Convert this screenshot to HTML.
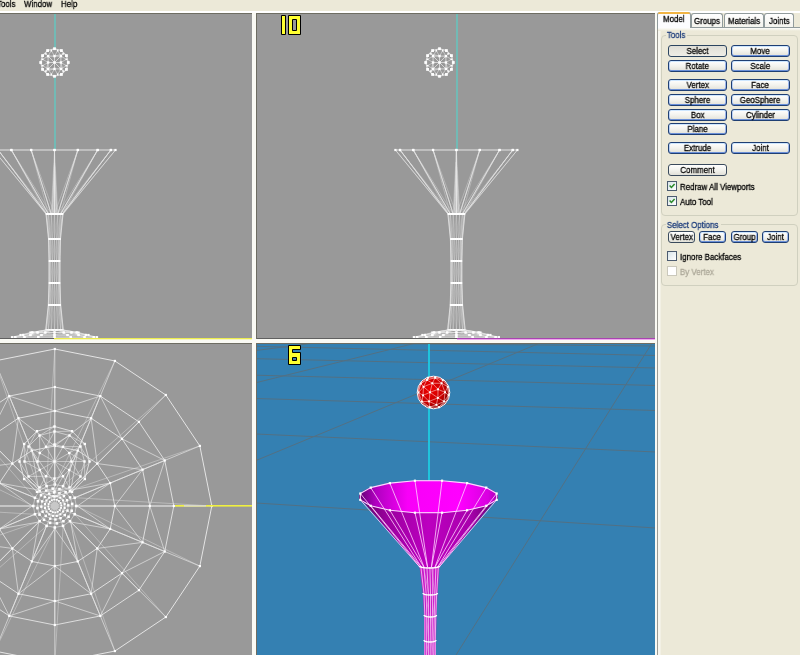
<!DOCTYPE html>
<html><head><meta charset="utf-8">
<style>
*{box-sizing:border-box}
html,body{margin:0;padding:0}
body{width:800px;height:655px;overflow:hidden;position:relative;background:#ECE9D8;font-family:"Liberation Sans",sans-serif;font-size:8px;color:#000}
.a{position:absolute}
.t{position:absolute;white-space:nowrap;line-height:10px;font-size:9px;transform-origin:0 0;transform:scaleX(.88);will-change:transform;-webkit-text-stroke:.3px}
.vp{position:absolute;background:#999;overflow:hidden}
.btn{position:absolute;height:12px;border:1px solid #1F3F73;border-radius:3px;background:linear-gradient(#FFFFFF,#F3F3EE 50%,#E2E1D8);box-shadow:inset 0 1px 0 #CEE7FF,inset 0 -1px 0 #6A8FD8,inset 1px 0 0 #BCD2F6,inset -1px 0 0 #9CB6EE;text-align:center;line-height:10px;font-size:9px;white-space:nowrap}
.btn span{display:inline-block;transform:scaleX(.88);will-change:transform;-webkit-text-stroke:.3px}
.btn.pr{border-color:#2C4560;background:linear-gradient(#E0DFD7,#EEEDE6);box-shadow:none}
.btn.pl{border-color:#3A4A5C;box-shadow:none}
.cb{position:absolute;width:10px;height:10px;border:1px solid #4C5C70;background:linear-gradient(135deg,#D8E4E8,#FFFFFF)}
</style></head><body>
<!-- menu -->
<div class="a" style="left:0;top:11px;width:800px;height:2px;background:#FFFFFF"></div>
<div class="a" style="left:0;top:13px;width:657px;height:1px;background:#6E6D62"></div>
<!-- viewports -->
<div class="vp" id="tl" style="left:0;top:14px;width:252px;height:325px"></div>
<div class="a" style="left:252px;top:13px;width:4px;height:642px;background:#FAFAF4"></div>
<div class="a" style="left:256px;top:13px;width:1px;height:326px;background:#6E6D62"></div>
<div class="vp" id="tr" style="left:257px;top:14px;width:398px;height:325px"></div>
<div class="a" style="left:0;top:339px;width:655px;height:4px;background:#FAFAF4"></div>
<div class="a" style="left:54px;top:339px;width:198px;height:1px;background:#F6F6C0"></div>
<div class="a" style="left:457px;top:339px;width:198px;height:1px;background:#EEA8EE"></div>
<div class="a" style="left:0;top:343px;width:252px;height:1px;background:#6E6D62"></div>
<div class="vp" id="bl" style="left:0;top:344px;width:252px;height:311px"></div>
<div class="a" style="left:256px;top:343px;width:399px;height:1px;background:#6E6D62"></div>
<div class="a" style="left:256px;top:343px;width:1px;height:312px;background:#6E6D62"></div>
<div class="vp" id="br" style="left:257px;top:344px;width:398px;height:311px;background:#3480B2"></div>
<div class="a" style="left:655px;top:13px;width:2px;height:642px;background:#FAFAF4"></div>

<!--VP--><svg class="a" style="left:0;top:14px" width="252" height="325" viewBox="0 14 252 325"><rect x="54" y="14" width="2" height="35" fill="#72BAB5"/><rect x="54" y="76" width="2" height="74" fill="#72BAB5"/><line x1="54.5" y1="76.3" x2="47.6" y2="74.45" stroke="#E4E4E4" stroke-width="1.1"/><line x1="47.6" y1="74.45" x2="42.55" y2="69.4" stroke="#E4E4E4" stroke-width="1.1"/><line x1="42.55" y1="69.4" x2="40.7" y2="62.5" stroke="#E4E4E4" stroke-width="1.1"/><line x1="40.7" y1="62.5" x2="42.55" y2="55.6" stroke="#E4E4E4" stroke-width="1.1"/><line x1="42.55" y1="55.6" x2="47.6" y2="50.55" stroke="#E4E4E4" stroke-width="1.1"/><line x1="47.6" y1="50.55" x2="54.5" y2="48.7" stroke="#E4E4E4" stroke-width="1.1"/><line x1="54.5" y1="48.7" x2="61.4" y2="50.55" stroke="#E4E4E4" stroke-width="1.1"/><line x1="61.4" y1="50.55" x2="66.45" y2="55.6" stroke="#E4E4E4" stroke-width="1.1"/><line x1="66.45" y1="55.6" x2="68.3" y2="62.5" stroke="#E4E4E4" stroke-width="1.1"/><line x1="68.3" y1="62.5" x2="66.45" y2="69.4" stroke="#E4E4E4" stroke-width="1.1"/><line x1="66.45" y1="69.4" x2="61.4" y2="74.45" stroke="#E4E4E4" stroke-width="1.1"/><line x1="61.4" y1="74.45" x2="54.5" y2="76.3" stroke="#E4E4E4" stroke-width="1.1"/><line x1="48.1" y1="56.1" x2="54.5" y2="56.1" stroke="#E4E4E4" stroke-width="0.8"/><line x1="54.5" y1="62.5" x2="48.1" y2="56.1" stroke="#E4E4E4" stroke-width="0.8"/><line x1="54.5" y1="56.1" x2="60.9" y2="56.1" stroke="#E4E4E4" stroke-width="0.8"/><line x1="54.5" y1="62.5" x2="54.5" y2="56.1" stroke="#E4E4E4" stroke-width="0.8"/><line x1="60.9" y1="56.1" x2="60.9" y2="62.5" stroke="#E4E4E4" stroke-width="0.8"/><line x1="54.5" y1="62.5" x2="60.9" y2="56.1" stroke="#E4E4E4" stroke-width="0.8"/><line x1="60.9" y1="62.5" x2="60.9" y2="68.9" stroke="#E4E4E4" stroke-width="0.8"/><line x1="54.5" y1="62.5" x2="60.9" y2="62.5" stroke="#E4E4E4" stroke-width="0.8"/><line x1="60.9" y1="68.9" x2="54.5" y2="68.9" stroke="#E4E4E4" stroke-width="0.8"/><line x1="54.5" y1="62.5" x2="60.9" y2="68.9" stroke="#E4E4E4" stroke-width="0.8"/><line x1="54.5" y1="68.9" x2="48.1" y2="68.9" stroke="#E4E4E4" stroke-width="0.8"/><line x1="54.5" y1="62.5" x2="54.5" y2="68.9" stroke="#E4E4E4" stroke-width="0.8"/><line x1="48.1" y1="68.9" x2="48.1" y2="62.5" stroke="#E4E4E4" stroke-width="0.8"/><line x1="54.5" y1="62.5" x2="48.1" y2="68.9" stroke="#E4E4E4" stroke-width="0.8"/><line x1="48.1" y1="62.5" x2="48.1" y2="56.1" stroke="#E4E4E4" stroke-width="0.8"/><line x1="54.5" y1="62.5" x2="48.1" y2="62.5" stroke="#E4E4E4" stroke-width="0.8"/><line x1="48.1" y1="56.1" x2="45.87" y2="53.87" stroke="#E4E4E4" stroke-width="0.6"/><line x1="48.1" y1="56.1" x2="42.72" y2="59.34" stroke="#E4E4E4" stroke-width="0.6"/><line x1="48.1" y1="56.1" x2="51.34" y2="50.72" stroke="#E4E4E4" stroke-width="0.6"/><line x1="54.5" y1="56.1" x2="57.66" y2="50.72" stroke="#E4E4E4" stroke-width="0.6"/><line x1="54.5" y1="56.1" x2="51.34" y2="50.72" stroke="#E4E4E4" stroke-width="0.6"/><line x1="54.5" y1="56.1" x2="63.13" y2="53.87" stroke="#E4E4E4" stroke-width="0.6"/><line x1="60.9" y1="56.1" x2="63.13" y2="53.87" stroke="#E4E4E4" stroke-width="0.6"/><line x1="60.9" y1="56.1" x2="66.28" y2="59.34" stroke="#E4E4E4" stroke-width="0.6"/><line x1="60.9" y1="56.1" x2="57.66" y2="50.72" stroke="#E4E4E4" stroke-width="0.6"/><line x1="60.9" y1="62.5" x2="66.28" y2="65.66" stroke="#E4E4E4" stroke-width="0.6"/><line x1="60.9" y1="62.5" x2="66.28" y2="59.34" stroke="#E4E4E4" stroke-width="0.6"/><line x1="60.9" y1="62.5" x2="63.13" y2="71.13" stroke="#E4E4E4" stroke-width="0.6"/><line x1="60.9" y1="68.9" x2="63.13" y2="71.13" stroke="#E4E4E4" stroke-width="0.6"/><line x1="60.9" y1="68.9" x2="57.66" y2="74.28" stroke="#E4E4E4" stroke-width="0.6"/><line x1="60.9" y1="68.9" x2="66.28" y2="65.66" stroke="#E4E4E4" stroke-width="0.6"/><line x1="54.5" y1="68.9" x2="51.34" y2="74.28" stroke="#E4E4E4" stroke-width="0.6"/><line x1="54.5" y1="68.9" x2="57.66" y2="74.28" stroke="#E4E4E4" stroke-width="0.6"/><line x1="54.5" y1="68.9" x2="45.87" y2="71.13" stroke="#E4E4E4" stroke-width="0.6"/><line x1="48.1" y1="68.9" x2="45.87" y2="71.13" stroke="#E4E4E4" stroke-width="0.6"/><line x1="48.1" y1="68.9" x2="51.34" y2="74.28" stroke="#E4E4E4" stroke-width="0.6"/><line x1="48.1" y1="68.9" x2="42.72" y2="65.66" stroke="#E4E4E4" stroke-width="0.6"/><line x1="48.1" y1="62.5" x2="42.72" y2="65.66" stroke="#E4E4E4" stroke-width="0.6"/><line x1="48.1" y1="62.5" x2="42.72" y2="59.34" stroke="#E4E4E4" stroke-width="0.6"/><line x1="48.1" y1="62.5" x2="45.87" y2="71.13" stroke="#E4E4E4" stroke-width="0.6"/><rect x="53.1" y="74.9" width="2.8" height="2.8" fill="#FFFFFF"/><rect x="46.2" y="73.05" width="2.8" height="2.8" fill="#FFFFFF"/><rect x="41.15" y="68" width="2.8" height="2.8" fill="#FFFFFF"/><rect x="39.3" y="61.1" width="2.8" height="2.8" fill="#FFFFFF"/><rect x="41.15" y="54.2" width="2.8" height="2.8" fill="#FFFFFF"/><rect x="46.2" y="49.15" width="2.8" height="2.8" fill="#FFFFFF"/><rect x="53.1" y="47.3" width="2.8" height="2.8" fill="#FFFFFF"/><rect x="60" y="49.15" width="2.8" height="2.8" fill="#FFFFFF"/><rect x="65.05" y="54.2" width="2.8" height="2.8" fill="#FFFFFF"/><rect x="66.9" y="61.1" width="2.8" height="2.8" fill="#FFFFFF"/><rect x="65.05" y="68" width="2.8" height="2.8" fill="#FFFFFF"/><rect x="60" y="73.05" width="2.8" height="2.8" fill="#FFFFFF"/><rect x="50.54" y="73.48" width="1.6" height="1.6" fill="#FFFFFF"/><rect x="45.07" y="70.33" width="1.6" height="1.6" fill="#FFFFFF"/><rect x="41.92" y="64.86" width="1.6" height="1.6" fill="#FFFFFF"/><rect x="41.92" y="58.54" width="1.6" height="1.6" fill="#FFFFFF"/><rect x="45.07" y="53.07" width="1.6" height="1.6" fill="#FFFFFF"/><rect x="50.54" y="49.92" width="1.6" height="1.6" fill="#FFFFFF"/><rect x="56.86" y="49.92" width="1.6" height="1.6" fill="#FFFFFF"/><rect x="62.33" y="53.07" width="1.6" height="1.6" fill="#FFFFFF"/><rect x="65.48" y="58.54" width="1.6" height="1.6" fill="#FFFFFF"/><rect x="65.48" y="64.86" width="1.6" height="1.6" fill="#FFFFFF"/><rect x="62.33" y="70.33" width="1.6" height="1.6" fill="#FFFFFF"/><rect x="56.86" y="73.48" width="1.6" height="1.6" fill="#FFFFFF"/><rect x="46.9" y="54.9" width="2.4" height="2.4" fill="#FFFFFF"/><rect x="53.3" y="54.9" width="2.4" height="2.4" fill="#FFFFFF"/><rect x="59.7" y="54.9" width="2.4" height="2.4" fill="#FFFFFF"/><rect x="59.7" y="61.3" width="2.4" height="2.4" fill="#FFFFFF"/><rect x="59.7" y="67.7" width="2.4" height="2.4" fill="#FFFFFF"/><rect x="53.3" y="67.7" width="2.4" height="2.4" fill="#FFFFFF"/><rect x="46.9" y="67.7" width="2.4" height="2.4" fill="#FFFFFF"/><rect x="46.9" y="61.3" width="2.4" height="2.4" fill="#FFFFFF"/><rect x="53.3" y="61.3" width="2.4" height="2.4" fill="#FFFFFF"/><line x1="-6.5" y1="150" x2="115.5" y2="150" stroke="#E4E4E4" stroke-width="1"/><line x1="115.5" y1="150" x2="63" y2="214" stroke="#E4E4E4" stroke-width="0.7"/><line x1="115.5" y1="150" x2="62.35" y2="214" stroke="#E4E4E4" stroke-width="0.5" stroke-opacity="0.7"/><line x1="110.86" y1="150" x2="62.35" y2="214" stroke="#E4E4E4" stroke-width="0.7"/><line x1="110.86" y1="150" x2="60.51" y2="214" stroke="#E4E4E4" stroke-width="0.5" stroke-opacity="0.7"/><line x1="97.63" y1="150" x2="60.51" y2="214" stroke="#E4E4E4" stroke-width="0.7"/><line x1="97.63" y1="150" x2="57.75" y2="214" stroke="#E4E4E4" stroke-width="0.5" stroke-opacity="0.7"/><line x1="77.84" y1="150" x2="57.75" y2="214" stroke="#E4E4E4" stroke-width="0.7"/><line x1="77.84" y1="150" x2="54.5" y2="214" stroke="#E4E4E4" stroke-width="0.5" stroke-opacity="0.7"/><line x1="54.5" y1="150" x2="54.5" y2="214" stroke="#E4E4E4" stroke-width="0.7"/><line x1="54.5" y1="150" x2="51.25" y2="214" stroke="#E4E4E4" stroke-width="0.5" stroke-opacity="0.7"/><line x1="31.16" y1="150" x2="51.25" y2="214" stroke="#E4E4E4" stroke-width="0.7"/><line x1="31.16" y1="150" x2="48.49" y2="214" stroke="#E4E4E4" stroke-width="0.5" stroke-opacity="0.7"/><line x1="11.37" y1="150" x2="48.49" y2="214" stroke="#E4E4E4" stroke-width="0.7"/><line x1="11.37" y1="150" x2="46.65" y2="214" stroke="#E4E4E4" stroke-width="0.5" stroke-opacity="0.7"/><line x1="-1.86" y1="150" x2="46.65" y2="214" stroke="#E4E4E4" stroke-width="0.7"/><line x1="-1.86" y1="150" x2="46" y2="214" stroke="#E4E4E4" stroke-width="0.5" stroke-opacity="0.7"/><line x1="-6.5" y1="150" x2="46" y2="214" stroke="#E4E4E4" stroke-width="0.7"/><line x1="-6.5" y1="150" x2="46.65" y2="214" stroke="#E4E4E4" stroke-width="0.5" stroke-opacity="0.7"/><line x1="-1.86" y1="150" x2="46.65" y2="214" stroke="#E4E4E4" stroke-width="0.7"/><line x1="-1.86" y1="150" x2="48.49" y2="214" stroke="#E4E4E4" stroke-width="0.5" stroke-opacity="0.7"/><line x1="11.37" y1="150" x2="48.49" y2="214" stroke="#E4E4E4" stroke-width="0.7"/><line x1="11.37" y1="150" x2="51.25" y2="214" stroke="#E4E4E4" stroke-width="0.5" stroke-opacity="0.7"/><line x1="31.16" y1="150" x2="51.25" y2="214" stroke="#E4E4E4" stroke-width="0.7"/><line x1="31.16" y1="150" x2="54.5" y2="214" stroke="#E4E4E4" stroke-width="0.5" stroke-opacity="0.7"/><line x1="54.5" y1="150" x2="54.5" y2="214" stroke="#E4E4E4" stroke-width="0.7"/><line x1="54.5" y1="150" x2="57.75" y2="214" stroke="#E4E4E4" stroke-width="0.5" stroke-opacity="0.7"/><line x1="77.84" y1="150" x2="57.75" y2="214" stroke="#E4E4E4" stroke-width="0.7"/><line x1="77.84" y1="150" x2="60.51" y2="214" stroke="#E4E4E4" stroke-width="0.5" stroke-opacity="0.7"/><line x1="97.63" y1="150" x2="60.51" y2="214" stroke="#E4E4E4" stroke-width="0.7"/><line x1="97.63" y1="150" x2="62.35" y2="214" stroke="#E4E4E4" stroke-width="0.5" stroke-opacity="0.7"/><line x1="110.86" y1="150" x2="62.35" y2="214" stroke="#E4E4E4" stroke-width="0.7"/><line x1="110.86" y1="150" x2="63" y2="214" stroke="#E4E4E4" stroke-width="0.5" stroke-opacity="0.7"/><line x1="54.5" y1="162" x2="57.1" y2="214" stroke="#E4E4E4" stroke-width="0.5" stroke-opacity="0.5"/><line x1="54.5" y1="162" x2="56.9" y2="214" stroke="#E4E4E4" stroke-width="0.5" stroke-opacity="0.5"/><line x1="54.5" y1="162" x2="56.34" y2="214" stroke="#E4E4E4" stroke-width="0.5" stroke-opacity="0.5"/><line x1="54.5" y1="162" x2="55.49" y2="214" stroke="#E4E4E4" stroke-width="0.5" stroke-opacity="0.5"/><line x1="54.5" y1="162" x2="54.5" y2="214" stroke="#E4E4E4" stroke-width="0.5" stroke-opacity="0.5"/><line x1="54.5" y1="162" x2="53.51" y2="214" stroke="#E4E4E4" stroke-width="0.5" stroke-opacity="0.5"/><line x1="54.5" y1="162" x2="52.66" y2="214" stroke="#E4E4E4" stroke-width="0.5" stroke-opacity="0.5"/><line x1="54.5" y1="162" x2="52.1" y2="214" stroke="#E4E4E4" stroke-width="0.5" stroke-opacity="0.5"/><line x1="54.5" y1="162" x2="51.9" y2="214" stroke="#E4E4E4" stroke-width="0.5" stroke-opacity="0.5"/><line x1="54.5" y1="162" x2="52.1" y2="214" stroke="#E4E4E4" stroke-width="0.5" stroke-opacity="0.5"/><line x1="54.5" y1="162" x2="52.66" y2="214" stroke="#E4E4E4" stroke-width="0.5" stroke-opacity="0.5"/><line x1="54.5" y1="162" x2="53.51" y2="214" stroke="#E4E4E4" stroke-width="0.5" stroke-opacity="0.5"/><line x1="54.5" y1="162" x2="54.5" y2="214" stroke="#E4E4E4" stroke-width="0.5" stroke-opacity="0.5"/><line x1="54.5" y1="162" x2="55.49" y2="214" stroke="#E4E4E4" stroke-width="0.5" stroke-opacity="0.5"/><line x1="54.5" y1="162" x2="56.34" y2="214" stroke="#E4E4E4" stroke-width="0.5" stroke-opacity="0.5"/><line x1="54.5" y1="162" x2="56.9" y2="214" stroke="#E4E4E4" stroke-width="0.5" stroke-opacity="0.5"/><line x1="54.5" y1="150" x2="54.5" y2="214" stroke="#E4E4E4" stroke-width="0.9"/><line x1="63" y1="214" x2="60.5" y2="239" stroke="#E4E4E4" stroke-width="0.8" stroke-opacity="1"/><line x1="63" y1="214" x2="60.04" y2="239" stroke="#E4E4E4" stroke-width="0.5" stroke-opacity="0.45"/><line x1="62.35" y1="214" x2="60.5" y2="239" stroke="#E4E4E4" stroke-width="0.5" stroke-opacity="0.3"/><line x1="62.35" y1="214" x2="60.04" y2="239" stroke="#E4E4E4" stroke-width="0.6" stroke-opacity="0.7"/><line x1="62.35" y1="214" x2="58.74" y2="239" stroke="#E4E4E4" stroke-width="0.5" stroke-opacity="0.45"/><line x1="60.51" y1="214" x2="60.04" y2="239" stroke="#E4E4E4" stroke-width="0.5" stroke-opacity="0.3"/><line x1="60.51" y1="214" x2="58.74" y2="239" stroke="#E4E4E4" stroke-width="0.6" stroke-opacity="0.7"/><line x1="60.51" y1="214" x2="56.8" y2="239" stroke="#E4E4E4" stroke-width="0.5" stroke-opacity="0.45"/><line x1="57.75" y1="214" x2="58.74" y2="239" stroke="#E4E4E4" stroke-width="0.5" stroke-opacity="0.3"/><line x1="57.75" y1="214" x2="56.8" y2="239" stroke="#E4E4E4" stroke-width="0.6" stroke-opacity="0.7"/><line x1="57.75" y1="214" x2="54.5" y2="239" stroke="#E4E4E4" stroke-width="0.5" stroke-opacity="0.45"/><line x1="54.5" y1="214" x2="56.8" y2="239" stroke="#E4E4E4" stroke-width="0.5" stroke-opacity="0.3"/><line x1="54.5" y1="214" x2="54.5" y2="239" stroke="#E4E4E4" stroke-width="0.6" stroke-opacity="0.7"/><line x1="54.5" y1="214" x2="52.2" y2="239" stroke="#E4E4E4" stroke-width="0.5" stroke-opacity="0.45"/><line x1="51.25" y1="214" x2="54.5" y2="239" stroke="#E4E4E4" stroke-width="0.5" stroke-opacity="0.3"/><line x1="51.25" y1="214" x2="52.2" y2="239" stroke="#E4E4E4" stroke-width="0.6" stroke-opacity="0.7"/><line x1="51.25" y1="214" x2="50.26" y2="239" stroke="#E4E4E4" stroke-width="0.5" stroke-opacity="0.45"/><line x1="48.49" y1="214" x2="52.2" y2="239" stroke="#E4E4E4" stroke-width="0.5" stroke-opacity="0.3"/><line x1="48.49" y1="214" x2="50.26" y2="239" stroke="#E4E4E4" stroke-width="0.6" stroke-opacity="0.7"/><line x1="48.49" y1="214" x2="48.96" y2="239" stroke="#E4E4E4" stroke-width="0.5" stroke-opacity="0.45"/><line x1="46.65" y1="214" x2="50.26" y2="239" stroke="#E4E4E4" stroke-width="0.5" stroke-opacity="0.3"/><line x1="46.65" y1="214" x2="48.96" y2="239" stroke="#E4E4E4" stroke-width="0.6" stroke-opacity="0.7"/><line x1="46.65" y1="214" x2="48.5" y2="239" stroke="#E4E4E4" stroke-width="0.5" stroke-opacity="0.45"/><line x1="46" y1="214" x2="48.96" y2="239" stroke="#E4E4E4" stroke-width="0.5" stroke-opacity="0.3"/><line x1="46" y1="214" x2="48.5" y2="239" stroke="#E4E4E4" stroke-width="0.8" stroke-opacity="1"/><line x1="60.5" y1="239" x2="60" y2="261" stroke="#E4E4E4" stroke-width="0.8" stroke-opacity="1"/><line x1="60.5" y1="239" x2="59.58" y2="261" stroke="#E4E4E4" stroke-width="0.5" stroke-opacity="0.45"/><line x1="60.04" y1="239" x2="60" y2="261" stroke="#E4E4E4" stroke-width="0.5" stroke-opacity="0.3"/><line x1="60.04" y1="239" x2="59.58" y2="261" stroke="#E4E4E4" stroke-width="0.6" stroke-opacity="0.7"/><line x1="60.04" y1="239" x2="58.39" y2="261" stroke="#E4E4E4" stroke-width="0.5" stroke-opacity="0.45"/><line x1="58.74" y1="239" x2="59.58" y2="261" stroke="#E4E4E4" stroke-width="0.5" stroke-opacity="0.3"/><line x1="58.74" y1="239" x2="58.39" y2="261" stroke="#E4E4E4" stroke-width="0.6" stroke-opacity="0.7"/><line x1="58.74" y1="239" x2="56.6" y2="261" stroke="#E4E4E4" stroke-width="0.5" stroke-opacity="0.45"/><line x1="56.8" y1="239" x2="58.39" y2="261" stroke="#E4E4E4" stroke-width="0.5" stroke-opacity="0.3"/><line x1="56.8" y1="239" x2="56.6" y2="261" stroke="#E4E4E4" stroke-width="0.6" stroke-opacity="0.7"/><line x1="56.8" y1="239" x2="54.5" y2="261" stroke="#E4E4E4" stroke-width="0.5" stroke-opacity="0.45"/><line x1="54.5" y1="239" x2="56.6" y2="261" stroke="#E4E4E4" stroke-width="0.5" stroke-opacity="0.3"/><line x1="54.5" y1="239" x2="54.5" y2="261" stroke="#E4E4E4" stroke-width="0.6" stroke-opacity="0.7"/><line x1="54.5" y1="239" x2="52.4" y2="261" stroke="#E4E4E4" stroke-width="0.5" stroke-opacity="0.45"/><line x1="52.2" y1="239" x2="54.5" y2="261" stroke="#E4E4E4" stroke-width="0.5" stroke-opacity="0.3"/><line x1="52.2" y1="239" x2="52.4" y2="261" stroke="#E4E4E4" stroke-width="0.6" stroke-opacity="0.7"/><line x1="52.2" y1="239" x2="50.61" y2="261" stroke="#E4E4E4" stroke-width="0.5" stroke-opacity="0.45"/><line x1="50.26" y1="239" x2="52.4" y2="261" stroke="#E4E4E4" stroke-width="0.5" stroke-opacity="0.3"/><line x1="50.26" y1="239" x2="50.61" y2="261" stroke="#E4E4E4" stroke-width="0.6" stroke-opacity="0.7"/><line x1="50.26" y1="239" x2="49.42" y2="261" stroke="#E4E4E4" stroke-width="0.5" stroke-opacity="0.45"/><line x1="48.96" y1="239" x2="50.61" y2="261" stroke="#E4E4E4" stroke-width="0.5" stroke-opacity="0.3"/><line x1="48.96" y1="239" x2="49.42" y2="261" stroke="#E4E4E4" stroke-width="0.6" stroke-opacity="0.7"/><line x1="48.96" y1="239" x2="49" y2="261" stroke="#E4E4E4" stroke-width="0.5" stroke-opacity="0.45"/><line x1="48.5" y1="239" x2="49.42" y2="261" stroke="#E4E4E4" stroke-width="0.5" stroke-opacity="0.3"/><line x1="48.5" y1="239" x2="49" y2="261" stroke="#E4E4E4" stroke-width="0.8" stroke-opacity="1"/><line x1="60" y1="261" x2="60" y2="283" stroke="#E4E4E4" stroke-width="0.8" stroke-opacity="1"/><line x1="60" y1="261" x2="59.58" y2="283" stroke="#E4E4E4" stroke-width="0.5" stroke-opacity="0.45"/><line x1="59.58" y1="261" x2="60" y2="283" stroke="#E4E4E4" stroke-width="0.5" stroke-opacity="0.3"/><line x1="59.58" y1="261" x2="59.58" y2="283" stroke="#E4E4E4" stroke-width="0.6" stroke-opacity="0.7"/><line x1="59.58" y1="261" x2="58.39" y2="283" stroke="#E4E4E4" stroke-width="0.5" stroke-opacity="0.45"/><line x1="58.39" y1="261" x2="59.58" y2="283" stroke="#E4E4E4" stroke-width="0.5" stroke-opacity="0.3"/><line x1="58.39" y1="261" x2="58.39" y2="283" stroke="#E4E4E4" stroke-width="0.6" stroke-opacity="0.7"/><line x1="58.39" y1="261" x2="56.6" y2="283" stroke="#E4E4E4" stroke-width="0.5" stroke-opacity="0.45"/><line x1="56.6" y1="261" x2="58.39" y2="283" stroke="#E4E4E4" stroke-width="0.5" stroke-opacity="0.3"/><line x1="56.6" y1="261" x2="56.6" y2="283" stroke="#E4E4E4" stroke-width="0.6" stroke-opacity="0.7"/><line x1="56.6" y1="261" x2="54.5" y2="283" stroke="#E4E4E4" stroke-width="0.5" stroke-opacity="0.45"/><line x1="54.5" y1="261" x2="56.6" y2="283" stroke="#E4E4E4" stroke-width="0.5" stroke-opacity="0.3"/><line x1="54.5" y1="261" x2="54.5" y2="283" stroke="#E4E4E4" stroke-width="0.6" stroke-opacity="0.7"/><line x1="54.5" y1="261" x2="52.4" y2="283" stroke="#E4E4E4" stroke-width="0.5" stroke-opacity="0.45"/><line x1="52.4" y1="261" x2="54.5" y2="283" stroke="#E4E4E4" stroke-width="0.5" stroke-opacity="0.3"/><line x1="52.4" y1="261" x2="52.4" y2="283" stroke="#E4E4E4" stroke-width="0.6" stroke-opacity="0.7"/><line x1="52.4" y1="261" x2="50.61" y2="283" stroke="#E4E4E4" stroke-width="0.5" stroke-opacity="0.45"/><line x1="50.61" y1="261" x2="52.4" y2="283" stroke="#E4E4E4" stroke-width="0.5" stroke-opacity="0.3"/><line x1="50.61" y1="261" x2="50.61" y2="283" stroke="#E4E4E4" stroke-width="0.6" stroke-opacity="0.7"/><line x1="50.61" y1="261" x2="49.42" y2="283" stroke="#E4E4E4" stroke-width="0.5" stroke-opacity="0.45"/><line x1="49.42" y1="261" x2="50.61" y2="283" stroke="#E4E4E4" stroke-width="0.5" stroke-opacity="0.3"/><line x1="49.42" y1="261" x2="49.42" y2="283" stroke="#E4E4E4" stroke-width="0.6" stroke-opacity="0.7"/><line x1="49.42" y1="261" x2="49" y2="283" stroke="#E4E4E4" stroke-width="0.5" stroke-opacity="0.45"/><line x1="49" y1="261" x2="49.42" y2="283" stroke="#E4E4E4" stroke-width="0.5" stroke-opacity="0.3"/><line x1="49" y1="261" x2="49" y2="283" stroke="#E4E4E4" stroke-width="0.8" stroke-opacity="1"/><line x1="60" y1="283" x2="60.7" y2="305" stroke="#E4E4E4" stroke-width="0.8" stroke-opacity="1"/><line x1="60" y1="283" x2="60.23" y2="305" stroke="#E4E4E4" stroke-width="0.5" stroke-opacity="0.45"/><line x1="59.58" y1="283" x2="60.7" y2="305" stroke="#E4E4E4" stroke-width="0.5" stroke-opacity="0.3"/><line x1="59.58" y1="283" x2="60.23" y2="305" stroke="#E4E4E4" stroke-width="0.6" stroke-opacity="0.7"/><line x1="59.58" y1="283" x2="58.88" y2="305" stroke="#E4E4E4" stroke-width="0.5" stroke-opacity="0.45"/><line x1="58.39" y1="283" x2="60.23" y2="305" stroke="#E4E4E4" stroke-width="0.5" stroke-opacity="0.3"/><line x1="58.39" y1="283" x2="58.88" y2="305" stroke="#E4E4E4" stroke-width="0.6" stroke-opacity="0.7"/><line x1="58.39" y1="283" x2="56.87" y2="305" stroke="#E4E4E4" stroke-width="0.5" stroke-opacity="0.45"/><line x1="56.6" y1="283" x2="58.88" y2="305" stroke="#E4E4E4" stroke-width="0.5" stroke-opacity="0.3"/><line x1="56.6" y1="283" x2="56.87" y2="305" stroke="#E4E4E4" stroke-width="0.6" stroke-opacity="0.7"/><line x1="56.6" y1="283" x2="54.5" y2="305" stroke="#E4E4E4" stroke-width="0.5" stroke-opacity="0.45"/><line x1="54.5" y1="283" x2="56.87" y2="305" stroke="#E4E4E4" stroke-width="0.5" stroke-opacity="0.3"/><line x1="54.5" y1="283" x2="54.5" y2="305" stroke="#E4E4E4" stroke-width="0.6" stroke-opacity="0.7"/><line x1="54.5" y1="283" x2="52.13" y2="305" stroke="#E4E4E4" stroke-width="0.5" stroke-opacity="0.45"/><line x1="52.4" y1="283" x2="54.5" y2="305" stroke="#E4E4E4" stroke-width="0.5" stroke-opacity="0.3"/><line x1="52.4" y1="283" x2="52.13" y2="305" stroke="#E4E4E4" stroke-width="0.6" stroke-opacity="0.7"/><line x1="52.4" y1="283" x2="50.12" y2="305" stroke="#E4E4E4" stroke-width="0.5" stroke-opacity="0.45"/><line x1="50.61" y1="283" x2="52.13" y2="305" stroke="#E4E4E4" stroke-width="0.5" stroke-opacity="0.3"/><line x1="50.61" y1="283" x2="50.12" y2="305" stroke="#E4E4E4" stroke-width="0.6" stroke-opacity="0.7"/><line x1="50.61" y1="283" x2="48.77" y2="305" stroke="#E4E4E4" stroke-width="0.5" stroke-opacity="0.45"/><line x1="49.42" y1="283" x2="50.12" y2="305" stroke="#E4E4E4" stroke-width="0.5" stroke-opacity="0.3"/><line x1="49.42" y1="283" x2="48.77" y2="305" stroke="#E4E4E4" stroke-width="0.6" stroke-opacity="0.7"/><line x1="49.42" y1="283" x2="48.3" y2="305" stroke="#E4E4E4" stroke-width="0.5" stroke-opacity="0.45"/><line x1="49" y1="283" x2="48.77" y2="305" stroke="#E4E4E4" stroke-width="0.5" stroke-opacity="0.3"/><line x1="49" y1="283" x2="48.3" y2="305" stroke="#E4E4E4" stroke-width="0.8" stroke-opacity="1"/><line x1="60.7" y1="305" x2="63.3" y2="330" stroke="#E4E4E4" stroke-width="0.8" stroke-opacity="1"/><line x1="60.7" y1="305" x2="62.63" y2="330" stroke="#E4E4E4" stroke-width="0.5" stroke-opacity="0.45"/><line x1="60.23" y1="305" x2="63.3" y2="330" stroke="#E4E4E4" stroke-width="0.5" stroke-opacity="0.3"/><line x1="60.23" y1="305" x2="62.63" y2="330" stroke="#E4E4E4" stroke-width="0.6" stroke-opacity="0.7"/><line x1="60.23" y1="305" x2="60.72" y2="330" stroke="#E4E4E4" stroke-width="0.5" stroke-opacity="0.45"/><line x1="58.88" y1="305" x2="62.63" y2="330" stroke="#E4E4E4" stroke-width="0.5" stroke-opacity="0.3"/><line x1="58.88" y1="305" x2="60.72" y2="330" stroke="#E4E4E4" stroke-width="0.6" stroke-opacity="0.7"/><line x1="58.88" y1="305" x2="57.87" y2="330" stroke="#E4E4E4" stroke-width="0.5" stroke-opacity="0.45"/><line x1="56.87" y1="305" x2="60.72" y2="330" stroke="#E4E4E4" stroke-width="0.5" stroke-opacity="0.3"/><line x1="56.87" y1="305" x2="57.87" y2="330" stroke="#E4E4E4" stroke-width="0.6" stroke-opacity="0.7"/><line x1="56.87" y1="305" x2="54.5" y2="330" stroke="#E4E4E4" stroke-width="0.5" stroke-opacity="0.45"/><line x1="54.5" y1="305" x2="57.87" y2="330" stroke="#E4E4E4" stroke-width="0.5" stroke-opacity="0.3"/><line x1="54.5" y1="305" x2="54.5" y2="330" stroke="#E4E4E4" stroke-width="0.6" stroke-opacity="0.7"/><line x1="54.5" y1="305" x2="51.13" y2="330" stroke="#E4E4E4" stroke-width="0.5" stroke-opacity="0.45"/><line x1="52.13" y1="305" x2="54.5" y2="330" stroke="#E4E4E4" stroke-width="0.5" stroke-opacity="0.3"/><line x1="52.13" y1="305" x2="51.13" y2="330" stroke="#E4E4E4" stroke-width="0.6" stroke-opacity="0.7"/><line x1="52.13" y1="305" x2="48.28" y2="330" stroke="#E4E4E4" stroke-width="0.5" stroke-opacity="0.45"/><line x1="50.12" y1="305" x2="51.13" y2="330" stroke="#E4E4E4" stroke-width="0.5" stroke-opacity="0.3"/><line x1="50.12" y1="305" x2="48.28" y2="330" stroke="#E4E4E4" stroke-width="0.6" stroke-opacity="0.7"/><line x1="50.12" y1="305" x2="46.37" y2="330" stroke="#E4E4E4" stroke-width="0.5" stroke-opacity="0.45"/><line x1="48.77" y1="305" x2="48.28" y2="330" stroke="#E4E4E4" stroke-width="0.5" stroke-opacity="0.3"/><line x1="48.77" y1="305" x2="46.37" y2="330" stroke="#E4E4E4" stroke-width="0.6" stroke-opacity="0.7"/><line x1="48.77" y1="305" x2="45.7" y2="330" stroke="#E4E4E4" stroke-width="0.5" stroke-opacity="0.45"/><line x1="48.3" y1="305" x2="46.37" y2="330" stroke="#E4E4E4" stroke-width="0.5" stroke-opacity="0.3"/><line x1="48.3" y1="305" x2="45.7" y2="330" stroke="#E4E4E4" stroke-width="0.8" stroke-opacity="1"/><rect x="45.7" y="213" width="17.6" height="2" fill="#FFF"/><rect x="48.2" y="238" width="12.6" height="2" fill="#FFF"/><rect x="48.7" y="260" width="11.6" height="2" fill="#FFF"/><rect x="48.7" y="282" width="11.6" height="2" fill="#FFF"/><rect x="48" y="304" width="13" height="2" fill="#FFF"/><rect x="45.4" y="329" width="18.2" height="2" fill="#FFF"/><line x1="63.3" y1="330" x2="78.5" y2="332.5" stroke="#E4E4E4" stroke-width="0.6" stroke-opacity="0.8"/><line x1="63.3" y1="330" x2="76.67" y2="332.5" stroke="#E4E4E4" stroke-width="0.5" stroke-opacity="0.6"/><line x1="62.63" y1="330" x2="76.67" y2="332.5" stroke="#E4E4E4" stroke-width="0.6" stroke-opacity="0.8"/><line x1="62.63" y1="330" x2="71.47" y2="332.5" stroke="#E4E4E4" stroke-width="0.5" stroke-opacity="0.6"/><line x1="60.72" y1="330" x2="71.47" y2="332.5" stroke="#E4E4E4" stroke-width="0.6" stroke-opacity="0.8"/><line x1="60.72" y1="330" x2="63.68" y2="332.5" stroke="#E4E4E4" stroke-width="0.5" stroke-opacity="0.6"/><line x1="57.87" y1="330" x2="63.68" y2="332.5" stroke="#E4E4E4" stroke-width="0.6" stroke-opacity="0.8"/><line x1="57.87" y1="330" x2="54.5" y2="332.5" stroke="#E4E4E4" stroke-width="0.5" stroke-opacity="0.6"/><line x1="54.5" y1="330" x2="54.5" y2="332.5" stroke="#E4E4E4" stroke-width="0.6" stroke-opacity="0.8"/><line x1="54.5" y1="330" x2="45.32" y2="332.5" stroke="#E4E4E4" stroke-width="0.5" stroke-opacity="0.6"/><line x1="51.13" y1="330" x2="45.32" y2="332.5" stroke="#E4E4E4" stroke-width="0.6" stroke-opacity="0.8"/><line x1="51.13" y1="330" x2="37.53" y2="332.5" stroke="#E4E4E4" stroke-width="0.5" stroke-opacity="0.6"/><line x1="48.28" y1="330" x2="37.53" y2="332.5" stroke="#E4E4E4" stroke-width="0.6" stroke-opacity="0.8"/><line x1="48.28" y1="330" x2="32.33" y2="332.5" stroke="#E4E4E4" stroke-width="0.5" stroke-opacity="0.6"/><line x1="46.37" y1="330" x2="32.33" y2="332.5" stroke="#E4E4E4" stroke-width="0.6" stroke-opacity="0.8"/><line x1="46.37" y1="330" x2="30.5" y2="332.5" stroke="#E4E4E4" stroke-width="0.5" stroke-opacity="0.6"/><line x1="45.7" y1="330" x2="30.5" y2="332.5" stroke="#E4E4E4" stroke-width="0.6" stroke-opacity="0.8"/><line x1="45.7" y1="330" x2="32.33" y2="332.5" stroke="#E4E4E4" stroke-width="0.5" stroke-opacity="0.6"/><line x1="46.37" y1="330" x2="32.33" y2="332.5" stroke="#E4E4E4" stroke-width="0.6" stroke-opacity="0.8"/><line x1="46.37" y1="330" x2="37.53" y2="332.5" stroke="#E4E4E4" stroke-width="0.5" stroke-opacity="0.6"/><line x1="48.28" y1="330" x2="37.53" y2="332.5" stroke="#E4E4E4" stroke-width="0.6" stroke-opacity="0.8"/><line x1="48.28" y1="330" x2="45.32" y2="332.5" stroke="#E4E4E4" stroke-width="0.5" stroke-opacity="0.6"/><line x1="51.13" y1="330" x2="45.32" y2="332.5" stroke="#E4E4E4" stroke-width="0.6" stroke-opacity="0.8"/><line x1="51.13" y1="330" x2="54.5" y2="332.5" stroke="#E4E4E4" stroke-width="0.5" stroke-opacity="0.6"/><line x1="54.5" y1="330" x2="54.5" y2="332.5" stroke="#E4E4E4" stroke-width="0.6" stroke-opacity="0.8"/><line x1="54.5" y1="330" x2="63.68" y2="332.5" stroke="#E4E4E4" stroke-width="0.5" stroke-opacity="0.6"/><line x1="57.87" y1="330" x2="63.68" y2="332.5" stroke="#E4E4E4" stroke-width="0.6" stroke-opacity="0.8"/><line x1="57.87" y1="330" x2="71.47" y2="332.5" stroke="#E4E4E4" stroke-width="0.5" stroke-opacity="0.6"/><line x1="60.72" y1="330" x2="71.47" y2="332.5" stroke="#E4E4E4" stroke-width="0.6" stroke-opacity="0.8"/><line x1="60.72" y1="330" x2="76.67" y2="332.5" stroke="#E4E4E4" stroke-width="0.5" stroke-opacity="0.6"/><line x1="62.63" y1="330" x2="76.67" y2="332.5" stroke="#E4E4E4" stroke-width="0.6" stroke-opacity="0.8"/><line x1="62.63" y1="330" x2="78.5" y2="332.5" stroke="#E4E4E4" stroke-width="0.5" stroke-opacity="0.6"/><line x1="78.5" y1="332.5" x2="88.5" y2="335" stroke="#E4E4E4" stroke-width="0.6" stroke-opacity="0.8"/><line x1="78.5" y1="332.5" x2="85.91" y2="335" stroke="#E4E4E4" stroke-width="0.5" stroke-opacity="0.6"/><line x1="76.67" y1="332.5" x2="85.91" y2="335" stroke="#E4E4E4" stroke-width="0.6" stroke-opacity="0.8"/><line x1="76.67" y1="332.5" x2="78.54" y2="335" stroke="#E4E4E4" stroke-width="0.5" stroke-opacity="0.6"/><line x1="71.47" y1="332.5" x2="78.54" y2="335" stroke="#E4E4E4" stroke-width="0.6" stroke-opacity="0.8"/><line x1="71.47" y1="332.5" x2="67.51" y2="335" stroke="#E4E4E4" stroke-width="0.5" stroke-opacity="0.6"/><line x1="63.68" y1="332.5" x2="67.51" y2="335" stroke="#E4E4E4" stroke-width="0.6" stroke-opacity="0.8"/><line x1="63.68" y1="332.5" x2="54.5" y2="335" stroke="#E4E4E4" stroke-width="0.5" stroke-opacity="0.6"/><line x1="54.5" y1="332.5" x2="54.5" y2="335" stroke="#E4E4E4" stroke-width="0.6" stroke-opacity="0.8"/><line x1="54.5" y1="332.5" x2="41.49" y2="335" stroke="#E4E4E4" stroke-width="0.5" stroke-opacity="0.6"/><line x1="45.32" y1="332.5" x2="41.49" y2="335" stroke="#E4E4E4" stroke-width="0.6" stroke-opacity="0.8"/><line x1="45.32" y1="332.5" x2="30.46" y2="335" stroke="#E4E4E4" stroke-width="0.5" stroke-opacity="0.6"/><line x1="37.53" y1="332.5" x2="30.46" y2="335" stroke="#E4E4E4" stroke-width="0.6" stroke-opacity="0.8"/><line x1="37.53" y1="332.5" x2="23.09" y2="335" stroke="#E4E4E4" stroke-width="0.5" stroke-opacity="0.6"/><line x1="32.33" y1="332.5" x2="23.09" y2="335" stroke="#E4E4E4" stroke-width="0.6" stroke-opacity="0.8"/><line x1="32.33" y1="332.5" x2="20.5" y2="335" stroke="#E4E4E4" stroke-width="0.5" stroke-opacity="0.6"/><line x1="30.5" y1="332.5" x2="20.5" y2="335" stroke="#E4E4E4" stroke-width="0.6" stroke-opacity="0.8"/><line x1="30.5" y1="332.5" x2="23.09" y2="335" stroke="#E4E4E4" stroke-width="0.5" stroke-opacity="0.6"/><line x1="32.33" y1="332.5" x2="23.09" y2="335" stroke="#E4E4E4" stroke-width="0.6" stroke-opacity="0.8"/><line x1="32.33" y1="332.5" x2="30.46" y2="335" stroke="#E4E4E4" stroke-width="0.5" stroke-opacity="0.6"/><line x1="37.53" y1="332.5" x2="30.46" y2="335" stroke="#E4E4E4" stroke-width="0.6" stroke-opacity="0.8"/><line x1="37.53" y1="332.5" x2="41.49" y2="335" stroke="#E4E4E4" stroke-width="0.5" stroke-opacity="0.6"/><line x1="45.32" y1="332.5" x2="41.49" y2="335" stroke="#E4E4E4" stroke-width="0.6" stroke-opacity="0.8"/><line x1="45.32" y1="332.5" x2="54.5" y2="335" stroke="#E4E4E4" stroke-width="0.5" stroke-opacity="0.6"/><line x1="54.5" y1="332.5" x2="54.5" y2="335" stroke="#E4E4E4" stroke-width="0.6" stroke-opacity="0.8"/><line x1="54.5" y1="332.5" x2="67.51" y2="335" stroke="#E4E4E4" stroke-width="0.5" stroke-opacity="0.6"/><line x1="63.68" y1="332.5" x2="67.51" y2="335" stroke="#E4E4E4" stroke-width="0.6" stroke-opacity="0.8"/><line x1="63.68" y1="332.5" x2="78.54" y2="335" stroke="#E4E4E4" stroke-width="0.5" stroke-opacity="0.6"/><line x1="71.47" y1="332.5" x2="78.54" y2="335" stroke="#E4E4E4" stroke-width="0.6" stroke-opacity="0.8"/><line x1="71.47" y1="332.5" x2="85.91" y2="335" stroke="#E4E4E4" stroke-width="0.5" stroke-opacity="0.6"/><line x1="76.67" y1="332.5" x2="85.91" y2="335" stroke="#E4E4E4" stroke-width="0.6" stroke-opacity="0.8"/><line x1="76.67" y1="332.5" x2="88.5" y2="335" stroke="#E4E4E4" stroke-width="0.5" stroke-opacity="0.6"/><line x1="88.5" y1="335" x2="97" y2="337.2" stroke="#E4E4E4" stroke-width="0.6" stroke-opacity="0.8"/><line x1="88.5" y1="335" x2="93.76" y2="337.2" stroke="#E4E4E4" stroke-width="0.5" stroke-opacity="0.6"/><line x1="85.91" y1="335" x2="93.76" y2="337.2" stroke="#E4E4E4" stroke-width="0.6" stroke-opacity="0.8"/><line x1="85.91" y1="335" x2="84.55" y2="337.2" stroke="#E4E4E4" stroke-width="0.5" stroke-opacity="0.6"/><line x1="78.54" y1="335" x2="84.55" y2="337.2" stroke="#E4E4E4" stroke-width="0.6" stroke-opacity="0.8"/><line x1="78.54" y1="335" x2="70.76" y2="337.2" stroke="#E4E4E4" stroke-width="0.5" stroke-opacity="0.6"/><line x1="67.51" y1="335" x2="70.76" y2="337.2" stroke="#E4E4E4" stroke-width="0.6" stroke-opacity="0.8"/><line x1="67.51" y1="335" x2="54.5" y2="337.2" stroke="#E4E4E4" stroke-width="0.5" stroke-opacity="0.6"/><line x1="54.5" y1="335" x2="54.5" y2="337.2" stroke="#E4E4E4" stroke-width="0.6" stroke-opacity="0.8"/><line x1="54.5" y1="335" x2="38.24" y2="337.2" stroke="#E4E4E4" stroke-width="0.5" stroke-opacity="0.6"/><line x1="41.49" y1="335" x2="38.24" y2="337.2" stroke="#E4E4E4" stroke-width="0.6" stroke-opacity="0.8"/><line x1="41.49" y1="335" x2="24.45" y2="337.2" stroke="#E4E4E4" stroke-width="0.5" stroke-opacity="0.6"/><line x1="30.46" y1="335" x2="24.45" y2="337.2" stroke="#E4E4E4" stroke-width="0.6" stroke-opacity="0.8"/><line x1="30.46" y1="335" x2="15.24" y2="337.2" stroke="#E4E4E4" stroke-width="0.5" stroke-opacity="0.6"/><line x1="23.09" y1="335" x2="15.24" y2="337.2" stroke="#E4E4E4" stroke-width="0.6" stroke-opacity="0.8"/><line x1="23.09" y1="335" x2="12" y2="337.2" stroke="#E4E4E4" stroke-width="0.5" stroke-opacity="0.6"/><line x1="20.5" y1="335" x2="12" y2="337.2" stroke="#E4E4E4" stroke-width="0.6" stroke-opacity="0.8"/><line x1="20.5" y1="335" x2="15.24" y2="337.2" stroke="#E4E4E4" stroke-width="0.5" stroke-opacity="0.6"/><line x1="23.09" y1="335" x2="15.24" y2="337.2" stroke="#E4E4E4" stroke-width="0.6" stroke-opacity="0.8"/><line x1="23.09" y1="335" x2="24.45" y2="337.2" stroke="#E4E4E4" stroke-width="0.5" stroke-opacity="0.6"/><line x1="30.46" y1="335" x2="24.45" y2="337.2" stroke="#E4E4E4" stroke-width="0.6" stroke-opacity="0.8"/><line x1="30.46" y1="335" x2="38.24" y2="337.2" stroke="#E4E4E4" stroke-width="0.5" stroke-opacity="0.6"/><line x1="41.49" y1="335" x2="38.24" y2="337.2" stroke="#E4E4E4" stroke-width="0.6" stroke-opacity="0.8"/><line x1="41.49" y1="335" x2="54.5" y2="337.2" stroke="#E4E4E4" stroke-width="0.5" stroke-opacity="0.6"/><line x1="54.5" y1="335" x2="54.5" y2="337.2" stroke="#E4E4E4" stroke-width="0.6" stroke-opacity="0.8"/><line x1="54.5" y1="335" x2="70.76" y2="337.2" stroke="#E4E4E4" stroke-width="0.5" stroke-opacity="0.6"/><line x1="67.51" y1="335" x2="70.76" y2="337.2" stroke="#E4E4E4" stroke-width="0.6" stroke-opacity="0.8"/><line x1="67.51" y1="335" x2="84.55" y2="337.2" stroke="#E4E4E4" stroke-width="0.5" stroke-opacity="0.6"/><line x1="78.54" y1="335" x2="84.55" y2="337.2" stroke="#E4E4E4" stroke-width="0.6" stroke-opacity="0.8"/><line x1="78.54" y1="335" x2="93.76" y2="337.2" stroke="#E4E4E4" stroke-width="0.5" stroke-opacity="0.6"/><line x1="85.91" y1="335" x2="93.76" y2="337.2" stroke="#E4E4E4" stroke-width="0.6" stroke-opacity="0.8"/><line x1="85.91" y1="335" x2="97" y2="337.2" stroke="#E4E4E4" stroke-width="0.5" stroke-opacity="0.6"/><line x1="30.5" y1="332.5" x2="78.5" y2="332.5" stroke="#E4E4E4" stroke-width="0.9"/><rect x="77.4" y="331.4" width="2.2" height="2.2" fill="#FFFFFF"/><rect x="75.57" y="331.4" width="2.2" height="2.2" fill="#FFFFFF"/><rect x="70.37" y="331.4" width="2.2" height="2.2" fill="#FFFFFF"/><rect x="62.58" y="331.4" width="2.2" height="2.2" fill="#FFFFFF"/><rect x="53.4" y="331.4" width="2.2" height="2.2" fill="#FFFFFF"/><rect x="44.22" y="331.4" width="2.2" height="2.2" fill="#FFFFFF"/><rect x="36.43" y="331.4" width="2.2" height="2.2" fill="#FFFFFF"/><rect x="31.23" y="331.4" width="2.2" height="2.2" fill="#FFFFFF"/><rect x="29.4" y="331.4" width="2.2" height="2.2" fill="#FFFFFF"/><rect x="31.23" y="331.4" width="2.2" height="2.2" fill="#FFFFFF"/><rect x="36.43" y="331.4" width="2.2" height="2.2" fill="#FFFFFF"/><rect x="44.22" y="331.4" width="2.2" height="2.2" fill="#FFFFFF"/><rect x="53.4" y="331.4" width="2.2" height="2.2" fill="#FFFFFF"/><rect x="62.58" y="331.4" width="2.2" height="2.2" fill="#FFFFFF"/><rect x="70.37" y="331.4" width="2.2" height="2.2" fill="#FFFFFF"/><rect x="75.57" y="331.4" width="2.2" height="2.2" fill="#FFFFFF"/><line x1="20.5" y1="335" x2="88.5" y2="335" stroke="#E4E4E4" stroke-width="0.9"/><rect x="87.4" y="333.9" width="2.2" height="2.2" fill="#FFFFFF"/><rect x="84.81" y="333.9" width="2.2" height="2.2" fill="#FFFFFF"/><rect x="77.44" y="333.9" width="2.2" height="2.2" fill="#FFFFFF"/><rect x="66.41" y="333.9" width="2.2" height="2.2" fill="#FFFFFF"/><rect x="53.4" y="333.9" width="2.2" height="2.2" fill="#FFFFFF"/><rect x="40.39" y="333.9" width="2.2" height="2.2" fill="#FFFFFF"/><rect x="29.36" y="333.9" width="2.2" height="2.2" fill="#FFFFFF"/><rect x="21.99" y="333.9" width="2.2" height="2.2" fill="#FFFFFF"/><rect x="19.4" y="333.9" width="2.2" height="2.2" fill="#FFFFFF"/><rect x="21.99" y="333.9" width="2.2" height="2.2" fill="#FFFFFF"/><rect x="29.36" y="333.9" width="2.2" height="2.2" fill="#FFFFFF"/><rect x="40.39" y="333.9" width="2.2" height="2.2" fill="#FFFFFF"/><rect x="53.4" y="333.9" width="2.2" height="2.2" fill="#FFFFFF"/><rect x="66.41" y="333.9" width="2.2" height="2.2" fill="#FFFFFF"/><rect x="77.44" y="333.9" width="2.2" height="2.2" fill="#FFFFFF"/><rect x="84.81" y="333.9" width="2.2" height="2.2" fill="#FFFFFF"/><line x1="12" y1="337.2" x2="97" y2="337.2" stroke="#E4E4E4" stroke-width="0.9"/><rect x="95.9" y="336.1" width="2.2" height="2.2" fill="#FFFFFF"/><rect x="92.66" y="336.1" width="2.2" height="2.2" fill="#FFFFFF"/><rect x="83.45" y="336.1" width="2.2" height="2.2" fill="#FFFFFF"/><rect x="69.66" y="336.1" width="2.2" height="2.2" fill="#FFFFFF"/><rect x="53.4" y="336.1" width="2.2" height="2.2" fill="#FFFFFF"/><rect x="37.14" y="336.1" width="2.2" height="2.2" fill="#FFFFFF"/><rect x="23.35" y="336.1" width="2.2" height="2.2" fill="#FFFFFF"/><rect x="14.14" y="336.1" width="2.2" height="2.2" fill="#FFFFFF"/><rect x="10.9" y="336.1" width="2.2" height="2.2" fill="#FFFFFF"/><rect x="14.14" y="336.1" width="2.2" height="2.2" fill="#FFFFFF"/><rect x="23.35" y="336.1" width="2.2" height="2.2" fill="#FFFFFF"/><rect x="37.14" y="336.1" width="2.2" height="2.2" fill="#FFFFFF"/><rect x="53.4" y="336.1" width="2.2" height="2.2" fill="#FFFFFF"/><rect x="69.66" y="336.1" width="2.2" height="2.2" fill="#FFFFFF"/><rect x="83.45" y="336.1" width="2.2" height="2.2" fill="#FFFFFF"/><rect x="92.66" y="336.1" width="2.2" height="2.2" fill="#FFFFFF"/><rect x="114.4" y="148.9" width="2.2" height="2.2" fill="#FFFFFF"/><rect x="109.76" y="148.9" width="2.2" height="2.2" fill="#FFFFFF"/><rect x="96.53" y="148.9" width="2.2" height="2.2" fill="#FFFFFF"/><rect x="76.74" y="148.9" width="2.2" height="2.2" fill="#FFFFFF"/><rect x="53.4" y="148.9" width="2.2" height="2.2" fill="#FFFFFF"/><rect x="30.06" y="148.9" width="2.2" height="2.2" fill="#FFFFFF"/><rect x="10.27" y="148.9" width="2.2" height="2.2" fill="#FFFFFF"/><rect x="-2.96" y="148.9" width="2.2" height="2.2" fill="#FFFFFF"/><rect x="-7.6" y="148.9" width="2.2" height="2.2" fill="#FFFFFF"/><rect x="-2.96" y="148.9" width="2.2" height="2.2" fill="#FFFFFF"/><rect x="10.27" y="148.9" width="2.2" height="2.2" fill="#FFFFFF"/><rect x="30.06" y="148.9" width="2.2" height="2.2" fill="#FFFFFF"/><rect x="53.4" y="148.9" width="2.2" height="2.2" fill="#FFFFFF"/><rect x="76.74" y="148.9" width="2.2" height="2.2" fill="#FFFFFF"/><rect x="96.53" y="148.9" width="2.2" height="2.2" fill="#FFFFFF"/><rect x="109.76" y="148.9" width="2.2" height="2.2" fill="#FFFFFF"/><rect x="0" y="338" width="54" height="1" fill="#606060"/><rect x="54" y="338" width="198" height="1" fill="#ECEC50"/></svg>
<svg class="a" style="left:257px;top:14px" width="398" height="325" viewBox="257 14 398 325"><rect x="456" y="14" width="2" height="136" fill="#72BAB5"/><line x1="439.5" y1="76.3" x2="432.6" y2="74.45" stroke="#E4E4E4" stroke-width="1.1"/><line x1="432.6" y1="74.45" x2="427.55" y2="69.4" stroke="#E4E4E4" stroke-width="1.1"/><line x1="427.55" y1="69.4" x2="425.7" y2="62.5" stroke="#E4E4E4" stroke-width="1.1"/><line x1="425.7" y1="62.5" x2="427.55" y2="55.6" stroke="#E4E4E4" stroke-width="1.1"/><line x1="427.55" y1="55.6" x2="432.6" y2="50.55" stroke="#E4E4E4" stroke-width="1.1"/><line x1="432.6" y1="50.55" x2="439.5" y2="48.7" stroke="#E4E4E4" stroke-width="1.1"/><line x1="439.5" y1="48.7" x2="446.4" y2="50.55" stroke="#E4E4E4" stroke-width="1.1"/><line x1="446.4" y1="50.55" x2="451.45" y2="55.6" stroke="#E4E4E4" stroke-width="1.1"/><line x1="451.45" y1="55.6" x2="453.3" y2="62.5" stroke="#E4E4E4" stroke-width="1.1"/><line x1="453.3" y1="62.5" x2="451.45" y2="69.4" stroke="#E4E4E4" stroke-width="1.1"/><line x1="451.45" y1="69.4" x2="446.4" y2="74.45" stroke="#E4E4E4" stroke-width="1.1"/><line x1="446.4" y1="74.45" x2="439.5" y2="76.3" stroke="#E4E4E4" stroke-width="1.1"/><line x1="433.1" y1="56.1" x2="439.5" y2="56.1" stroke="#E4E4E4" stroke-width="0.8"/><line x1="439.5" y1="62.5" x2="433.1" y2="56.1" stroke="#E4E4E4" stroke-width="0.8"/><line x1="439.5" y1="56.1" x2="445.9" y2="56.1" stroke="#E4E4E4" stroke-width="0.8"/><line x1="439.5" y1="62.5" x2="439.5" y2="56.1" stroke="#E4E4E4" stroke-width="0.8"/><line x1="445.9" y1="56.1" x2="445.9" y2="62.5" stroke="#E4E4E4" stroke-width="0.8"/><line x1="439.5" y1="62.5" x2="445.9" y2="56.1" stroke="#E4E4E4" stroke-width="0.8"/><line x1="445.9" y1="62.5" x2="445.9" y2="68.9" stroke="#E4E4E4" stroke-width="0.8"/><line x1="439.5" y1="62.5" x2="445.9" y2="62.5" stroke="#E4E4E4" stroke-width="0.8"/><line x1="445.9" y1="68.9" x2="439.5" y2="68.9" stroke="#E4E4E4" stroke-width="0.8"/><line x1="439.5" y1="62.5" x2="445.9" y2="68.9" stroke="#E4E4E4" stroke-width="0.8"/><line x1="439.5" y1="68.9" x2="433.1" y2="68.9" stroke="#E4E4E4" stroke-width="0.8"/><line x1="439.5" y1="62.5" x2="439.5" y2="68.9" stroke="#E4E4E4" stroke-width="0.8"/><line x1="433.1" y1="68.9" x2="433.1" y2="62.5" stroke="#E4E4E4" stroke-width="0.8"/><line x1="439.5" y1="62.5" x2="433.1" y2="68.9" stroke="#E4E4E4" stroke-width="0.8"/><line x1="433.1" y1="62.5" x2="433.1" y2="56.1" stroke="#E4E4E4" stroke-width="0.8"/><line x1="439.5" y1="62.5" x2="433.1" y2="62.5" stroke="#E4E4E4" stroke-width="0.8"/><line x1="433.1" y1="56.1" x2="430.87" y2="53.87" stroke="#E4E4E4" stroke-width="0.6"/><line x1="433.1" y1="56.1" x2="436.34" y2="50.72" stroke="#E4E4E4" stroke-width="0.6"/><line x1="433.1" y1="56.1" x2="427.72" y2="59.34" stroke="#E4E4E4" stroke-width="0.6"/><line x1="439.5" y1="56.1" x2="436.34" y2="50.72" stroke="#E4E4E4" stroke-width="0.6"/><line x1="439.5" y1="56.1" x2="442.66" y2="50.72" stroke="#E4E4E4" stroke-width="0.6"/><line x1="439.5" y1="56.1" x2="430.87" y2="53.87" stroke="#E4E4E4" stroke-width="0.6"/><line x1="445.9" y1="56.1" x2="448.13" y2="53.87" stroke="#E4E4E4" stroke-width="0.6"/><line x1="445.9" y1="56.1" x2="442.66" y2="50.72" stroke="#E4E4E4" stroke-width="0.6"/><line x1="445.9" y1="56.1" x2="451.28" y2="59.34" stroke="#E4E4E4" stroke-width="0.6"/><line x1="445.9" y1="62.5" x2="451.28" y2="65.66" stroke="#E4E4E4" stroke-width="0.6"/><line x1="445.9" y1="62.5" x2="451.28" y2="59.34" stroke="#E4E4E4" stroke-width="0.6"/><line x1="445.9" y1="62.5" x2="448.13" y2="71.13" stroke="#E4E4E4" stroke-width="0.6"/><line x1="445.9" y1="68.9" x2="448.13" y2="71.13" stroke="#E4E4E4" stroke-width="0.6"/><line x1="445.9" y1="68.9" x2="442.66" y2="74.28" stroke="#E4E4E4" stroke-width="0.6"/><line x1="445.9" y1="68.9" x2="451.28" y2="65.66" stroke="#E4E4E4" stroke-width="0.6"/><line x1="439.5" y1="68.9" x2="436.34" y2="74.28" stroke="#E4E4E4" stroke-width="0.6"/><line x1="439.5" y1="68.9" x2="442.66" y2="74.28" stroke="#E4E4E4" stroke-width="0.6"/><line x1="439.5" y1="68.9" x2="430.87" y2="71.13" stroke="#E4E4E4" stroke-width="0.6"/><line x1="433.1" y1="68.9" x2="430.87" y2="71.13" stroke="#E4E4E4" stroke-width="0.6"/><line x1="433.1" y1="68.9" x2="436.34" y2="74.28" stroke="#E4E4E4" stroke-width="0.6"/><line x1="433.1" y1="68.9" x2="427.72" y2="65.66" stroke="#E4E4E4" stroke-width="0.6"/><line x1="433.1" y1="62.5" x2="427.72" y2="65.66" stroke="#E4E4E4" stroke-width="0.6"/><line x1="433.1" y1="62.5" x2="427.72" y2="59.34" stroke="#E4E4E4" stroke-width="0.6"/><line x1="433.1" y1="62.5" x2="430.87" y2="71.13" stroke="#E4E4E4" stroke-width="0.6"/><rect x="438.1" y="74.9" width="2.8" height="2.8" fill="#FFFFFF"/><rect x="431.2" y="73.05" width="2.8" height="2.8" fill="#FFFFFF"/><rect x="426.15" y="68" width="2.8" height="2.8" fill="#FFFFFF"/><rect x="424.3" y="61.1" width="2.8" height="2.8" fill="#FFFFFF"/><rect x="426.15" y="54.2" width="2.8" height="2.8" fill="#FFFFFF"/><rect x="431.2" y="49.15" width="2.8" height="2.8" fill="#FFFFFF"/><rect x="438.1" y="47.3" width="2.8" height="2.8" fill="#FFFFFF"/><rect x="445" y="49.15" width="2.8" height="2.8" fill="#FFFFFF"/><rect x="450.05" y="54.2" width="2.8" height="2.8" fill="#FFFFFF"/><rect x="451.9" y="61.1" width="2.8" height="2.8" fill="#FFFFFF"/><rect x="450.05" y="68" width="2.8" height="2.8" fill="#FFFFFF"/><rect x="445" y="73.05" width="2.8" height="2.8" fill="#FFFFFF"/><rect x="435.54" y="73.48" width="1.6" height="1.6" fill="#FFFFFF"/><rect x="430.07" y="70.33" width="1.6" height="1.6" fill="#FFFFFF"/><rect x="426.92" y="64.86" width="1.6" height="1.6" fill="#FFFFFF"/><rect x="426.92" y="58.54" width="1.6" height="1.6" fill="#FFFFFF"/><rect x="430.07" y="53.07" width="1.6" height="1.6" fill="#FFFFFF"/><rect x="435.54" y="49.92" width="1.6" height="1.6" fill="#FFFFFF"/><rect x="441.86" y="49.92" width="1.6" height="1.6" fill="#FFFFFF"/><rect x="447.33" y="53.07" width="1.6" height="1.6" fill="#FFFFFF"/><rect x="450.48" y="58.54" width="1.6" height="1.6" fill="#FFFFFF"/><rect x="450.48" y="64.86" width="1.6" height="1.6" fill="#FFFFFF"/><rect x="447.33" y="70.33" width="1.6" height="1.6" fill="#FFFFFF"/><rect x="441.86" y="73.48" width="1.6" height="1.6" fill="#FFFFFF"/><rect x="431.9" y="54.9" width="2.4" height="2.4" fill="#FFFFFF"/><rect x="438.3" y="54.9" width="2.4" height="2.4" fill="#FFFFFF"/><rect x="444.7" y="54.9" width="2.4" height="2.4" fill="#FFFFFF"/><rect x="444.7" y="61.3" width="2.4" height="2.4" fill="#FFFFFF"/><rect x="444.7" y="67.7" width="2.4" height="2.4" fill="#FFFFFF"/><rect x="438.3" y="67.7" width="2.4" height="2.4" fill="#FFFFFF"/><rect x="431.9" y="67.7" width="2.4" height="2.4" fill="#FFFFFF"/><rect x="431.9" y="61.3" width="2.4" height="2.4" fill="#FFFFFF"/><rect x="438.3" y="61.3" width="2.4" height="2.4" fill="#FFFFFF"/><line x1="395.4" y1="150" x2="517.4" y2="150" stroke="#E4E4E4" stroke-width="1"/><line x1="517.4" y1="150" x2="464.9" y2="214" stroke="#E4E4E4" stroke-width="0.7"/><line x1="517.4" y1="150" x2="464.25" y2="214" stroke="#E4E4E4" stroke-width="0.5" stroke-opacity="0.7"/><line x1="512.76" y1="150" x2="464.25" y2="214" stroke="#E4E4E4" stroke-width="0.7"/><line x1="512.76" y1="150" x2="462.41" y2="214" stroke="#E4E4E4" stroke-width="0.5" stroke-opacity="0.7"/><line x1="499.53" y1="150" x2="462.41" y2="214" stroke="#E4E4E4" stroke-width="0.7"/><line x1="499.53" y1="150" x2="459.65" y2="214" stroke="#E4E4E4" stroke-width="0.5" stroke-opacity="0.7"/><line x1="479.74" y1="150" x2="459.65" y2="214" stroke="#E4E4E4" stroke-width="0.7"/><line x1="479.74" y1="150" x2="456.4" y2="214" stroke="#E4E4E4" stroke-width="0.5" stroke-opacity="0.7"/><line x1="456.4" y1="150" x2="456.4" y2="214" stroke="#E4E4E4" stroke-width="0.7"/><line x1="456.4" y1="150" x2="453.15" y2="214" stroke="#E4E4E4" stroke-width="0.5" stroke-opacity="0.7"/><line x1="433.06" y1="150" x2="453.15" y2="214" stroke="#E4E4E4" stroke-width="0.7"/><line x1="433.06" y1="150" x2="450.39" y2="214" stroke="#E4E4E4" stroke-width="0.5" stroke-opacity="0.7"/><line x1="413.27" y1="150" x2="450.39" y2="214" stroke="#E4E4E4" stroke-width="0.7"/><line x1="413.27" y1="150" x2="448.55" y2="214" stroke="#E4E4E4" stroke-width="0.5" stroke-opacity="0.7"/><line x1="400.04" y1="150" x2="448.55" y2="214" stroke="#E4E4E4" stroke-width="0.7"/><line x1="400.04" y1="150" x2="447.9" y2="214" stroke="#E4E4E4" stroke-width="0.5" stroke-opacity="0.7"/><line x1="395.4" y1="150" x2="447.9" y2="214" stroke="#E4E4E4" stroke-width="0.7"/><line x1="395.4" y1="150" x2="448.55" y2="214" stroke="#E4E4E4" stroke-width="0.5" stroke-opacity="0.7"/><line x1="400.04" y1="150" x2="448.55" y2="214" stroke="#E4E4E4" stroke-width="0.7"/><line x1="400.04" y1="150" x2="450.39" y2="214" stroke="#E4E4E4" stroke-width="0.5" stroke-opacity="0.7"/><line x1="413.27" y1="150" x2="450.39" y2="214" stroke="#E4E4E4" stroke-width="0.7"/><line x1="413.27" y1="150" x2="453.15" y2="214" stroke="#E4E4E4" stroke-width="0.5" stroke-opacity="0.7"/><line x1="433.06" y1="150" x2="453.15" y2="214" stroke="#E4E4E4" stroke-width="0.7"/><line x1="433.06" y1="150" x2="456.4" y2="214" stroke="#E4E4E4" stroke-width="0.5" stroke-opacity="0.7"/><line x1="456.4" y1="150" x2="456.4" y2="214" stroke="#E4E4E4" stroke-width="0.7"/><line x1="456.4" y1="150" x2="459.65" y2="214" stroke="#E4E4E4" stroke-width="0.5" stroke-opacity="0.7"/><line x1="479.74" y1="150" x2="459.65" y2="214" stroke="#E4E4E4" stroke-width="0.7"/><line x1="479.74" y1="150" x2="462.41" y2="214" stroke="#E4E4E4" stroke-width="0.5" stroke-opacity="0.7"/><line x1="499.53" y1="150" x2="462.41" y2="214" stroke="#E4E4E4" stroke-width="0.7"/><line x1="499.53" y1="150" x2="464.25" y2="214" stroke="#E4E4E4" stroke-width="0.5" stroke-opacity="0.7"/><line x1="512.76" y1="150" x2="464.25" y2="214" stroke="#E4E4E4" stroke-width="0.7"/><line x1="512.76" y1="150" x2="464.9" y2="214" stroke="#E4E4E4" stroke-width="0.5" stroke-opacity="0.7"/><line x1="456.4" y1="162" x2="459" y2="214" stroke="#E4E4E4" stroke-width="0.5" stroke-opacity="0.5"/><line x1="456.4" y1="162" x2="458.8" y2="214" stroke="#E4E4E4" stroke-width="0.5" stroke-opacity="0.5"/><line x1="456.4" y1="162" x2="458.24" y2="214" stroke="#E4E4E4" stroke-width="0.5" stroke-opacity="0.5"/><line x1="456.4" y1="162" x2="457.39" y2="214" stroke="#E4E4E4" stroke-width="0.5" stroke-opacity="0.5"/><line x1="456.4" y1="162" x2="456.4" y2="214" stroke="#E4E4E4" stroke-width="0.5" stroke-opacity="0.5"/><line x1="456.4" y1="162" x2="455.41" y2="214" stroke="#E4E4E4" stroke-width="0.5" stroke-opacity="0.5"/><line x1="456.4" y1="162" x2="454.56" y2="214" stroke="#E4E4E4" stroke-width="0.5" stroke-opacity="0.5"/><line x1="456.4" y1="162" x2="454" y2="214" stroke="#E4E4E4" stroke-width="0.5" stroke-opacity="0.5"/><line x1="456.4" y1="162" x2="453.8" y2="214" stroke="#E4E4E4" stroke-width="0.5" stroke-opacity="0.5"/><line x1="456.4" y1="162" x2="454" y2="214" stroke="#E4E4E4" stroke-width="0.5" stroke-opacity="0.5"/><line x1="456.4" y1="162" x2="454.56" y2="214" stroke="#E4E4E4" stroke-width="0.5" stroke-opacity="0.5"/><line x1="456.4" y1="162" x2="455.41" y2="214" stroke="#E4E4E4" stroke-width="0.5" stroke-opacity="0.5"/><line x1="456.4" y1="162" x2="456.4" y2="214" stroke="#E4E4E4" stroke-width="0.5" stroke-opacity="0.5"/><line x1="456.4" y1="162" x2="457.39" y2="214" stroke="#E4E4E4" stroke-width="0.5" stroke-opacity="0.5"/><line x1="456.4" y1="162" x2="458.24" y2="214" stroke="#E4E4E4" stroke-width="0.5" stroke-opacity="0.5"/><line x1="456.4" y1="162" x2="458.8" y2="214" stroke="#E4E4E4" stroke-width="0.5" stroke-opacity="0.5"/><line x1="456.4" y1="150" x2="456.4" y2="214" stroke="#E4E4E4" stroke-width="0.9"/><line x1="464.9" y1="214" x2="462.4" y2="239" stroke="#E4E4E4" stroke-width="0.8" stroke-opacity="1"/><line x1="464.9" y1="214" x2="461.94" y2="239" stroke="#E4E4E4" stroke-width="0.5" stroke-opacity="0.45"/><line x1="464.25" y1="214" x2="462.4" y2="239" stroke="#E4E4E4" stroke-width="0.5" stroke-opacity="0.3"/><line x1="464.25" y1="214" x2="461.94" y2="239" stroke="#E4E4E4" stroke-width="0.6" stroke-opacity="0.7"/><line x1="464.25" y1="214" x2="460.64" y2="239" stroke="#E4E4E4" stroke-width="0.5" stroke-opacity="0.45"/><line x1="462.41" y1="214" x2="461.94" y2="239" stroke="#E4E4E4" stroke-width="0.5" stroke-opacity="0.3"/><line x1="462.41" y1="214" x2="460.64" y2="239" stroke="#E4E4E4" stroke-width="0.6" stroke-opacity="0.7"/><line x1="462.41" y1="214" x2="458.7" y2="239" stroke="#E4E4E4" stroke-width="0.5" stroke-opacity="0.45"/><line x1="459.65" y1="214" x2="460.64" y2="239" stroke="#E4E4E4" stroke-width="0.5" stroke-opacity="0.3"/><line x1="459.65" y1="214" x2="458.7" y2="239" stroke="#E4E4E4" stroke-width="0.6" stroke-opacity="0.7"/><line x1="459.65" y1="214" x2="456.4" y2="239" stroke="#E4E4E4" stroke-width="0.5" stroke-opacity="0.45"/><line x1="456.4" y1="214" x2="458.7" y2="239" stroke="#E4E4E4" stroke-width="0.5" stroke-opacity="0.3"/><line x1="456.4" y1="214" x2="456.4" y2="239" stroke="#E4E4E4" stroke-width="0.6" stroke-opacity="0.7"/><line x1="456.4" y1="214" x2="454.1" y2="239" stroke="#E4E4E4" stroke-width="0.5" stroke-opacity="0.45"/><line x1="453.15" y1="214" x2="456.4" y2="239" stroke="#E4E4E4" stroke-width="0.5" stroke-opacity="0.3"/><line x1="453.15" y1="214" x2="454.1" y2="239" stroke="#E4E4E4" stroke-width="0.6" stroke-opacity="0.7"/><line x1="453.15" y1="214" x2="452.16" y2="239" stroke="#E4E4E4" stroke-width="0.5" stroke-opacity="0.45"/><line x1="450.39" y1="214" x2="454.1" y2="239" stroke="#E4E4E4" stroke-width="0.5" stroke-opacity="0.3"/><line x1="450.39" y1="214" x2="452.16" y2="239" stroke="#E4E4E4" stroke-width="0.6" stroke-opacity="0.7"/><line x1="450.39" y1="214" x2="450.86" y2="239" stroke="#E4E4E4" stroke-width="0.5" stroke-opacity="0.45"/><line x1="448.55" y1="214" x2="452.16" y2="239" stroke="#E4E4E4" stroke-width="0.5" stroke-opacity="0.3"/><line x1="448.55" y1="214" x2="450.86" y2="239" stroke="#E4E4E4" stroke-width="0.6" stroke-opacity="0.7"/><line x1="448.55" y1="214" x2="450.4" y2="239" stroke="#E4E4E4" stroke-width="0.5" stroke-opacity="0.45"/><line x1="447.9" y1="214" x2="450.86" y2="239" stroke="#E4E4E4" stroke-width="0.5" stroke-opacity="0.3"/><line x1="447.9" y1="214" x2="450.4" y2="239" stroke="#E4E4E4" stroke-width="0.8" stroke-opacity="1"/><line x1="462.4" y1="239" x2="461.9" y2="261" stroke="#E4E4E4" stroke-width="0.8" stroke-opacity="1"/><line x1="462.4" y1="239" x2="461.48" y2="261" stroke="#E4E4E4" stroke-width="0.5" stroke-opacity="0.45"/><line x1="461.94" y1="239" x2="461.9" y2="261" stroke="#E4E4E4" stroke-width="0.5" stroke-opacity="0.3"/><line x1="461.94" y1="239" x2="461.48" y2="261" stroke="#E4E4E4" stroke-width="0.6" stroke-opacity="0.7"/><line x1="461.94" y1="239" x2="460.29" y2="261" stroke="#E4E4E4" stroke-width="0.5" stroke-opacity="0.45"/><line x1="460.64" y1="239" x2="461.48" y2="261" stroke="#E4E4E4" stroke-width="0.5" stroke-opacity="0.3"/><line x1="460.64" y1="239" x2="460.29" y2="261" stroke="#E4E4E4" stroke-width="0.6" stroke-opacity="0.7"/><line x1="460.64" y1="239" x2="458.5" y2="261" stroke="#E4E4E4" stroke-width="0.5" stroke-opacity="0.45"/><line x1="458.7" y1="239" x2="460.29" y2="261" stroke="#E4E4E4" stroke-width="0.5" stroke-opacity="0.3"/><line x1="458.7" y1="239" x2="458.5" y2="261" stroke="#E4E4E4" stroke-width="0.6" stroke-opacity="0.7"/><line x1="458.7" y1="239" x2="456.4" y2="261" stroke="#E4E4E4" stroke-width="0.5" stroke-opacity="0.45"/><line x1="456.4" y1="239" x2="458.5" y2="261" stroke="#E4E4E4" stroke-width="0.5" stroke-opacity="0.3"/><line x1="456.4" y1="239" x2="456.4" y2="261" stroke="#E4E4E4" stroke-width="0.6" stroke-opacity="0.7"/><line x1="456.4" y1="239" x2="454.3" y2="261" stroke="#E4E4E4" stroke-width="0.5" stroke-opacity="0.45"/><line x1="454.1" y1="239" x2="456.4" y2="261" stroke="#E4E4E4" stroke-width="0.5" stroke-opacity="0.3"/><line x1="454.1" y1="239" x2="454.3" y2="261" stroke="#E4E4E4" stroke-width="0.6" stroke-opacity="0.7"/><line x1="454.1" y1="239" x2="452.51" y2="261" stroke="#E4E4E4" stroke-width="0.5" stroke-opacity="0.45"/><line x1="452.16" y1="239" x2="454.3" y2="261" stroke="#E4E4E4" stroke-width="0.5" stroke-opacity="0.3"/><line x1="452.16" y1="239" x2="452.51" y2="261" stroke="#E4E4E4" stroke-width="0.6" stroke-opacity="0.7"/><line x1="452.16" y1="239" x2="451.32" y2="261" stroke="#E4E4E4" stroke-width="0.5" stroke-opacity="0.45"/><line x1="450.86" y1="239" x2="452.51" y2="261" stroke="#E4E4E4" stroke-width="0.5" stroke-opacity="0.3"/><line x1="450.86" y1="239" x2="451.32" y2="261" stroke="#E4E4E4" stroke-width="0.6" stroke-opacity="0.7"/><line x1="450.86" y1="239" x2="450.9" y2="261" stroke="#E4E4E4" stroke-width="0.5" stroke-opacity="0.45"/><line x1="450.4" y1="239" x2="451.32" y2="261" stroke="#E4E4E4" stroke-width="0.5" stroke-opacity="0.3"/><line x1="450.4" y1="239" x2="450.9" y2="261" stroke="#E4E4E4" stroke-width="0.8" stroke-opacity="1"/><line x1="461.9" y1="261" x2="461.9" y2="283" stroke="#E4E4E4" stroke-width="0.8" stroke-opacity="1"/><line x1="461.9" y1="261" x2="461.48" y2="283" stroke="#E4E4E4" stroke-width="0.5" stroke-opacity="0.45"/><line x1="461.48" y1="261" x2="461.9" y2="283" stroke="#E4E4E4" stroke-width="0.5" stroke-opacity="0.3"/><line x1="461.48" y1="261" x2="461.48" y2="283" stroke="#E4E4E4" stroke-width="0.6" stroke-opacity="0.7"/><line x1="461.48" y1="261" x2="460.29" y2="283" stroke="#E4E4E4" stroke-width="0.5" stroke-opacity="0.45"/><line x1="460.29" y1="261" x2="461.48" y2="283" stroke="#E4E4E4" stroke-width="0.5" stroke-opacity="0.3"/><line x1="460.29" y1="261" x2="460.29" y2="283" stroke="#E4E4E4" stroke-width="0.6" stroke-opacity="0.7"/><line x1="460.29" y1="261" x2="458.5" y2="283" stroke="#E4E4E4" stroke-width="0.5" stroke-opacity="0.45"/><line x1="458.5" y1="261" x2="460.29" y2="283" stroke="#E4E4E4" stroke-width="0.5" stroke-opacity="0.3"/><line x1="458.5" y1="261" x2="458.5" y2="283" stroke="#E4E4E4" stroke-width="0.6" stroke-opacity="0.7"/><line x1="458.5" y1="261" x2="456.4" y2="283" stroke="#E4E4E4" stroke-width="0.5" stroke-opacity="0.45"/><line x1="456.4" y1="261" x2="458.5" y2="283" stroke="#E4E4E4" stroke-width="0.5" stroke-opacity="0.3"/><line x1="456.4" y1="261" x2="456.4" y2="283" stroke="#E4E4E4" stroke-width="0.6" stroke-opacity="0.7"/><line x1="456.4" y1="261" x2="454.3" y2="283" stroke="#E4E4E4" stroke-width="0.5" stroke-opacity="0.45"/><line x1="454.3" y1="261" x2="456.4" y2="283" stroke="#E4E4E4" stroke-width="0.5" stroke-opacity="0.3"/><line x1="454.3" y1="261" x2="454.3" y2="283" stroke="#E4E4E4" stroke-width="0.6" stroke-opacity="0.7"/><line x1="454.3" y1="261" x2="452.51" y2="283" stroke="#E4E4E4" stroke-width="0.5" stroke-opacity="0.45"/><line x1="452.51" y1="261" x2="454.3" y2="283" stroke="#E4E4E4" stroke-width="0.5" stroke-opacity="0.3"/><line x1="452.51" y1="261" x2="452.51" y2="283" stroke="#E4E4E4" stroke-width="0.6" stroke-opacity="0.7"/><line x1="452.51" y1="261" x2="451.32" y2="283" stroke="#E4E4E4" stroke-width="0.5" stroke-opacity="0.45"/><line x1="451.32" y1="261" x2="452.51" y2="283" stroke="#E4E4E4" stroke-width="0.5" stroke-opacity="0.3"/><line x1="451.32" y1="261" x2="451.32" y2="283" stroke="#E4E4E4" stroke-width="0.6" stroke-opacity="0.7"/><line x1="451.32" y1="261" x2="450.9" y2="283" stroke="#E4E4E4" stroke-width="0.5" stroke-opacity="0.45"/><line x1="450.9" y1="261" x2="451.32" y2="283" stroke="#E4E4E4" stroke-width="0.5" stroke-opacity="0.3"/><line x1="450.9" y1="261" x2="450.9" y2="283" stroke="#E4E4E4" stroke-width="0.8" stroke-opacity="1"/><line x1="461.9" y1="283" x2="462.6" y2="305" stroke="#E4E4E4" stroke-width="0.8" stroke-opacity="1"/><line x1="461.9" y1="283" x2="462.13" y2="305" stroke="#E4E4E4" stroke-width="0.5" stroke-opacity="0.45"/><line x1="461.48" y1="283" x2="462.6" y2="305" stroke="#E4E4E4" stroke-width="0.5" stroke-opacity="0.3"/><line x1="461.48" y1="283" x2="462.13" y2="305" stroke="#E4E4E4" stroke-width="0.6" stroke-opacity="0.7"/><line x1="461.48" y1="283" x2="460.78" y2="305" stroke="#E4E4E4" stroke-width="0.5" stroke-opacity="0.45"/><line x1="460.29" y1="283" x2="462.13" y2="305" stroke="#E4E4E4" stroke-width="0.5" stroke-opacity="0.3"/><line x1="460.29" y1="283" x2="460.78" y2="305" stroke="#E4E4E4" stroke-width="0.6" stroke-opacity="0.7"/><line x1="460.29" y1="283" x2="458.77" y2="305" stroke="#E4E4E4" stroke-width="0.5" stroke-opacity="0.45"/><line x1="458.5" y1="283" x2="460.78" y2="305" stroke="#E4E4E4" stroke-width="0.5" stroke-opacity="0.3"/><line x1="458.5" y1="283" x2="458.77" y2="305" stroke="#E4E4E4" stroke-width="0.6" stroke-opacity="0.7"/><line x1="458.5" y1="283" x2="456.4" y2="305" stroke="#E4E4E4" stroke-width="0.5" stroke-opacity="0.45"/><line x1="456.4" y1="283" x2="458.77" y2="305" stroke="#E4E4E4" stroke-width="0.5" stroke-opacity="0.3"/><line x1="456.4" y1="283" x2="456.4" y2="305" stroke="#E4E4E4" stroke-width="0.6" stroke-opacity="0.7"/><line x1="456.4" y1="283" x2="454.03" y2="305" stroke="#E4E4E4" stroke-width="0.5" stroke-opacity="0.45"/><line x1="454.3" y1="283" x2="456.4" y2="305" stroke="#E4E4E4" stroke-width="0.5" stroke-opacity="0.3"/><line x1="454.3" y1="283" x2="454.03" y2="305" stroke="#E4E4E4" stroke-width="0.6" stroke-opacity="0.7"/><line x1="454.3" y1="283" x2="452.02" y2="305" stroke="#E4E4E4" stroke-width="0.5" stroke-opacity="0.45"/><line x1="452.51" y1="283" x2="454.03" y2="305" stroke="#E4E4E4" stroke-width="0.5" stroke-opacity="0.3"/><line x1="452.51" y1="283" x2="452.02" y2="305" stroke="#E4E4E4" stroke-width="0.6" stroke-opacity="0.7"/><line x1="452.51" y1="283" x2="450.67" y2="305" stroke="#E4E4E4" stroke-width="0.5" stroke-opacity="0.45"/><line x1="451.32" y1="283" x2="452.02" y2="305" stroke="#E4E4E4" stroke-width="0.5" stroke-opacity="0.3"/><line x1="451.32" y1="283" x2="450.67" y2="305" stroke="#E4E4E4" stroke-width="0.6" stroke-opacity="0.7"/><line x1="451.32" y1="283" x2="450.2" y2="305" stroke="#E4E4E4" stroke-width="0.5" stroke-opacity="0.45"/><line x1="450.9" y1="283" x2="450.67" y2="305" stroke="#E4E4E4" stroke-width="0.5" stroke-opacity="0.3"/><line x1="450.9" y1="283" x2="450.2" y2="305" stroke="#E4E4E4" stroke-width="0.8" stroke-opacity="1"/><line x1="462.6" y1="305" x2="465.2" y2="330" stroke="#E4E4E4" stroke-width="0.8" stroke-opacity="1"/><line x1="462.6" y1="305" x2="464.53" y2="330" stroke="#E4E4E4" stroke-width="0.5" stroke-opacity="0.45"/><line x1="462.13" y1="305" x2="465.2" y2="330" stroke="#E4E4E4" stroke-width="0.5" stroke-opacity="0.3"/><line x1="462.13" y1="305" x2="464.53" y2="330" stroke="#E4E4E4" stroke-width="0.6" stroke-opacity="0.7"/><line x1="462.13" y1="305" x2="462.62" y2="330" stroke="#E4E4E4" stroke-width="0.5" stroke-opacity="0.45"/><line x1="460.78" y1="305" x2="464.53" y2="330" stroke="#E4E4E4" stroke-width="0.5" stroke-opacity="0.3"/><line x1="460.78" y1="305" x2="462.62" y2="330" stroke="#E4E4E4" stroke-width="0.6" stroke-opacity="0.7"/><line x1="460.78" y1="305" x2="459.77" y2="330" stroke="#E4E4E4" stroke-width="0.5" stroke-opacity="0.45"/><line x1="458.77" y1="305" x2="462.62" y2="330" stroke="#E4E4E4" stroke-width="0.5" stroke-opacity="0.3"/><line x1="458.77" y1="305" x2="459.77" y2="330" stroke="#E4E4E4" stroke-width="0.6" stroke-opacity="0.7"/><line x1="458.77" y1="305" x2="456.4" y2="330" stroke="#E4E4E4" stroke-width="0.5" stroke-opacity="0.45"/><line x1="456.4" y1="305" x2="459.77" y2="330" stroke="#E4E4E4" stroke-width="0.5" stroke-opacity="0.3"/><line x1="456.4" y1="305" x2="456.4" y2="330" stroke="#E4E4E4" stroke-width="0.6" stroke-opacity="0.7"/><line x1="456.4" y1="305" x2="453.03" y2="330" stroke="#E4E4E4" stroke-width="0.5" stroke-opacity="0.45"/><line x1="454.03" y1="305" x2="456.4" y2="330" stroke="#E4E4E4" stroke-width="0.5" stroke-opacity="0.3"/><line x1="454.03" y1="305" x2="453.03" y2="330" stroke="#E4E4E4" stroke-width="0.6" stroke-opacity="0.7"/><line x1="454.03" y1="305" x2="450.18" y2="330" stroke="#E4E4E4" stroke-width="0.5" stroke-opacity="0.45"/><line x1="452.02" y1="305" x2="453.03" y2="330" stroke="#E4E4E4" stroke-width="0.5" stroke-opacity="0.3"/><line x1="452.02" y1="305" x2="450.18" y2="330" stroke="#E4E4E4" stroke-width="0.6" stroke-opacity="0.7"/><line x1="452.02" y1="305" x2="448.27" y2="330" stroke="#E4E4E4" stroke-width="0.5" stroke-opacity="0.45"/><line x1="450.67" y1="305" x2="450.18" y2="330" stroke="#E4E4E4" stroke-width="0.5" stroke-opacity="0.3"/><line x1="450.67" y1="305" x2="448.27" y2="330" stroke="#E4E4E4" stroke-width="0.6" stroke-opacity="0.7"/><line x1="450.67" y1="305" x2="447.6" y2="330" stroke="#E4E4E4" stroke-width="0.5" stroke-opacity="0.45"/><line x1="450.2" y1="305" x2="448.27" y2="330" stroke="#E4E4E4" stroke-width="0.5" stroke-opacity="0.3"/><line x1="450.2" y1="305" x2="447.6" y2="330" stroke="#E4E4E4" stroke-width="0.8" stroke-opacity="1"/><rect x="447.6" y="213" width="17.6" height="2" fill="#FFF"/><rect x="450.1" y="238" width="12.6" height="2" fill="#FFF"/><rect x="450.6" y="260" width="11.6" height="2" fill="#FFF"/><rect x="450.6" y="282" width="11.6" height="2" fill="#FFF"/><rect x="449.9" y="304" width="13" height="2" fill="#FFF"/><rect x="447.3" y="329" width="18.2" height="2" fill="#FFF"/><line x1="465.2" y1="330" x2="480.4" y2="332.5" stroke="#E4E4E4" stroke-width="0.6" stroke-opacity="0.8"/><line x1="465.2" y1="330" x2="478.57" y2="332.5" stroke="#E4E4E4" stroke-width="0.5" stroke-opacity="0.6"/><line x1="464.53" y1="330" x2="478.57" y2="332.5" stroke="#E4E4E4" stroke-width="0.6" stroke-opacity="0.8"/><line x1="464.53" y1="330" x2="473.37" y2="332.5" stroke="#E4E4E4" stroke-width="0.5" stroke-opacity="0.6"/><line x1="462.62" y1="330" x2="473.37" y2="332.5" stroke="#E4E4E4" stroke-width="0.6" stroke-opacity="0.8"/><line x1="462.62" y1="330" x2="465.58" y2="332.5" stroke="#E4E4E4" stroke-width="0.5" stroke-opacity="0.6"/><line x1="459.77" y1="330" x2="465.58" y2="332.5" stroke="#E4E4E4" stroke-width="0.6" stroke-opacity="0.8"/><line x1="459.77" y1="330" x2="456.4" y2="332.5" stroke="#E4E4E4" stroke-width="0.5" stroke-opacity="0.6"/><line x1="456.4" y1="330" x2="456.4" y2="332.5" stroke="#E4E4E4" stroke-width="0.6" stroke-opacity="0.8"/><line x1="456.4" y1="330" x2="447.22" y2="332.5" stroke="#E4E4E4" stroke-width="0.5" stroke-opacity="0.6"/><line x1="453.03" y1="330" x2="447.22" y2="332.5" stroke="#E4E4E4" stroke-width="0.6" stroke-opacity="0.8"/><line x1="453.03" y1="330" x2="439.43" y2="332.5" stroke="#E4E4E4" stroke-width="0.5" stroke-opacity="0.6"/><line x1="450.18" y1="330" x2="439.43" y2="332.5" stroke="#E4E4E4" stroke-width="0.6" stroke-opacity="0.8"/><line x1="450.18" y1="330" x2="434.23" y2="332.5" stroke="#E4E4E4" stroke-width="0.5" stroke-opacity="0.6"/><line x1="448.27" y1="330" x2="434.23" y2="332.5" stroke="#E4E4E4" stroke-width="0.6" stroke-opacity="0.8"/><line x1="448.27" y1="330" x2="432.4" y2="332.5" stroke="#E4E4E4" stroke-width="0.5" stroke-opacity="0.6"/><line x1="447.6" y1="330" x2="432.4" y2="332.5" stroke="#E4E4E4" stroke-width="0.6" stroke-opacity="0.8"/><line x1="447.6" y1="330" x2="434.23" y2="332.5" stroke="#E4E4E4" stroke-width="0.5" stroke-opacity="0.6"/><line x1="448.27" y1="330" x2="434.23" y2="332.5" stroke="#E4E4E4" stroke-width="0.6" stroke-opacity="0.8"/><line x1="448.27" y1="330" x2="439.43" y2="332.5" stroke="#E4E4E4" stroke-width="0.5" stroke-opacity="0.6"/><line x1="450.18" y1="330" x2="439.43" y2="332.5" stroke="#E4E4E4" stroke-width="0.6" stroke-opacity="0.8"/><line x1="450.18" y1="330" x2="447.22" y2="332.5" stroke="#E4E4E4" stroke-width="0.5" stroke-opacity="0.6"/><line x1="453.03" y1="330" x2="447.22" y2="332.5" stroke="#E4E4E4" stroke-width="0.6" stroke-opacity="0.8"/><line x1="453.03" y1="330" x2="456.4" y2="332.5" stroke="#E4E4E4" stroke-width="0.5" stroke-opacity="0.6"/><line x1="456.4" y1="330" x2="456.4" y2="332.5" stroke="#E4E4E4" stroke-width="0.6" stroke-opacity="0.8"/><line x1="456.4" y1="330" x2="465.58" y2="332.5" stroke="#E4E4E4" stroke-width="0.5" stroke-opacity="0.6"/><line x1="459.77" y1="330" x2="465.58" y2="332.5" stroke="#E4E4E4" stroke-width="0.6" stroke-opacity="0.8"/><line x1="459.77" y1="330" x2="473.37" y2="332.5" stroke="#E4E4E4" stroke-width="0.5" stroke-opacity="0.6"/><line x1="462.62" y1="330" x2="473.37" y2="332.5" stroke="#E4E4E4" stroke-width="0.6" stroke-opacity="0.8"/><line x1="462.62" y1="330" x2="478.57" y2="332.5" stroke="#E4E4E4" stroke-width="0.5" stroke-opacity="0.6"/><line x1="464.53" y1="330" x2="478.57" y2="332.5" stroke="#E4E4E4" stroke-width="0.6" stroke-opacity="0.8"/><line x1="464.53" y1="330" x2="480.4" y2="332.5" stroke="#E4E4E4" stroke-width="0.5" stroke-opacity="0.6"/><line x1="480.4" y1="332.5" x2="490.4" y2="335" stroke="#E4E4E4" stroke-width="0.6" stroke-opacity="0.8"/><line x1="480.4" y1="332.5" x2="487.81" y2="335" stroke="#E4E4E4" stroke-width="0.5" stroke-opacity="0.6"/><line x1="478.57" y1="332.5" x2="487.81" y2="335" stroke="#E4E4E4" stroke-width="0.6" stroke-opacity="0.8"/><line x1="478.57" y1="332.5" x2="480.44" y2="335" stroke="#E4E4E4" stroke-width="0.5" stroke-opacity="0.6"/><line x1="473.37" y1="332.5" x2="480.44" y2="335" stroke="#E4E4E4" stroke-width="0.6" stroke-opacity="0.8"/><line x1="473.37" y1="332.5" x2="469.41" y2="335" stroke="#E4E4E4" stroke-width="0.5" stroke-opacity="0.6"/><line x1="465.58" y1="332.5" x2="469.41" y2="335" stroke="#E4E4E4" stroke-width="0.6" stroke-opacity="0.8"/><line x1="465.58" y1="332.5" x2="456.4" y2="335" stroke="#E4E4E4" stroke-width="0.5" stroke-opacity="0.6"/><line x1="456.4" y1="332.5" x2="456.4" y2="335" stroke="#E4E4E4" stroke-width="0.6" stroke-opacity="0.8"/><line x1="456.4" y1="332.5" x2="443.39" y2="335" stroke="#E4E4E4" stroke-width="0.5" stroke-opacity="0.6"/><line x1="447.22" y1="332.5" x2="443.39" y2="335" stroke="#E4E4E4" stroke-width="0.6" stroke-opacity="0.8"/><line x1="447.22" y1="332.5" x2="432.36" y2="335" stroke="#E4E4E4" stroke-width="0.5" stroke-opacity="0.6"/><line x1="439.43" y1="332.5" x2="432.36" y2="335" stroke="#E4E4E4" stroke-width="0.6" stroke-opacity="0.8"/><line x1="439.43" y1="332.5" x2="424.99" y2="335" stroke="#E4E4E4" stroke-width="0.5" stroke-opacity="0.6"/><line x1="434.23" y1="332.5" x2="424.99" y2="335" stroke="#E4E4E4" stroke-width="0.6" stroke-opacity="0.8"/><line x1="434.23" y1="332.5" x2="422.4" y2="335" stroke="#E4E4E4" stroke-width="0.5" stroke-opacity="0.6"/><line x1="432.4" y1="332.5" x2="422.4" y2="335" stroke="#E4E4E4" stroke-width="0.6" stroke-opacity="0.8"/><line x1="432.4" y1="332.5" x2="424.99" y2="335" stroke="#E4E4E4" stroke-width="0.5" stroke-opacity="0.6"/><line x1="434.23" y1="332.5" x2="424.99" y2="335" stroke="#E4E4E4" stroke-width="0.6" stroke-opacity="0.8"/><line x1="434.23" y1="332.5" x2="432.36" y2="335" stroke="#E4E4E4" stroke-width="0.5" stroke-opacity="0.6"/><line x1="439.43" y1="332.5" x2="432.36" y2="335" stroke="#E4E4E4" stroke-width="0.6" stroke-opacity="0.8"/><line x1="439.43" y1="332.5" x2="443.39" y2="335" stroke="#E4E4E4" stroke-width="0.5" stroke-opacity="0.6"/><line x1="447.22" y1="332.5" x2="443.39" y2="335" stroke="#E4E4E4" stroke-width="0.6" stroke-opacity="0.8"/><line x1="447.22" y1="332.5" x2="456.4" y2="335" stroke="#E4E4E4" stroke-width="0.5" stroke-opacity="0.6"/><line x1="456.4" y1="332.5" x2="456.4" y2="335" stroke="#E4E4E4" stroke-width="0.6" stroke-opacity="0.8"/><line x1="456.4" y1="332.5" x2="469.41" y2="335" stroke="#E4E4E4" stroke-width="0.5" stroke-opacity="0.6"/><line x1="465.58" y1="332.5" x2="469.41" y2="335" stroke="#E4E4E4" stroke-width="0.6" stroke-opacity="0.8"/><line x1="465.58" y1="332.5" x2="480.44" y2="335" stroke="#E4E4E4" stroke-width="0.5" stroke-opacity="0.6"/><line x1="473.37" y1="332.5" x2="480.44" y2="335" stroke="#E4E4E4" stroke-width="0.6" stroke-opacity="0.8"/><line x1="473.37" y1="332.5" x2="487.81" y2="335" stroke="#E4E4E4" stroke-width="0.5" stroke-opacity="0.6"/><line x1="478.57" y1="332.5" x2="487.81" y2="335" stroke="#E4E4E4" stroke-width="0.6" stroke-opacity="0.8"/><line x1="478.57" y1="332.5" x2="490.4" y2="335" stroke="#E4E4E4" stroke-width="0.5" stroke-opacity="0.6"/><line x1="490.4" y1="335" x2="498.9" y2="337.2" stroke="#E4E4E4" stroke-width="0.6" stroke-opacity="0.8"/><line x1="490.4" y1="335" x2="495.66" y2="337.2" stroke="#E4E4E4" stroke-width="0.5" stroke-opacity="0.6"/><line x1="487.81" y1="335" x2="495.66" y2="337.2" stroke="#E4E4E4" stroke-width="0.6" stroke-opacity="0.8"/><line x1="487.81" y1="335" x2="486.45" y2="337.2" stroke="#E4E4E4" stroke-width="0.5" stroke-opacity="0.6"/><line x1="480.44" y1="335" x2="486.45" y2="337.2" stroke="#E4E4E4" stroke-width="0.6" stroke-opacity="0.8"/><line x1="480.44" y1="335" x2="472.66" y2="337.2" stroke="#E4E4E4" stroke-width="0.5" stroke-opacity="0.6"/><line x1="469.41" y1="335" x2="472.66" y2="337.2" stroke="#E4E4E4" stroke-width="0.6" stroke-opacity="0.8"/><line x1="469.41" y1="335" x2="456.4" y2="337.2" stroke="#E4E4E4" stroke-width="0.5" stroke-opacity="0.6"/><line x1="456.4" y1="335" x2="456.4" y2="337.2" stroke="#E4E4E4" stroke-width="0.6" stroke-opacity="0.8"/><line x1="456.4" y1="335" x2="440.14" y2="337.2" stroke="#E4E4E4" stroke-width="0.5" stroke-opacity="0.6"/><line x1="443.39" y1="335" x2="440.14" y2="337.2" stroke="#E4E4E4" stroke-width="0.6" stroke-opacity="0.8"/><line x1="443.39" y1="335" x2="426.35" y2="337.2" stroke="#E4E4E4" stroke-width="0.5" stroke-opacity="0.6"/><line x1="432.36" y1="335" x2="426.35" y2="337.2" stroke="#E4E4E4" stroke-width="0.6" stroke-opacity="0.8"/><line x1="432.36" y1="335" x2="417.14" y2="337.2" stroke="#E4E4E4" stroke-width="0.5" stroke-opacity="0.6"/><line x1="424.99" y1="335" x2="417.14" y2="337.2" stroke="#E4E4E4" stroke-width="0.6" stroke-opacity="0.8"/><line x1="424.99" y1="335" x2="413.9" y2="337.2" stroke="#E4E4E4" stroke-width="0.5" stroke-opacity="0.6"/><line x1="422.4" y1="335" x2="413.9" y2="337.2" stroke="#E4E4E4" stroke-width="0.6" stroke-opacity="0.8"/><line x1="422.4" y1="335" x2="417.14" y2="337.2" stroke="#E4E4E4" stroke-width="0.5" stroke-opacity="0.6"/><line x1="424.99" y1="335" x2="417.14" y2="337.2" stroke="#E4E4E4" stroke-width="0.6" stroke-opacity="0.8"/><line x1="424.99" y1="335" x2="426.35" y2="337.2" stroke="#E4E4E4" stroke-width="0.5" stroke-opacity="0.6"/><line x1="432.36" y1="335" x2="426.35" y2="337.2" stroke="#E4E4E4" stroke-width="0.6" stroke-opacity="0.8"/><line x1="432.36" y1="335" x2="440.14" y2="337.2" stroke="#E4E4E4" stroke-width="0.5" stroke-opacity="0.6"/><line x1="443.39" y1="335" x2="440.14" y2="337.2" stroke="#E4E4E4" stroke-width="0.6" stroke-opacity="0.8"/><line x1="443.39" y1="335" x2="456.4" y2="337.2" stroke="#E4E4E4" stroke-width="0.5" stroke-opacity="0.6"/><line x1="456.4" y1="335" x2="456.4" y2="337.2" stroke="#E4E4E4" stroke-width="0.6" stroke-opacity="0.8"/><line x1="456.4" y1="335" x2="472.66" y2="337.2" stroke="#E4E4E4" stroke-width="0.5" stroke-opacity="0.6"/><line x1="469.41" y1="335" x2="472.66" y2="337.2" stroke="#E4E4E4" stroke-width="0.6" stroke-opacity="0.8"/><line x1="469.41" y1="335" x2="486.45" y2="337.2" stroke="#E4E4E4" stroke-width="0.5" stroke-opacity="0.6"/><line x1="480.44" y1="335" x2="486.45" y2="337.2" stroke="#E4E4E4" stroke-width="0.6" stroke-opacity="0.8"/><line x1="480.44" y1="335" x2="495.66" y2="337.2" stroke="#E4E4E4" stroke-width="0.5" stroke-opacity="0.6"/><line x1="487.81" y1="335" x2="495.66" y2="337.2" stroke="#E4E4E4" stroke-width="0.6" stroke-opacity="0.8"/><line x1="487.81" y1="335" x2="498.9" y2="337.2" stroke="#E4E4E4" stroke-width="0.5" stroke-opacity="0.6"/><line x1="432.4" y1="332.5" x2="480.4" y2="332.5" stroke="#E4E4E4" stroke-width="0.9"/><rect x="479.3" y="331.4" width="2.2" height="2.2" fill="#FFFFFF"/><rect x="477.47" y="331.4" width="2.2" height="2.2" fill="#FFFFFF"/><rect x="472.27" y="331.4" width="2.2" height="2.2" fill="#FFFFFF"/><rect x="464.48" y="331.4" width="2.2" height="2.2" fill="#FFFFFF"/><rect x="455.3" y="331.4" width="2.2" height="2.2" fill="#FFFFFF"/><rect x="446.12" y="331.4" width="2.2" height="2.2" fill="#FFFFFF"/><rect x="438.33" y="331.4" width="2.2" height="2.2" fill="#FFFFFF"/><rect x="433.13" y="331.4" width="2.2" height="2.2" fill="#FFFFFF"/><rect x="431.3" y="331.4" width="2.2" height="2.2" fill="#FFFFFF"/><rect x="433.13" y="331.4" width="2.2" height="2.2" fill="#FFFFFF"/><rect x="438.33" y="331.4" width="2.2" height="2.2" fill="#FFFFFF"/><rect x="446.12" y="331.4" width="2.2" height="2.2" fill="#FFFFFF"/><rect x="455.3" y="331.4" width="2.2" height="2.2" fill="#FFFFFF"/><rect x="464.48" y="331.4" width="2.2" height="2.2" fill="#FFFFFF"/><rect x="472.27" y="331.4" width="2.2" height="2.2" fill="#FFFFFF"/><rect x="477.47" y="331.4" width="2.2" height="2.2" fill="#FFFFFF"/><line x1="422.4" y1="335" x2="490.4" y2="335" stroke="#E4E4E4" stroke-width="0.9"/><rect x="489.3" y="333.9" width="2.2" height="2.2" fill="#FFFFFF"/><rect x="486.71" y="333.9" width="2.2" height="2.2" fill="#FFFFFF"/><rect x="479.34" y="333.9" width="2.2" height="2.2" fill="#FFFFFF"/><rect x="468.31" y="333.9" width="2.2" height="2.2" fill="#FFFFFF"/><rect x="455.3" y="333.9" width="2.2" height="2.2" fill="#FFFFFF"/><rect x="442.29" y="333.9" width="2.2" height="2.2" fill="#FFFFFF"/><rect x="431.26" y="333.9" width="2.2" height="2.2" fill="#FFFFFF"/><rect x="423.89" y="333.9" width="2.2" height="2.2" fill="#FFFFFF"/><rect x="421.3" y="333.9" width="2.2" height="2.2" fill="#FFFFFF"/><rect x="423.89" y="333.9" width="2.2" height="2.2" fill="#FFFFFF"/><rect x="431.26" y="333.9" width="2.2" height="2.2" fill="#FFFFFF"/><rect x="442.29" y="333.9" width="2.2" height="2.2" fill="#FFFFFF"/><rect x="455.3" y="333.9" width="2.2" height="2.2" fill="#FFFFFF"/><rect x="468.31" y="333.9" width="2.2" height="2.2" fill="#FFFFFF"/><rect x="479.34" y="333.9" width="2.2" height="2.2" fill="#FFFFFF"/><rect x="486.71" y="333.9" width="2.2" height="2.2" fill="#FFFFFF"/><line x1="413.9" y1="337.2" x2="498.9" y2="337.2" stroke="#E4E4E4" stroke-width="0.9"/><rect x="497.8" y="336.1" width="2.2" height="2.2" fill="#FFFFFF"/><rect x="494.56" y="336.1" width="2.2" height="2.2" fill="#FFFFFF"/><rect x="485.35" y="336.1" width="2.2" height="2.2" fill="#FFFFFF"/><rect x="471.56" y="336.1" width="2.2" height="2.2" fill="#FFFFFF"/><rect x="455.3" y="336.1" width="2.2" height="2.2" fill="#FFFFFF"/><rect x="439.04" y="336.1" width="2.2" height="2.2" fill="#FFFFFF"/><rect x="425.25" y="336.1" width="2.2" height="2.2" fill="#FFFFFF"/><rect x="416.04" y="336.1" width="2.2" height="2.2" fill="#FFFFFF"/><rect x="412.8" y="336.1" width="2.2" height="2.2" fill="#FFFFFF"/><rect x="416.04" y="336.1" width="2.2" height="2.2" fill="#FFFFFF"/><rect x="425.25" y="336.1" width="2.2" height="2.2" fill="#FFFFFF"/><rect x="439.04" y="336.1" width="2.2" height="2.2" fill="#FFFFFF"/><rect x="455.3" y="336.1" width="2.2" height="2.2" fill="#FFFFFF"/><rect x="471.56" y="336.1" width="2.2" height="2.2" fill="#FFFFFF"/><rect x="485.35" y="336.1" width="2.2" height="2.2" fill="#FFFFFF"/><rect x="494.56" y="336.1" width="2.2" height="2.2" fill="#FFFFFF"/><rect x="516.3" y="148.9" width="2.2" height="2.2" fill="#FFFFFF"/><rect x="511.66" y="148.9" width="2.2" height="2.2" fill="#FFFFFF"/><rect x="498.43" y="148.9" width="2.2" height="2.2" fill="#FFFFFF"/><rect x="478.64" y="148.9" width="2.2" height="2.2" fill="#FFFFFF"/><rect x="455.3" y="148.9" width="2.2" height="2.2" fill="#FFFFFF"/><rect x="431.96" y="148.9" width="2.2" height="2.2" fill="#FFFFFF"/><rect x="412.17" y="148.9" width="2.2" height="2.2" fill="#FFFFFF"/><rect x="398.94" y="148.9" width="2.2" height="2.2" fill="#FFFFFF"/><rect x="394.3" y="148.9" width="2.2" height="2.2" fill="#FFFFFF"/><rect x="398.94" y="148.9" width="2.2" height="2.2" fill="#FFFFFF"/><rect x="412.17" y="148.9" width="2.2" height="2.2" fill="#FFFFFF"/><rect x="431.96" y="148.9" width="2.2" height="2.2" fill="#FFFFFF"/><rect x="455.3" y="148.9" width="2.2" height="2.2" fill="#FFFFFF"/><rect x="478.64" y="148.9" width="2.2" height="2.2" fill="#FFFFFF"/><rect x="498.43" y="148.9" width="2.2" height="2.2" fill="#FFFFFF"/><rect x="511.66" y="148.9" width="2.2" height="2.2" fill="#FFFFFF"/><rect x="257" y="338" width="200" height="1" fill="#606060"/><rect x="457" y="338" width="198" height="1" fill="#A844B0"/><path d="M281.5 15.5H285.5V34.5H281.5Z M288.5 15.5H300.5V34.5H288.5Z M292.5 19.5H296.5V30.5H292.5Z" fill="#FFFF30" fill-rule="evenodd" stroke="#000" stroke-width="1"/></svg>
<svg class="a" style="left:0;top:344px" width="252" height="311" viewBox="0 344 252 311"><line x1="211.8" y1="506" x2="199.85" y2="445.92" stroke="#E4E4E4" stroke-width="1"/><line x1="199.85" y1="445.92" x2="165.82" y2="394.98" stroke="#E4E4E4" stroke-width="1"/><line x1="165.82" y1="394.98" x2="114.88" y2="360.95" stroke="#E4E4E4" stroke-width="1"/><line x1="114.88" y1="360.95" x2="54.8" y2="349" stroke="#E4E4E4" stroke-width="1"/><line x1="54.8" y1="349" x2="-5.28" y2="360.95" stroke="#E4E4E4" stroke-width="1"/><line x1="-5.28" y1="360.95" x2="-56.22" y2="394.98" stroke="#E4E4E4" stroke-width="1"/><line x1="-56.22" y1="394.98" x2="-90.25" y2="445.92" stroke="#E4E4E4" stroke-width="1"/><line x1="-90.25" y1="445.92" x2="-102.2" y2="506" stroke="#E4E4E4" stroke-width="1"/><line x1="-102.2" y1="506" x2="-90.25" y2="566.08" stroke="#E4E4E4" stroke-width="1"/><line x1="-90.25" y1="566.08" x2="-56.22" y2="617.02" stroke="#E4E4E4" stroke-width="1"/><line x1="-56.22" y1="617.02" x2="-5.28" y2="651.05" stroke="#E4E4E4" stroke-width="1"/><line x1="-5.28" y1="651.05" x2="54.8" y2="663" stroke="#E4E4E4" stroke-width="1"/><line x1="54.8" y1="663" x2="114.88" y2="651.05" stroke="#E4E4E4" stroke-width="1"/><line x1="114.88" y1="651.05" x2="165.82" y2="617.02" stroke="#E4E4E4" stroke-width="1"/><line x1="165.82" y1="617.02" x2="199.85" y2="566.08" stroke="#E4E4E4" stroke-width="1"/><line x1="199.85" y1="566.08" x2="211.8" y2="506" stroke="#E4E4E4" stroke-width="1"/><line x1="173.8" y1="506" x2="164.74" y2="460.46" stroke="#E4E4E4" stroke-width="0.9"/><line x1="164.74" y1="460.46" x2="138.95" y2="421.85" stroke="#E4E4E4" stroke-width="0.9"/><line x1="138.95" y1="421.85" x2="100.34" y2="396.06" stroke="#E4E4E4" stroke-width="0.9"/><line x1="100.34" y1="396.06" x2="54.8" y2="387" stroke="#E4E4E4" stroke-width="0.9"/><line x1="54.8" y1="387" x2="9.26" y2="396.06" stroke="#E4E4E4" stroke-width="0.9"/><line x1="9.26" y1="396.06" x2="-29.35" y2="421.85" stroke="#E4E4E4" stroke-width="0.9"/><line x1="-29.35" y1="421.85" x2="-55.14" y2="460.46" stroke="#E4E4E4" stroke-width="0.9"/><line x1="-55.14" y1="460.46" x2="-64.2" y2="506" stroke="#E4E4E4" stroke-width="0.9"/><line x1="-64.2" y1="506" x2="-55.14" y2="551.54" stroke="#E4E4E4" stroke-width="0.9"/><line x1="-55.14" y1="551.54" x2="-29.35" y2="590.15" stroke="#E4E4E4" stroke-width="0.9"/><line x1="-29.35" y1="590.15" x2="9.26" y2="615.94" stroke="#E4E4E4" stroke-width="0.9"/><line x1="9.26" y1="615.94" x2="54.8" y2="625" stroke="#E4E4E4" stroke-width="0.9"/><line x1="54.8" y1="625" x2="100.34" y2="615.94" stroke="#E4E4E4" stroke-width="0.9"/><line x1="100.34" y1="615.94" x2="138.95" y2="590.15" stroke="#E4E4E4" stroke-width="0.9"/><line x1="138.95" y1="590.15" x2="164.74" y2="551.54" stroke="#E4E4E4" stroke-width="0.9"/><line x1="164.74" y1="551.54" x2="173.8" y2="506" stroke="#E4E4E4" stroke-width="0.9"/><line x1="149.8" y1="506" x2="142.57" y2="469.65" stroke="#E4E4E4" stroke-width="0.9"/><line x1="142.57" y1="469.65" x2="121.98" y2="438.82" stroke="#E4E4E4" stroke-width="0.9"/><line x1="121.98" y1="438.82" x2="91.15" y2="418.23" stroke="#E4E4E4" stroke-width="0.9"/><line x1="91.15" y1="418.23" x2="54.8" y2="411" stroke="#E4E4E4" stroke-width="0.9"/><line x1="54.8" y1="411" x2="18.45" y2="418.23" stroke="#E4E4E4" stroke-width="0.9"/><line x1="18.45" y1="418.23" x2="-12.38" y2="438.82" stroke="#E4E4E4" stroke-width="0.9"/><line x1="-12.38" y1="438.82" x2="-32.97" y2="469.65" stroke="#E4E4E4" stroke-width="0.9"/><line x1="-32.97" y1="469.65" x2="-40.2" y2="506" stroke="#E4E4E4" stroke-width="0.9"/><line x1="-40.2" y1="506" x2="-32.97" y2="542.35" stroke="#E4E4E4" stroke-width="0.9"/><line x1="-32.97" y1="542.35" x2="-12.38" y2="573.18" stroke="#E4E4E4" stroke-width="0.9"/><line x1="-12.38" y1="573.18" x2="18.45" y2="593.77" stroke="#E4E4E4" stroke-width="0.9"/><line x1="18.45" y1="593.77" x2="54.8" y2="601" stroke="#E4E4E4" stroke-width="0.9"/><line x1="54.8" y1="601" x2="91.15" y2="593.77" stroke="#E4E4E4" stroke-width="0.9"/><line x1="91.15" y1="593.77" x2="121.98" y2="573.18" stroke="#E4E4E4" stroke-width="0.9"/><line x1="121.98" y1="573.18" x2="142.57" y2="542.35" stroke="#E4E4E4" stroke-width="0.9"/><line x1="142.57" y1="542.35" x2="149.8" y2="506" stroke="#E4E4E4" stroke-width="0.9"/><line x1="114.8" y1="506" x2="110.23" y2="483.04" stroke="#E4E4E4" stroke-width="0.9"/><line x1="110.23" y1="483.04" x2="97.23" y2="463.57" stroke="#E4E4E4" stroke-width="0.9"/><line x1="97.23" y1="463.57" x2="77.76" y2="450.57" stroke="#E4E4E4" stroke-width="0.9"/><line x1="77.76" y1="450.57" x2="54.8" y2="446" stroke="#E4E4E4" stroke-width="0.9"/><line x1="54.8" y1="446" x2="31.84" y2="450.57" stroke="#E4E4E4" stroke-width="0.9"/><line x1="31.84" y1="450.57" x2="12.37" y2="463.57" stroke="#E4E4E4" stroke-width="0.9"/><line x1="12.37" y1="463.57" x2="-0.63" y2="483.04" stroke="#E4E4E4" stroke-width="0.9"/><line x1="-0.63" y1="483.04" x2="-5.2" y2="506" stroke="#E4E4E4" stroke-width="0.9"/><line x1="-5.2" y1="506" x2="-0.63" y2="528.96" stroke="#E4E4E4" stroke-width="0.9"/><line x1="-0.63" y1="528.96" x2="12.37" y2="548.43" stroke="#E4E4E4" stroke-width="0.9"/><line x1="12.37" y1="548.43" x2="31.84" y2="561.43" stroke="#E4E4E4" stroke-width="0.9"/><line x1="31.84" y1="561.43" x2="54.8" y2="566" stroke="#E4E4E4" stroke-width="0.9"/><line x1="54.8" y1="566" x2="77.76" y2="561.43" stroke="#E4E4E4" stroke-width="0.9"/><line x1="77.76" y1="561.43" x2="97.23" y2="548.43" stroke="#E4E4E4" stroke-width="0.9"/><line x1="97.23" y1="548.43" x2="110.23" y2="528.96" stroke="#E4E4E4" stroke-width="0.9"/><line x1="110.23" y1="528.96" x2="114.8" y2="506" stroke="#E4E4E4" stroke-width="0.9"/><line x1="211.8" y1="506" x2="76.6" y2="506" stroke="#E4E4E4" stroke-width="0.7"/><line x1="211.8" y1="506" x2="74.94" y2="497.66" stroke="#E4E4E4" stroke-width="0.6" stroke-opacity="0.7"/><line x1="199.85" y1="445.92" x2="74.94" y2="497.66" stroke="#E4E4E4" stroke-width="0.7"/><line x1="199.85" y1="445.92" x2="70.21" y2="490.59" stroke="#E4E4E4" stroke-width="0.6" stroke-opacity="0.7"/><line x1="165.82" y1="394.98" x2="70.21" y2="490.59" stroke="#E4E4E4" stroke-width="0.7"/><line x1="165.82" y1="394.98" x2="63.14" y2="485.86" stroke="#E4E4E4" stroke-width="0.6" stroke-opacity="0.7"/><line x1="114.88" y1="360.95" x2="63.14" y2="485.86" stroke="#E4E4E4" stroke-width="0.7"/><line x1="114.88" y1="360.95" x2="54.8" y2="484.2" stroke="#E4E4E4" stroke-width="0.6" stroke-opacity="0.7"/><line x1="54.8" y1="349" x2="54.8" y2="484.2" stroke="#E4E4E4" stroke-width="0.7"/><line x1="54.8" y1="349" x2="46.46" y2="485.86" stroke="#E4E4E4" stroke-width="0.6" stroke-opacity="0.7"/><line x1="-5.28" y1="360.95" x2="46.46" y2="485.86" stroke="#E4E4E4" stroke-width="0.7"/><line x1="-5.28" y1="360.95" x2="39.39" y2="490.59" stroke="#E4E4E4" stroke-width="0.6" stroke-opacity="0.7"/><line x1="-56.22" y1="394.98" x2="39.39" y2="490.59" stroke="#E4E4E4" stroke-width="0.7"/><line x1="-56.22" y1="394.98" x2="34.66" y2="497.66" stroke="#E4E4E4" stroke-width="0.6" stroke-opacity="0.7"/><line x1="-90.25" y1="445.92" x2="34.66" y2="497.66" stroke="#E4E4E4" stroke-width="0.7"/><line x1="-90.25" y1="445.92" x2="33" y2="506" stroke="#E4E4E4" stroke-width="0.6" stroke-opacity="0.7"/><line x1="-102.2" y1="506" x2="33" y2="506" stroke="#E4E4E4" stroke-width="0.7"/><line x1="-102.2" y1="506" x2="34.66" y2="514.34" stroke="#E4E4E4" stroke-width="0.6" stroke-opacity="0.7"/><line x1="-90.25" y1="566.08" x2="34.66" y2="514.34" stroke="#E4E4E4" stroke-width="0.7"/><line x1="-90.25" y1="566.08" x2="39.39" y2="521.41" stroke="#E4E4E4" stroke-width="0.6" stroke-opacity="0.7"/><line x1="-56.22" y1="617.02" x2="39.39" y2="521.41" stroke="#E4E4E4" stroke-width="0.7"/><line x1="-56.22" y1="617.02" x2="46.46" y2="526.14" stroke="#E4E4E4" stroke-width="0.6" stroke-opacity="0.7"/><line x1="-5.28" y1="651.05" x2="46.46" y2="526.14" stroke="#E4E4E4" stroke-width="0.7"/><line x1="-5.28" y1="651.05" x2="54.8" y2="527.8" stroke="#E4E4E4" stroke-width="0.6" stroke-opacity="0.7"/><line x1="54.8" y1="663" x2="54.8" y2="527.8" stroke="#E4E4E4" stroke-width="0.7"/><line x1="54.8" y1="663" x2="63.14" y2="526.14" stroke="#E4E4E4" stroke-width="0.6" stroke-opacity="0.7"/><line x1="114.88" y1="651.05" x2="63.14" y2="526.14" stroke="#E4E4E4" stroke-width="0.7"/><line x1="114.88" y1="651.05" x2="70.21" y2="521.41" stroke="#E4E4E4" stroke-width="0.6" stroke-opacity="0.7"/><line x1="165.82" y1="617.02" x2="70.21" y2="521.41" stroke="#E4E4E4" stroke-width="0.7"/><line x1="165.82" y1="617.02" x2="74.94" y2="514.34" stroke="#E4E4E4" stroke-width="0.6" stroke-opacity="0.7"/><line x1="199.85" y1="566.08" x2="74.94" y2="514.34" stroke="#E4E4E4" stroke-width="0.7"/><line x1="199.85" y1="566.08" x2="76.6" y2="506" stroke="#E4E4E4" stroke-width="0.6" stroke-opacity="0.7"/><line x1="173.8" y1="506" x2="149.8" y2="506" stroke="#E4E4E4" stroke-width="0.8"/><line x1="164.74" y1="460.46" x2="142.57" y2="469.65" stroke="#E4E4E4" stroke-width="0.8"/><line x1="164.74" y1="460.46" x2="149.8" y2="506" stroke="#E4E4E4" stroke-width="0.7"/><line x1="164.74" y1="460.46" x2="121.98" y2="438.82" stroke="#E4E4E4" stroke-width="0.7"/><line x1="138.95" y1="421.85" x2="121.98" y2="438.82" stroke="#E4E4E4" stroke-width="0.8"/><line x1="100.34" y1="396.06" x2="91.15" y2="418.23" stroke="#E4E4E4" stroke-width="0.8"/><line x1="100.34" y1="396.06" x2="121.98" y2="438.82" stroke="#E4E4E4" stroke-width="0.7"/><line x1="100.34" y1="396.06" x2="54.8" y2="411" stroke="#E4E4E4" stroke-width="0.7"/><line x1="54.8" y1="387" x2="54.8" y2="411" stroke="#E4E4E4" stroke-width="0.8"/><line x1="9.26" y1="396.06" x2="18.45" y2="418.23" stroke="#E4E4E4" stroke-width="0.8"/><line x1="9.26" y1="396.06" x2="54.8" y2="411" stroke="#E4E4E4" stroke-width="0.7"/><line x1="9.26" y1="396.06" x2="-12.38" y2="438.82" stroke="#E4E4E4" stroke-width="0.7"/><line x1="-29.35" y1="421.85" x2="-12.38" y2="438.82" stroke="#E4E4E4" stroke-width="0.8"/><line x1="-55.14" y1="460.46" x2="-32.97" y2="469.65" stroke="#E4E4E4" stroke-width="0.8"/><line x1="-55.14" y1="460.46" x2="-12.38" y2="438.82" stroke="#E4E4E4" stroke-width="0.7"/><line x1="-55.14" y1="460.46" x2="-40.2" y2="506" stroke="#E4E4E4" stroke-width="0.7"/><line x1="-64.2" y1="506" x2="-40.2" y2="506" stroke="#E4E4E4" stroke-width="0.8"/><line x1="-55.14" y1="551.54" x2="-32.97" y2="542.35" stroke="#E4E4E4" stroke-width="0.8"/><line x1="-55.14" y1="551.54" x2="-40.2" y2="506" stroke="#E4E4E4" stroke-width="0.7"/><line x1="-55.14" y1="551.54" x2="-12.38" y2="573.18" stroke="#E4E4E4" stroke-width="0.7"/><line x1="-29.35" y1="590.15" x2="-12.38" y2="573.18" stroke="#E4E4E4" stroke-width="0.8"/><line x1="9.26" y1="615.94" x2="18.45" y2="593.77" stroke="#E4E4E4" stroke-width="0.8"/><line x1="9.26" y1="615.94" x2="-12.38" y2="573.18" stroke="#E4E4E4" stroke-width="0.7"/><line x1="9.26" y1="615.94" x2="54.8" y2="601" stroke="#E4E4E4" stroke-width="0.7"/><line x1="54.8" y1="625" x2="54.8" y2="601" stroke="#E4E4E4" stroke-width="0.8"/><line x1="100.34" y1="615.94" x2="91.15" y2="593.77" stroke="#E4E4E4" stroke-width="0.8"/><line x1="100.34" y1="615.94" x2="54.8" y2="601" stroke="#E4E4E4" stroke-width="0.7"/><line x1="100.34" y1="615.94" x2="121.98" y2="573.18" stroke="#E4E4E4" stroke-width="0.7"/><line x1="138.95" y1="590.15" x2="121.98" y2="573.18" stroke="#E4E4E4" stroke-width="0.8"/><line x1="164.74" y1="551.54" x2="142.57" y2="542.35" stroke="#E4E4E4" stroke-width="0.8"/><line x1="164.74" y1="551.54" x2="121.98" y2="573.18" stroke="#E4E4E4" stroke-width="0.7"/><line x1="164.74" y1="551.54" x2="149.8" y2="506" stroke="#E4E4E4" stroke-width="0.7"/><line x1="149.8" y1="506" x2="114.8" y2="506" stroke="#E4E4E4" stroke-width="0.8"/><line x1="142.57" y1="469.65" x2="110.23" y2="483.04" stroke="#E4E4E4" stroke-width="0.8"/><line x1="142.57" y1="469.65" x2="114.8" y2="506" stroke="#E4E4E4" stroke-width="0.7"/><line x1="142.57" y1="469.65" x2="97.23" y2="463.57" stroke="#E4E4E4" stroke-width="0.7"/><line x1="121.98" y1="438.82" x2="97.23" y2="463.57" stroke="#E4E4E4" stroke-width="0.8"/><line x1="91.15" y1="418.23" x2="77.76" y2="450.57" stroke="#E4E4E4" stroke-width="0.8"/><line x1="91.15" y1="418.23" x2="97.23" y2="463.57" stroke="#E4E4E4" stroke-width="0.7"/><line x1="91.15" y1="418.23" x2="54.8" y2="446" stroke="#E4E4E4" stroke-width="0.7"/><line x1="54.8" y1="411" x2="54.8" y2="446" stroke="#E4E4E4" stroke-width="0.8"/><line x1="18.45" y1="418.23" x2="31.84" y2="450.57" stroke="#E4E4E4" stroke-width="0.8"/><line x1="18.45" y1="418.23" x2="54.8" y2="446" stroke="#E4E4E4" stroke-width="0.7"/><line x1="18.45" y1="418.23" x2="12.37" y2="463.57" stroke="#E4E4E4" stroke-width="0.7"/><line x1="-12.38" y1="438.82" x2="12.37" y2="463.57" stroke="#E4E4E4" stroke-width="0.8"/><line x1="-32.97" y1="469.65" x2="-0.63" y2="483.04" stroke="#E4E4E4" stroke-width="0.8"/><line x1="-32.97" y1="469.65" x2="12.37" y2="463.57" stroke="#E4E4E4" stroke-width="0.7"/><line x1="-32.97" y1="469.65" x2="-5.2" y2="506" stroke="#E4E4E4" stroke-width="0.7"/><line x1="-40.2" y1="506" x2="-5.2" y2="506" stroke="#E4E4E4" stroke-width="0.8"/><line x1="-32.97" y1="542.35" x2="-0.63" y2="528.96" stroke="#E4E4E4" stroke-width="0.8"/><line x1="-32.97" y1="542.35" x2="-5.2" y2="506" stroke="#E4E4E4" stroke-width="0.7"/><line x1="-32.97" y1="542.35" x2="12.37" y2="548.43" stroke="#E4E4E4" stroke-width="0.7"/><line x1="-12.38" y1="573.18" x2="12.37" y2="548.43" stroke="#E4E4E4" stroke-width="0.8"/><line x1="18.45" y1="593.77" x2="31.84" y2="561.43" stroke="#E4E4E4" stroke-width="0.8"/><line x1="18.45" y1="593.77" x2="12.37" y2="548.43" stroke="#E4E4E4" stroke-width="0.7"/><line x1="18.45" y1="593.77" x2="54.8" y2="566" stroke="#E4E4E4" stroke-width="0.7"/><line x1="54.8" y1="601" x2="54.8" y2="566" stroke="#E4E4E4" stroke-width="0.8"/><line x1="91.15" y1="593.77" x2="77.76" y2="561.43" stroke="#E4E4E4" stroke-width="0.8"/><line x1="91.15" y1="593.77" x2="54.8" y2="566" stroke="#E4E4E4" stroke-width="0.7"/><line x1="91.15" y1="593.77" x2="97.23" y2="548.43" stroke="#E4E4E4" stroke-width="0.7"/><line x1="121.98" y1="573.18" x2="97.23" y2="548.43" stroke="#E4E4E4" stroke-width="0.8"/><line x1="142.57" y1="542.35" x2="110.23" y2="528.96" stroke="#E4E4E4" stroke-width="0.8"/><line x1="142.57" y1="542.35" x2="97.23" y2="548.43" stroke="#E4E4E4" stroke-width="0.7"/><line x1="142.57" y1="542.35" x2="114.8" y2="506" stroke="#E4E4E4" stroke-width="0.7"/><line x1="114.8" y1="506" x2="77.4" y2="506" stroke="#E4E4E4" stroke-width="0.8"/><line x1="110.23" y1="483.04" x2="75.68" y2="497.35" stroke="#E4E4E4" stroke-width="0.8"/><line x1="110.23" y1="483.04" x2="77.4" y2="506" stroke="#E4E4E4" stroke-width="0.7"/><line x1="110.23" y1="483.04" x2="70.78" y2="490.02" stroke="#E4E4E4" stroke-width="0.7"/><line x1="97.23" y1="463.57" x2="70.78" y2="490.02" stroke="#E4E4E4" stroke-width="0.8"/><line x1="77.76" y1="450.57" x2="63.45" y2="485.12" stroke="#E4E4E4" stroke-width="0.8"/><line x1="77.76" y1="450.57" x2="70.78" y2="490.02" stroke="#E4E4E4" stroke-width="0.7"/><line x1="77.76" y1="450.57" x2="54.8" y2="483.4" stroke="#E4E4E4" stroke-width="0.7"/><line x1="54.8" y1="446" x2="54.8" y2="483.4" stroke="#E4E4E4" stroke-width="0.8"/><line x1="31.84" y1="450.57" x2="46.15" y2="485.12" stroke="#E4E4E4" stroke-width="0.8"/><line x1="31.84" y1="450.57" x2="54.8" y2="483.4" stroke="#E4E4E4" stroke-width="0.7"/><line x1="31.84" y1="450.57" x2="38.82" y2="490.02" stroke="#E4E4E4" stroke-width="0.7"/><line x1="12.37" y1="463.57" x2="38.82" y2="490.02" stroke="#E4E4E4" stroke-width="0.8"/><line x1="-0.63" y1="483.04" x2="33.92" y2="497.35" stroke="#E4E4E4" stroke-width="0.8"/><line x1="-0.63" y1="483.04" x2="38.82" y2="490.02" stroke="#E4E4E4" stroke-width="0.7"/><line x1="-0.63" y1="483.04" x2="32.2" y2="506" stroke="#E4E4E4" stroke-width="0.7"/><line x1="-5.2" y1="506" x2="32.2" y2="506" stroke="#E4E4E4" stroke-width="0.8"/><line x1="-0.63" y1="528.96" x2="33.92" y2="514.65" stroke="#E4E4E4" stroke-width="0.8"/><line x1="-0.63" y1="528.96" x2="32.2" y2="506" stroke="#E4E4E4" stroke-width="0.7"/><line x1="-0.63" y1="528.96" x2="38.82" y2="521.98" stroke="#E4E4E4" stroke-width="0.7"/><line x1="12.37" y1="548.43" x2="38.82" y2="521.98" stroke="#E4E4E4" stroke-width="0.8"/><line x1="31.84" y1="561.43" x2="46.15" y2="526.88" stroke="#E4E4E4" stroke-width="0.8"/><line x1="31.84" y1="561.43" x2="38.82" y2="521.98" stroke="#E4E4E4" stroke-width="0.7"/><line x1="31.84" y1="561.43" x2="54.8" y2="528.6" stroke="#E4E4E4" stroke-width="0.7"/><line x1="54.8" y1="566" x2="54.8" y2="528.6" stroke="#E4E4E4" stroke-width="0.8"/><line x1="77.76" y1="561.43" x2="63.45" y2="526.88" stroke="#E4E4E4" stroke-width="0.8"/><line x1="77.76" y1="561.43" x2="54.8" y2="528.6" stroke="#E4E4E4" stroke-width="0.7"/><line x1="77.76" y1="561.43" x2="70.78" y2="521.98" stroke="#E4E4E4" stroke-width="0.7"/><line x1="97.23" y1="548.43" x2="70.78" y2="521.98" stroke="#E4E4E4" stroke-width="0.8"/><line x1="110.23" y1="528.96" x2="75.68" y2="514.65" stroke="#E4E4E4" stroke-width="0.8"/><line x1="110.23" y1="528.96" x2="70.78" y2="521.98" stroke="#E4E4E4" stroke-width="0.7"/><line x1="110.23" y1="528.96" x2="77.4" y2="506" stroke="#E4E4E4" stroke-width="0.7"/><line x1="77.4" y1="506" x2="54.8" y2="506" stroke="#E4E4E4" stroke-width="0.6"/><line x1="75.68" y1="497.35" x2="54.8" y2="506" stroke="#E4E4E4" stroke-width="0.6"/><line x1="70.78" y1="490.02" x2="54.8" y2="506" stroke="#E4E4E4" stroke-width="0.6"/><line x1="63.45" y1="485.12" x2="54.8" y2="506" stroke="#E4E4E4" stroke-width="0.6"/><line x1="54.8" y1="483.4" x2="54.8" y2="506" stroke="#E4E4E4" stroke-width="0.6"/><line x1="46.15" y1="485.12" x2="54.8" y2="506" stroke="#E4E4E4" stroke-width="0.6"/><line x1="38.82" y1="490.02" x2="54.8" y2="506" stroke="#E4E4E4" stroke-width="0.6"/><line x1="33.92" y1="497.35" x2="54.8" y2="506" stroke="#E4E4E4" stroke-width="0.6"/><line x1="32.2" y1="506" x2="54.8" y2="506" stroke="#E4E4E4" stroke-width="0.6"/><line x1="33.92" y1="514.65" x2="54.8" y2="506" stroke="#E4E4E4" stroke-width="0.6"/><line x1="38.82" y1="521.98" x2="54.8" y2="506" stroke="#E4E4E4" stroke-width="0.6"/><line x1="46.15" y1="526.88" x2="54.8" y2="506" stroke="#E4E4E4" stroke-width="0.6"/><line x1="54.8" y1="528.6" x2="54.8" y2="506" stroke="#E4E4E4" stroke-width="0.6"/><line x1="63.45" y1="526.88" x2="54.8" y2="506" stroke="#E4E4E4" stroke-width="0.6"/><line x1="70.78" y1="521.98" x2="54.8" y2="506" stroke="#E4E4E4" stroke-width="0.6"/><line x1="75.68" y1="514.65" x2="54.8" y2="506" stroke="#E4E4E4" stroke-width="0.6"/><line x1="76.3" y1="506" x2="74.66" y2="497.77" stroke="#E4E4E4" stroke-width="0.6"/><line x1="74.66" y1="497.77" x2="70" y2="490.8" stroke="#E4E4E4" stroke-width="0.6"/><line x1="70" y1="490.8" x2="63.03" y2="486.14" stroke="#E4E4E4" stroke-width="0.6"/><line x1="63.03" y1="486.14" x2="54.8" y2="484.5" stroke="#E4E4E4" stroke-width="0.6"/><line x1="54.8" y1="484.5" x2="46.57" y2="486.14" stroke="#E4E4E4" stroke-width="0.6"/><line x1="46.57" y1="486.14" x2="39.6" y2="490.8" stroke="#E4E4E4" stroke-width="0.6"/><line x1="39.6" y1="490.8" x2="34.94" y2="497.77" stroke="#E4E4E4" stroke-width="0.6"/><line x1="34.94" y1="497.77" x2="33.3" y2="506" stroke="#E4E4E4" stroke-width="0.6"/><line x1="33.3" y1="506" x2="34.94" y2="514.23" stroke="#E4E4E4" stroke-width="0.6"/><line x1="34.94" y1="514.23" x2="39.6" y2="521.2" stroke="#E4E4E4" stroke-width="0.6"/><line x1="39.6" y1="521.2" x2="46.57" y2="525.86" stroke="#E4E4E4" stroke-width="0.6"/><line x1="46.57" y1="525.86" x2="54.8" y2="527.5" stroke="#E4E4E4" stroke-width="0.6"/><line x1="54.8" y1="527.5" x2="63.03" y2="525.86" stroke="#E4E4E4" stroke-width="0.6"/><line x1="63.03" y1="525.86" x2="70" y2="521.2" stroke="#E4E4E4" stroke-width="0.6"/><line x1="70" y1="521.2" x2="74.66" y2="514.23" stroke="#E4E4E4" stroke-width="0.6"/><line x1="74.66" y1="514.23" x2="76.3" y2="506" stroke="#E4E4E4" stroke-width="0.6"/><rect x="75" y="504.7" width="2.6" height="2.6" fill="#FFFFFF"/><rect x="73.36" y="496.47" width="2.6" height="2.6" fill="#FFFFFF"/><rect x="68.7" y="489.5" width="2.6" height="2.6" fill="#FFFFFF"/><rect x="61.73" y="484.84" width="2.6" height="2.6" fill="#FFFFFF"/><rect x="53.5" y="483.2" width="2.6" height="2.6" fill="#FFFFFF"/><rect x="45.27" y="484.84" width="2.6" height="2.6" fill="#FFFFFF"/><rect x="38.3" y="489.5" width="2.6" height="2.6" fill="#FFFFFF"/><rect x="33.64" y="496.47" width="2.6" height="2.6" fill="#FFFFFF"/><rect x="32" y="504.7" width="2.6" height="2.6" fill="#FFFFFF"/><rect x="33.64" y="512.93" width="2.6" height="2.6" fill="#FFFFFF"/><rect x="38.3" y="519.9" width="2.6" height="2.6" fill="#FFFFFF"/><rect x="45.27" y="524.56" width="2.6" height="2.6" fill="#FFFFFF"/><rect x="53.5" y="526.2" width="2.6" height="2.6" fill="#FFFFFF"/><rect x="61.73" y="524.56" width="2.6" height="2.6" fill="#FFFFFF"/><rect x="68.7" y="519.9" width="2.6" height="2.6" fill="#FFFFFF"/><rect x="73.36" y="512.93" width="2.6" height="2.6" fill="#FFFFFF"/><line x1="72.17" y1="503.91" x2="70.05" y2="497.42" stroke="#E4E4E4" stroke-width="0.6"/><line x1="70.05" y1="497.42" x2="65.6" y2="492.23" stroke="#E4E4E4" stroke-width="0.6"/><line x1="65.6" y1="492.23" x2="59.51" y2="489.15" stroke="#E4E4E4" stroke-width="0.6"/><line x1="59.51" y1="489.15" x2="52.71" y2="488.63" stroke="#E4E4E4" stroke-width="0.6"/><line x1="52.71" y1="488.63" x2="46.22" y2="490.75" stroke="#E4E4E4" stroke-width="0.6"/><line x1="46.22" y1="490.75" x2="41.03" y2="495.2" stroke="#E4E4E4" stroke-width="0.6"/><line x1="41.03" y1="495.2" x2="37.95" y2="501.29" stroke="#E4E4E4" stroke-width="0.6"/><line x1="37.95" y1="501.29" x2="37.43" y2="508.09" stroke="#E4E4E4" stroke-width="0.6"/><line x1="37.43" y1="508.09" x2="39.55" y2="514.58" stroke="#E4E4E4" stroke-width="0.6"/><line x1="39.55" y1="514.58" x2="44" y2="519.77" stroke="#E4E4E4" stroke-width="0.6"/><line x1="44" y1="519.77" x2="50.09" y2="522.85" stroke="#E4E4E4" stroke-width="0.6"/><line x1="50.09" y1="522.85" x2="56.89" y2="523.37" stroke="#E4E4E4" stroke-width="0.6"/><line x1="56.89" y1="523.37" x2="63.38" y2="521.25" stroke="#E4E4E4" stroke-width="0.6"/><line x1="63.38" y1="521.25" x2="68.57" y2="516.8" stroke="#E4E4E4" stroke-width="0.6"/><line x1="68.57" y1="516.8" x2="71.65" y2="510.71" stroke="#E4E4E4" stroke-width="0.6"/><line x1="71.65" y1="510.71" x2="72.17" y2="503.91" stroke="#E4E4E4" stroke-width="0.6"/><rect x="70.87" y="502.61" width="2.6" height="2.6" fill="#FFFFFF"/><rect x="68.75" y="496.12" width="2.6" height="2.6" fill="#FFFFFF"/><rect x="64.3" y="490.93" width="2.6" height="2.6" fill="#FFFFFF"/><rect x="58.21" y="487.85" width="2.6" height="2.6" fill="#FFFFFF"/><rect x="51.41" y="487.33" width="2.6" height="2.6" fill="#FFFFFF"/><rect x="44.92" y="489.45" width="2.6" height="2.6" fill="#FFFFFF"/><rect x="39.73" y="493.9" width="2.6" height="2.6" fill="#FFFFFF"/><rect x="36.65" y="499.99" width="2.6" height="2.6" fill="#FFFFFF"/><rect x="36.13" y="506.79" width="2.6" height="2.6" fill="#FFFFFF"/><rect x="38.25" y="513.28" width="2.6" height="2.6" fill="#FFFFFF"/><rect x="42.7" y="518.47" width="2.6" height="2.6" fill="#FFFFFF"/><rect x="48.79" y="521.55" width="2.6" height="2.6" fill="#FFFFFF"/><rect x="55.59" y="522.07" width="2.6" height="2.6" fill="#FFFFFF"/><rect x="62.08" y="519.95" width="2.6" height="2.6" fill="#FFFFFF"/><rect x="67.27" y="515.5" width="2.6" height="2.6" fill="#FFFFFF"/><rect x="70.35" y="509.41" width="2.6" height="2.6" fill="#FFFFFF"/><line x1="68.28" y1="505.33" x2="67" y2="500.22" stroke="#E4E4E4" stroke-width="0.6"/><line x1="67" y1="500.22" x2="63.86" y2="495.99" stroke="#E4E4E4" stroke-width="0.6"/><line x1="63.86" y1="495.99" x2="59.34" y2="493.29" stroke="#E4E4E4" stroke-width="0.6"/><line x1="59.34" y1="493.29" x2="54.13" y2="492.52" stroke="#E4E4E4" stroke-width="0.6"/><line x1="54.13" y1="492.52" x2="49.02" y2="493.8" stroke="#E4E4E4" stroke-width="0.6"/><line x1="49.02" y1="493.8" x2="44.79" y2="496.94" stroke="#E4E4E4" stroke-width="0.6"/><line x1="44.79" y1="496.94" x2="42.09" y2="501.46" stroke="#E4E4E4" stroke-width="0.6"/><line x1="42.09" y1="501.46" x2="41.32" y2="506.67" stroke="#E4E4E4" stroke-width="0.6"/><line x1="41.32" y1="506.67" x2="42.6" y2="511.78" stroke="#E4E4E4" stroke-width="0.6"/><line x1="42.6" y1="511.78" x2="45.74" y2="516.01" stroke="#E4E4E4" stroke-width="0.6"/><line x1="45.74" y1="516.01" x2="50.26" y2="518.71" stroke="#E4E4E4" stroke-width="0.6"/><line x1="50.26" y1="518.71" x2="55.47" y2="519.48" stroke="#E4E4E4" stroke-width="0.6"/><line x1="55.47" y1="519.48" x2="60.58" y2="518.2" stroke="#E4E4E4" stroke-width="0.6"/><line x1="60.58" y1="518.2" x2="64.81" y2="515.06" stroke="#E4E4E4" stroke-width="0.6"/><line x1="64.81" y1="515.06" x2="67.51" y2="510.54" stroke="#E4E4E4" stroke-width="0.6"/><line x1="67.51" y1="510.54" x2="68.28" y2="505.33" stroke="#E4E4E4" stroke-width="0.6"/><rect x="67.08" y="504.13" width="2.4" height="2.4" fill="#FFFFFF"/><rect x="65.8" y="499.02" width="2.4" height="2.4" fill="#FFFFFF"/><rect x="62.66" y="494.79" width="2.4" height="2.4" fill="#FFFFFF"/><rect x="58.14" y="492.09" width="2.4" height="2.4" fill="#FFFFFF"/><rect x="52.93" y="491.32" width="2.4" height="2.4" fill="#FFFFFF"/><rect x="47.82" y="492.6" width="2.4" height="2.4" fill="#FFFFFF"/><rect x="43.59" y="495.74" width="2.4" height="2.4" fill="#FFFFFF"/><rect x="40.89" y="500.26" width="2.4" height="2.4" fill="#FFFFFF"/><rect x="40.12" y="505.47" width="2.4" height="2.4" fill="#FFFFFF"/><rect x="41.4" y="510.58" width="2.4" height="2.4" fill="#FFFFFF"/><rect x="44.54" y="514.81" width="2.4" height="2.4" fill="#FFFFFF"/><rect x="49.06" y="517.51" width="2.4" height="2.4" fill="#FFFFFF"/><rect x="54.27" y="518.28" width="2.4" height="2.4" fill="#FFFFFF"/><rect x="59.38" y="517" width="2.4" height="2.4" fill="#FFFFFF"/><rect x="63.61" y="513.86" width="2.4" height="2.4" fill="#FFFFFF"/><rect x="66.31" y="509.34" width="2.4" height="2.4" fill="#FFFFFF"/><line x1="64.6" y1="504.01" x2="63.09" y2="500.41" stroke="#E4E4E4" stroke-width="0.6"/><line x1="63.09" y1="500.41" x2="60.33" y2="497.67" stroke="#E4E4E4" stroke-width="0.6"/><line x1="60.33" y1="497.67" x2="56.72" y2="496.19" stroke="#E4E4E4" stroke-width="0.6"/><line x1="56.72" y1="496.19" x2="52.81" y2="496.2" stroke="#E4E4E4" stroke-width="0.6"/><line x1="52.81" y1="496.2" x2="49.21" y2="497.71" stroke="#E4E4E4" stroke-width="0.6"/><line x1="49.21" y1="497.71" x2="46.47" y2="500.47" stroke="#E4E4E4" stroke-width="0.6"/><line x1="46.47" y1="500.47" x2="44.99" y2="504.08" stroke="#E4E4E4" stroke-width="0.6"/><line x1="44.99" y1="504.08" x2="45" y2="507.99" stroke="#E4E4E4" stroke-width="0.6"/><line x1="45" y1="507.99" x2="46.51" y2="511.59" stroke="#E4E4E4" stroke-width="0.6"/><line x1="46.51" y1="511.59" x2="49.27" y2="514.33" stroke="#E4E4E4" stroke-width="0.6"/><line x1="49.27" y1="514.33" x2="52.88" y2="515.81" stroke="#E4E4E4" stroke-width="0.6"/><line x1="52.88" y1="515.81" x2="56.79" y2="515.8" stroke="#E4E4E4" stroke-width="0.6"/><line x1="56.79" y1="515.8" x2="60.39" y2="514.29" stroke="#E4E4E4" stroke-width="0.6"/><line x1="60.39" y1="514.29" x2="63.13" y2="511.53" stroke="#E4E4E4" stroke-width="0.6"/><line x1="63.13" y1="511.53" x2="64.61" y2="507.92" stroke="#E4E4E4" stroke-width="0.6"/><line x1="64.61" y1="507.92" x2="64.6" y2="504.01" stroke="#E4E4E4" stroke-width="0.6"/><rect x="63.5" y="502.91" width="2.2" height="2.2" fill="#FFFFFF"/><rect x="61.99" y="499.31" width="2.2" height="2.2" fill="#FFFFFF"/><rect x="59.23" y="496.57" width="2.2" height="2.2" fill="#FFFFFF"/><rect x="55.62" y="495.09" width="2.2" height="2.2" fill="#FFFFFF"/><rect x="51.71" y="495.1" width="2.2" height="2.2" fill="#FFFFFF"/><rect x="48.11" y="496.61" width="2.2" height="2.2" fill="#FFFFFF"/><rect x="45.37" y="499.37" width="2.2" height="2.2" fill="#FFFFFF"/><rect x="43.89" y="502.98" width="2.2" height="2.2" fill="#FFFFFF"/><rect x="43.9" y="506.89" width="2.2" height="2.2" fill="#FFFFFF"/><rect x="45.41" y="510.49" width="2.2" height="2.2" fill="#FFFFFF"/><rect x="48.17" y="513.23" width="2.2" height="2.2" fill="#FFFFFF"/><rect x="51.78" y="514.71" width="2.2" height="2.2" fill="#FFFFFF"/><rect x="55.69" y="514.7" width="2.2" height="2.2" fill="#FFFFFF"/><rect x="59.29" y="513.19" width="2.2" height="2.2" fill="#FFFFFF"/><rect x="62.03" y="510.43" width="2.2" height="2.2" fill="#FFFFFF"/><rect x="63.51" y="506.82" width="2.2" height="2.2" fill="#FFFFFF"/><line x1="61.27" y1="505.35" x2="60.53" y2="502.93" stroke="#E4E4E4" stroke-width="0.6"/><line x1="60.53" y1="502.93" x2="58.91" y2="500.97" stroke="#E4E4E4" stroke-width="0.6"/><line x1="58.91" y1="500.97" x2="56.68" y2="499.78" stroke="#E4E4E4" stroke-width="0.6"/><line x1="56.68" y1="499.78" x2="54.15" y2="499.53" stroke="#E4E4E4" stroke-width="0.6"/><line x1="54.15" y1="499.53" x2="51.73" y2="500.27" stroke="#E4E4E4" stroke-width="0.6"/><line x1="51.73" y1="500.27" x2="49.77" y2="501.89" stroke="#E4E4E4" stroke-width="0.6"/><line x1="49.77" y1="501.89" x2="48.58" y2="504.12" stroke="#E4E4E4" stroke-width="0.6"/><line x1="48.58" y1="504.12" x2="48.33" y2="506.65" stroke="#E4E4E4" stroke-width="0.6"/><line x1="48.33" y1="506.65" x2="49.07" y2="509.07" stroke="#E4E4E4" stroke-width="0.6"/><line x1="49.07" y1="509.07" x2="50.69" y2="511.03" stroke="#E4E4E4" stroke-width="0.6"/><line x1="50.69" y1="511.03" x2="52.92" y2="512.22" stroke="#E4E4E4" stroke-width="0.6"/><line x1="52.92" y1="512.22" x2="55.45" y2="512.47" stroke="#E4E4E4" stroke-width="0.6"/><line x1="55.45" y1="512.47" x2="57.87" y2="511.73" stroke="#E4E4E4" stroke-width="0.6"/><line x1="57.87" y1="511.73" x2="59.83" y2="510.11" stroke="#E4E4E4" stroke-width="0.6"/><line x1="59.83" y1="510.11" x2="61.02" y2="507.88" stroke="#E4E4E4" stroke-width="0.6"/><line x1="61.02" y1="507.88" x2="61.27" y2="505.35" stroke="#E4E4E4" stroke-width="0.6"/><rect x="60.37" y="504.45" width="1.8" height="1.8" fill="#FFFFFF"/><rect x="59.63" y="502.03" width="1.8" height="1.8" fill="#FFFFFF"/><rect x="58.01" y="500.07" width="1.8" height="1.8" fill="#FFFFFF"/><rect x="55.78" y="498.88" width="1.8" height="1.8" fill="#FFFFFF"/><rect x="53.25" y="498.63" width="1.8" height="1.8" fill="#FFFFFF"/><rect x="50.83" y="499.37" width="1.8" height="1.8" fill="#FFFFFF"/><rect x="48.87" y="500.99" width="1.8" height="1.8" fill="#FFFFFF"/><rect x="47.68" y="503.22" width="1.8" height="1.8" fill="#FFFFFF"/><rect x="47.43" y="505.75" width="1.8" height="1.8" fill="#FFFFFF"/><rect x="48.17" y="508.17" width="1.8" height="1.8" fill="#FFFFFF"/><rect x="49.79" y="510.13" width="1.8" height="1.8" fill="#FFFFFF"/><rect x="52.02" y="511.32" width="1.8" height="1.8" fill="#FFFFFF"/><rect x="54.55" y="511.57" width="1.8" height="1.8" fill="#FFFFFF"/><rect x="56.97" y="510.83" width="1.8" height="1.8" fill="#FFFFFF"/><rect x="58.93" y="509.21" width="1.8" height="1.8" fill="#FFFFFF"/><rect x="60.12" y="506.98" width="1.8" height="1.8" fill="#FFFFFF"/><circle cx="54.8" cy="506" r="4" fill="#C8C8C8"/><rect x="210.7" y="504.9" width="2.2" height="2.2" fill="#FFFFFF"/><rect x="198.75" y="444.82" width="2.2" height="2.2" fill="#FFFFFF"/><rect x="164.72" y="393.88" width="2.2" height="2.2" fill="#FFFFFF"/><rect x="113.78" y="359.85" width="2.2" height="2.2" fill="#FFFFFF"/><rect x="53.7" y="347.9" width="2.2" height="2.2" fill="#FFFFFF"/><rect x="-6.38" y="359.85" width="2.2" height="2.2" fill="#FFFFFF"/><rect x="-57.32" y="393.88" width="2.2" height="2.2" fill="#FFFFFF"/><rect x="-91.35" y="444.82" width="2.2" height="2.2" fill="#FFFFFF"/><rect x="-103.3" y="504.9" width="2.2" height="2.2" fill="#FFFFFF"/><rect x="-91.35" y="564.98" width="2.2" height="2.2" fill="#FFFFFF"/><rect x="-57.32" y="615.92" width="2.2" height="2.2" fill="#FFFFFF"/><rect x="-6.38" y="649.95" width="2.2" height="2.2" fill="#FFFFFF"/><rect x="53.7" y="661.9" width="2.2" height="2.2" fill="#FFFFFF"/><rect x="113.78" y="649.95" width="2.2" height="2.2" fill="#FFFFFF"/><rect x="164.72" y="615.92" width="2.2" height="2.2" fill="#FFFFFF"/><rect x="198.75" y="564.98" width="2.2" height="2.2" fill="#FFFFFF"/><rect x="172.7" y="504.9" width="2.2" height="2.2" fill="#FFFFFF"/><rect x="163.64" y="459.36" width="2.2" height="2.2" fill="#FFFFFF"/><rect x="137.85" y="420.75" width="2.2" height="2.2" fill="#FFFFFF"/><rect x="99.24" y="394.96" width="2.2" height="2.2" fill="#FFFFFF"/><rect x="53.7" y="385.9" width="2.2" height="2.2" fill="#FFFFFF"/><rect x="8.16" y="394.96" width="2.2" height="2.2" fill="#FFFFFF"/><rect x="-30.45" y="420.75" width="2.2" height="2.2" fill="#FFFFFF"/><rect x="-56.24" y="459.36" width="2.2" height="2.2" fill="#FFFFFF"/><rect x="-65.3" y="504.9" width="2.2" height="2.2" fill="#FFFFFF"/><rect x="-56.24" y="550.44" width="2.2" height="2.2" fill="#FFFFFF"/><rect x="-30.45" y="589.05" width="2.2" height="2.2" fill="#FFFFFF"/><rect x="8.16" y="614.84" width="2.2" height="2.2" fill="#FFFFFF"/><rect x="53.7" y="623.9" width="2.2" height="2.2" fill="#FFFFFF"/><rect x="99.24" y="614.84" width="2.2" height="2.2" fill="#FFFFFF"/><rect x="137.85" y="589.05" width="2.2" height="2.2" fill="#FFFFFF"/><rect x="163.64" y="550.44" width="2.2" height="2.2" fill="#FFFFFF"/><rect x="148.7" y="504.9" width="2.2" height="2.2" fill="#FFFFFF"/><rect x="141.47" y="468.55" width="2.2" height="2.2" fill="#FFFFFF"/><rect x="120.88" y="437.72" width="2.2" height="2.2" fill="#FFFFFF"/><rect x="90.05" y="417.13" width="2.2" height="2.2" fill="#FFFFFF"/><rect x="53.7" y="409.9" width="2.2" height="2.2" fill="#FFFFFF"/><rect x="17.35" y="417.13" width="2.2" height="2.2" fill="#FFFFFF"/><rect x="-13.48" y="437.72" width="2.2" height="2.2" fill="#FFFFFF"/><rect x="-34.07" y="468.55" width="2.2" height="2.2" fill="#FFFFFF"/><rect x="-41.3" y="504.9" width="2.2" height="2.2" fill="#FFFFFF"/><rect x="-34.07" y="541.25" width="2.2" height="2.2" fill="#FFFFFF"/><rect x="-13.48" y="572.08" width="2.2" height="2.2" fill="#FFFFFF"/><rect x="17.35" y="592.67" width="2.2" height="2.2" fill="#FFFFFF"/><rect x="53.7" y="599.9" width="2.2" height="2.2" fill="#FFFFFF"/><rect x="90.05" y="592.67" width="2.2" height="2.2" fill="#FFFFFF"/><rect x="120.88" y="572.08" width="2.2" height="2.2" fill="#FFFFFF"/><rect x="141.47" y="541.25" width="2.2" height="2.2" fill="#FFFFFF"/><rect x="113.7" y="504.9" width="2.2" height="2.2" fill="#FFFFFF"/><rect x="109.13" y="481.94" width="2.2" height="2.2" fill="#FFFFFF"/><rect x="96.13" y="462.47" width="2.2" height="2.2" fill="#FFFFFF"/><rect x="76.66" y="449.47" width="2.2" height="2.2" fill="#FFFFFF"/><rect x="53.7" y="444.9" width="2.2" height="2.2" fill="#FFFFFF"/><rect x="30.74" y="449.47" width="2.2" height="2.2" fill="#FFFFFF"/><rect x="11.27" y="462.47" width="2.2" height="2.2" fill="#FFFFFF"/><rect x="-1.73" y="481.94" width="2.2" height="2.2" fill="#FFFFFF"/><rect x="-6.3" y="504.9" width="2.2" height="2.2" fill="#FFFFFF"/><rect x="-1.73" y="527.86" width="2.2" height="2.2" fill="#FFFFFF"/><rect x="11.27" y="547.33" width="2.2" height="2.2" fill="#FFFFFF"/><rect x="30.74" y="560.33" width="2.2" height="2.2" fill="#FFFFFF"/><rect x="53.7" y="564.9" width="2.2" height="2.2" fill="#FFFFFF"/><rect x="76.66" y="560.33" width="2.2" height="2.2" fill="#FFFFFF"/><rect x="96.13" y="547.33" width="2.2" height="2.2" fill="#FFFFFF"/><rect x="109.13" y="527.86" width="2.2" height="2.2" fill="#FFFFFF"/><line x1="54.5" y1="426.5" x2="37" y2="431.19" stroke="#E4E4E4" stroke-width="0.9"/><line x1="37" y1="431.19" x2="24.19" y2="444" stroke="#E4E4E4" stroke-width="0.9"/><line x1="24.19" y1="444" x2="19.5" y2="461.5" stroke="#E4E4E4" stroke-width="0.9"/><line x1="19.5" y1="461.5" x2="24.19" y2="479" stroke="#E4E4E4" stroke-width="0.9"/><line x1="24.19" y1="479" x2="37" y2="491.81" stroke="#E4E4E4" stroke-width="0.9"/><line x1="37" y1="491.81" x2="54.5" y2="496.5" stroke="#E4E4E4" stroke-width="0.9"/><line x1="54.5" y1="496.5" x2="72" y2="491.81" stroke="#E4E4E4" stroke-width="0.9"/><line x1="72" y1="491.81" x2="84.81" y2="479" stroke="#E4E4E4" stroke-width="0.9"/><line x1="84.81" y1="479" x2="89.5" y2="461.5" stroke="#E4E4E4" stroke-width="0.9"/><line x1="89.5" y1="461.5" x2="84.81" y2="444" stroke="#E4E4E4" stroke-width="0.9"/><line x1="84.81" y1="444" x2="72" y2="431.19" stroke="#E4E4E4" stroke-width="0.9"/><line x1="72" y1="431.19" x2="54.5" y2="426.5" stroke="#E4E4E4" stroke-width="0.9"/><line x1="54.5" y1="431.5" x2="39.5" y2="435.52" stroke="#E4E4E4" stroke-width="0.7"/><line x1="39.5" y1="435.52" x2="28.52" y2="446.5" stroke="#E4E4E4" stroke-width="0.7"/><line x1="28.52" y1="446.5" x2="24.5" y2="461.5" stroke="#E4E4E4" stroke-width="0.7"/><line x1="24.5" y1="461.5" x2="28.52" y2="476.5" stroke="#E4E4E4" stroke-width="0.7"/><line x1="28.52" y1="476.5" x2="39.5" y2="487.48" stroke="#E4E4E4" stroke-width="0.7"/><line x1="39.5" y1="487.48" x2="54.5" y2="491.5" stroke="#E4E4E4" stroke-width="0.7"/><line x1="54.5" y1="491.5" x2="69.5" y2="487.48" stroke="#E4E4E4" stroke-width="0.7"/><line x1="69.5" y1="487.48" x2="80.48" y2="476.5" stroke="#E4E4E4" stroke-width="0.7"/><line x1="80.48" y1="476.5" x2="84.5" y2="461.5" stroke="#E4E4E4" stroke-width="0.7"/><line x1="84.5" y1="461.5" x2="80.48" y2="446.5" stroke="#E4E4E4" stroke-width="0.7"/><line x1="80.48" y1="446.5" x2="69.5" y2="435.52" stroke="#E4E4E4" stroke-width="0.7"/><line x1="69.5" y1="435.52" x2="54.5" y2="431.5" stroke="#E4E4E4" stroke-width="0.7"/><line x1="54.5" y1="444.5" x2="46" y2="446.78" stroke="#E4E4E4" stroke-width="0.7"/><line x1="46" y1="446.78" x2="39.78" y2="453" stroke="#E4E4E4" stroke-width="0.7"/><line x1="39.78" y1="453" x2="37.5" y2="461.5" stroke="#E4E4E4" stroke-width="0.7"/><line x1="37.5" y1="461.5" x2="39.78" y2="470" stroke="#E4E4E4" stroke-width="0.7"/><line x1="39.78" y1="470" x2="46" y2="476.22" stroke="#E4E4E4" stroke-width="0.7"/><line x1="46" y1="476.22" x2="54.5" y2="478.5" stroke="#E4E4E4" stroke-width="0.7"/><line x1="54.5" y1="478.5" x2="63" y2="476.22" stroke="#E4E4E4" stroke-width="0.7"/><line x1="63" y1="476.22" x2="69.22" y2="470" stroke="#E4E4E4" stroke-width="0.7"/><line x1="69.22" y1="470" x2="71.5" y2="461.5" stroke="#E4E4E4" stroke-width="0.7"/><line x1="71.5" y1="461.5" x2="69.22" y2="453" stroke="#E4E4E4" stroke-width="0.7"/><line x1="69.22" y1="453" x2="63" y2="446.78" stroke="#E4E4E4" stroke-width="0.7"/><line x1="63" y1="446.78" x2="54.5" y2="444.5" stroke="#E4E4E4" stroke-width="0.7"/><line x1="54.5" y1="426.5" x2="39.5" y2="435.52" stroke="#E4E4E4" stroke-width="0.6"/><line x1="54.5" y1="431.5" x2="54.5" y2="444.5" stroke="#E4E4E4" stroke-width="0.6"/><line x1="54.5" y1="431.5" x2="46" y2="446.78" stroke="#E4E4E4" stroke-width="0.6"/><line x1="54.5" y1="461.5" x2="54.5" y2="444.5" stroke="#E4E4E4" stroke-width="0.6"/><line x1="37" y1="431.19" x2="28.52" y2="446.5" stroke="#E4E4E4" stroke-width="0.6"/><line x1="39.5" y1="435.52" x2="46" y2="446.78" stroke="#E4E4E4" stroke-width="0.6"/><line x1="39.5" y1="435.52" x2="39.78" y2="453" stroke="#E4E4E4" stroke-width="0.6"/><line x1="54.5" y1="461.5" x2="46" y2="446.78" stroke="#E4E4E4" stroke-width="0.6"/><line x1="24.19" y1="444" x2="24.5" y2="461.5" stroke="#E4E4E4" stroke-width="0.6"/><line x1="28.52" y1="446.5" x2="39.78" y2="453" stroke="#E4E4E4" stroke-width="0.6"/><line x1="28.52" y1="446.5" x2="37.5" y2="461.5" stroke="#E4E4E4" stroke-width="0.6"/><line x1="54.5" y1="461.5" x2="39.78" y2="453" stroke="#E4E4E4" stroke-width="0.6"/><line x1="19.5" y1="461.5" x2="28.52" y2="476.5" stroke="#E4E4E4" stroke-width="0.6"/><line x1="24.5" y1="461.5" x2="37.5" y2="461.5" stroke="#E4E4E4" stroke-width="0.6"/><line x1="24.5" y1="461.5" x2="39.78" y2="470" stroke="#E4E4E4" stroke-width="0.6"/><line x1="54.5" y1="461.5" x2="37.5" y2="461.5" stroke="#E4E4E4" stroke-width="0.6"/><line x1="24.19" y1="479" x2="39.5" y2="487.48" stroke="#E4E4E4" stroke-width="0.6"/><line x1="28.52" y1="476.5" x2="39.78" y2="470" stroke="#E4E4E4" stroke-width="0.6"/><line x1="28.52" y1="476.5" x2="46" y2="476.22" stroke="#E4E4E4" stroke-width="0.6"/><line x1="54.5" y1="461.5" x2="39.78" y2="470" stroke="#E4E4E4" stroke-width="0.6"/><line x1="37" y1="491.81" x2="54.5" y2="491.5" stroke="#E4E4E4" stroke-width="0.6"/><line x1="39.5" y1="487.48" x2="46" y2="476.22" stroke="#E4E4E4" stroke-width="0.6"/><line x1="39.5" y1="487.48" x2="54.5" y2="478.5" stroke="#E4E4E4" stroke-width="0.6"/><line x1="54.5" y1="461.5" x2="46" y2="476.22" stroke="#E4E4E4" stroke-width="0.6"/><line x1="54.5" y1="496.5" x2="69.5" y2="487.48" stroke="#E4E4E4" stroke-width="0.6"/><line x1="54.5" y1="491.5" x2="54.5" y2="478.5" stroke="#E4E4E4" stroke-width="0.6"/><line x1="54.5" y1="491.5" x2="63" y2="476.22" stroke="#E4E4E4" stroke-width="0.6"/><line x1="54.5" y1="461.5" x2="54.5" y2="478.5" stroke="#E4E4E4" stroke-width="0.6"/><line x1="72" y1="491.81" x2="80.48" y2="476.5" stroke="#E4E4E4" stroke-width="0.6"/><line x1="69.5" y1="487.48" x2="63" y2="476.22" stroke="#E4E4E4" stroke-width="0.6"/><line x1="69.5" y1="487.48" x2="69.22" y2="470" stroke="#E4E4E4" stroke-width="0.6"/><line x1="54.5" y1="461.5" x2="63" y2="476.22" stroke="#E4E4E4" stroke-width="0.6"/><line x1="84.81" y1="479" x2="84.5" y2="461.5" stroke="#E4E4E4" stroke-width="0.6"/><line x1="80.48" y1="476.5" x2="69.22" y2="470" stroke="#E4E4E4" stroke-width="0.6"/><line x1="80.48" y1="476.5" x2="71.5" y2="461.5" stroke="#E4E4E4" stroke-width="0.6"/><line x1="54.5" y1="461.5" x2="69.22" y2="470" stroke="#E4E4E4" stroke-width="0.6"/><line x1="89.5" y1="461.5" x2="80.48" y2="446.5" stroke="#E4E4E4" stroke-width="0.6"/><line x1="84.5" y1="461.5" x2="71.5" y2="461.5" stroke="#E4E4E4" stroke-width="0.6"/><line x1="84.5" y1="461.5" x2="69.22" y2="453" stroke="#E4E4E4" stroke-width="0.6"/><line x1="54.5" y1="461.5" x2="71.5" y2="461.5" stroke="#E4E4E4" stroke-width="0.6"/><line x1="84.81" y1="444" x2="69.5" y2="435.52" stroke="#E4E4E4" stroke-width="0.6"/><line x1="80.48" y1="446.5" x2="69.22" y2="453" stroke="#E4E4E4" stroke-width="0.6"/><line x1="80.48" y1="446.5" x2="63" y2="446.78" stroke="#E4E4E4" stroke-width="0.6"/><line x1="54.5" y1="461.5" x2="69.22" y2="453" stroke="#E4E4E4" stroke-width="0.6"/><line x1="72" y1="431.19" x2="54.5" y2="431.5" stroke="#E4E4E4" stroke-width="0.6"/><line x1="69.5" y1="435.52" x2="63" y2="446.78" stroke="#E4E4E4" stroke-width="0.6"/><line x1="69.5" y1="435.52" x2="54.5" y2="444.5" stroke="#E4E4E4" stroke-width="0.6"/><line x1="54.5" y1="461.5" x2="63" y2="446.78" stroke="#E4E4E4" stroke-width="0.6"/><rect x="53.3" y="425.3" width="2.4" height="2.4" fill="#FFFFFF"/><rect x="35.8" y="429.99" width="2.4" height="2.4" fill="#FFFFFF"/><rect x="22.99" y="442.8" width="2.4" height="2.4" fill="#FFFFFF"/><rect x="18.3" y="460.3" width="2.4" height="2.4" fill="#FFFFFF"/><rect x="22.99" y="477.8" width="2.4" height="2.4" fill="#FFFFFF"/><rect x="35.8" y="490.61" width="2.4" height="2.4" fill="#FFFFFF"/><rect x="53.3" y="495.3" width="2.4" height="2.4" fill="#FFFFFF"/><rect x="70.8" y="490.61" width="2.4" height="2.4" fill="#FFFFFF"/><rect x="83.61" y="477.8" width="2.4" height="2.4" fill="#FFFFFF"/><rect x="88.3" y="460.3" width="2.4" height="2.4" fill="#FFFFFF"/><rect x="83.61" y="442.8" width="2.4" height="2.4" fill="#FFFFFF"/><rect x="70.8" y="429.99" width="2.4" height="2.4" fill="#FFFFFF"/><rect x="53.3" y="430.3" width="2.4" height="2.4" fill="#FFFFFF"/><rect x="38.3" y="434.32" width="2.4" height="2.4" fill="#FFFFFF"/><rect x="27.32" y="445.3" width="2.4" height="2.4" fill="#FFFFFF"/><rect x="23.3" y="460.3" width="2.4" height="2.4" fill="#FFFFFF"/><rect x="27.32" y="475.3" width="2.4" height="2.4" fill="#FFFFFF"/><rect x="38.3" y="486.28" width="2.4" height="2.4" fill="#FFFFFF"/><rect x="53.3" y="490.3" width="2.4" height="2.4" fill="#FFFFFF"/><rect x="68.3" y="486.28" width="2.4" height="2.4" fill="#FFFFFF"/><rect x="79.28" y="475.3" width="2.4" height="2.4" fill="#FFFFFF"/><rect x="83.3" y="460.3" width="2.4" height="2.4" fill="#FFFFFF"/><rect x="79.28" y="445.3" width="2.4" height="2.4" fill="#FFFFFF"/><rect x="68.3" y="434.32" width="2.4" height="2.4" fill="#FFFFFF"/><rect x="53.3" y="443.3" width="2.4" height="2.4" fill="#FFFFFF"/><rect x="44.8" y="445.58" width="2.4" height="2.4" fill="#FFFFFF"/><rect x="38.58" y="451.8" width="2.4" height="2.4" fill="#FFFFFF"/><rect x="36.3" y="460.3" width="2.4" height="2.4" fill="#FFFFFF"/><rect x="38.58" y="468.8" width="2.4" height="2.4" fill="#FFFFFF"/><rect x="44.8" y="475.02" width="2.4" height="2.4" fill="#FFFFFF"/><rect x="53.3" y="477.3" width="2.4" height="2.4" fill="#FFFFFF"/><rect x="61.8" y="475.02" width="2.4" height="2.4" fill="#FFFFFF"/><rect x="68.02" y="468.8" width="2.4" height="2.4" fill="#FFFFFF"/><rect x="70.3" y="460.3" width="2.4" height="2.4" fill="#FFFFFF"/><rect x="68.02" y="451.8" width="2.4" height="2.4" fill="#FFFFFF"/><rect x="61.8" y="445.58" width="2.4" height="2.4" fill="#FFFFFF"/><rect x="53.3" y="460.3" width="2.4" height="2.4" fill="#FFFFFF"/><rect x="175" y="505" width="77" height="1.6" fill="#F0F040"/><rect x="184" y="505" width="22" height="1.6" fill="#D8D8C8"/></svg>
<svg class="a" style="left:257px;top:344px" width="398" height="311" viewBox="257 344 398 311"><line x1="256" y1="342.5" x2="656" y2="346" stroke="#537083" stroke-width="1"/><line x1="256" y1="346.3" x2="656" y2="355.5" stroke="#537083" stroke-width="1"/><line x1="256" y1="358.7" x2="656" y2="368" stroke="#537083" stroke-width="1"/><line x1="256" y1="375.2" x2="656" y2="385.5" stroke="#537083" stroke-width="1"/><line x1="256" y1="398.5" x2="656" y2="410.5" stroke="#537083" stroke-width="1"/><line x1="256" y1="434" x2="656" y2="452" stroke="#537083" stroke-width="1"/><line x1="256" y1="503" x2="656" y2="528" stroke="#537083" stroke-width="1"/><line x1="256" y1="350.5" x2="314" y2="343" stroke="#537083" stroke-width="1"/><line x1="256" y1="382.7" x2="416" y2="343" stroke="#537083" stroke-width="1"/><line x1="256" y1="460.5" x2="540" y2="343" stroke="#537083" stroke-width="1"/><line x1="652" y1="343" x2="456" y2="655" stroke="#537083" stroke-width="1"/><rect x="428" y="344" width="2" height="137" fill="#20C4DC"/><defs><linearGradient id="gin" x1="0" x2="1"><stop offset="0" stop-color="#600070"/><stop offset="0.12" stop-color="#B000C0"/><stop offset="0.35" stop-color="#F800F8"/><stop offset="0.72" stop-color="#FF00FF"/><stop offset="0.93" stop-color="#D800E0"/><stop offset="1" stop-color="#A800B0"/></linearGradient><linearGradient id="gout" x1="0" x2="1"><stop offset="0" stop-color="#600060"/><stop offset="0.2" stop-color="#9A009E"/><stop offset="0.5" stop-color="#BC00C0"/><stop offset="0.8" stop-color="#A800AC"/><stop offset="1" stop-color="#600068"/></linearGradient></defs><ellipse cx="428.5" cy="496.7" rx="69.5" ry="16.3" fill="url(#gin)"/><path d="M359 496.7 A 69.5 16.3 0 0 0 498 496.7 L 439 567.5 L 420 567.5 Z" fill="url(#gout)"/><line x1="496.66" y1="499.88" x2="486.29" y2="505.76" stroke="#FFD8FF" stroke-width="1.1"/><line x1="486.29" y1="505.76" x2="467.11" y2="510.25" stroke="#FFD8FF" stroke-width="1.1"/><line x1="467.11" y1="510.25" x2="442.06" y2="512.69" stroke="#FFD8FF" stroke-width="1.1"/><line x1="442.06" y1="512.69" x2="414.94" y2="512.69" stroke="#FFD8FF" stroke-width="1.1"/><line x1="414.94" y1="512.69" x2="389.89" y2="510.25" stroke="#FFD8FF" stroke-width="1.1"/><line x1="389.89" y1="510.25" x2="370.71" y2="505.76" stroke="#FFD8FF" stroke-width="1.1"/><line x1="370.71" y1="505.76" x2="360.34" y2="499.88" stroke="#FFD8FF" stroke-width="1.1"/><line x1="360.34" y1="499.88" x2="360.34" y2="493.52" stroke="#FFD8FF" stroke-width="1.1"/><line x1="360.34" y1="493.52" x2="370.71" y2="487.64" stroke="#FFD8FF" stroke-width="1.1"/><line x1="370.71" y1="487.64" x2="389.89" y2="483.15" stroke="#FFD8FF" stroke-width="1.1"/><line x1="389.89" y1="483.15" x2="414.94" y2="480.71" stroke="#FFD8FF" stroke-width="1.1"/><line x1="414.94" y1="480.71" x2="442.06" y2="480.71" stroke="#FFD8FF" stroke-width="1.1"/><line x1="442.06" y1="480.71" x2="467.11" y2="483.15" stroke="#FFD8FF" stroke-width="1.1"/><line x1="467.11" y1="483.15" x2="486.29" y2="487.64" stroke="#FFD8FF" stroke-width="1.1"/><line x1="486.29" y1="487.64" x2="496.66" y2="493.52" stroke="#FFD8FF" stroke-width="1.1"/><line x1="496.66" y1="493.52" x2="496.66" y2="499.88" stroke="#FFD8FF" stroke-width="1.1"/><line x1="496.66" y1="499.88" x2="438.82" y2="567.5" stroke="#FFD0FF" stroke-width="0.8"/><line x1="486.29" y1="505.76" x2="437.4" y2="567.5" stroke="#FFD0FF" stroke-width="0.8"/><line x1="467.11" y1="510.25" x2="434.78" y2="567.5" stroke="#FFD0FF" stroke-width="0.8"/><line x1="442.06" y1="512.69" x2="431.35" y2="567.5" stroke="#FFD0FF" stroke-width="0.8"/><line x1="414.94" y1="512.69" x2="427.65" y2="567.5" stroke="#FFD0FF" stroke-width="0.8"/><line x1="389.89" y1="510.25" x2="424.22" y2="567.5" stroke="#FFD0FF" stroke-width="0.8"/><line x1="370.71" y1="505.76" x2="421.6" y2="567.5" stroke="#FFD0FF" stroke-width="0.8"/><line x1="360.34" y1="499.88" x2="420.18" y2="567.5" stroke="#FFD0FF" stroke-width="0.8"/><line x1="360.34" y1="493.52" x2="420.18" y2="567.5" stroke="#FFD0FF" stroke-width="0.8"/><line x1="370.71" y1="487.64" x2="421.6" y2="567.5" stroke="#FFD0FF" stroke-width="0.8"/><line x1="389.89" y1="483.15" x2="424.22" y2="567.5" stroke="#FFD0FF" stroke-width="0.8"/><line x1="414.94" y1="480.71" x2="427.65" y2="567.5" stroke="#FFD0FF" stroke-width="0.8"/><line x1="442.06" y1="480.71" x2="431.35" y2="567.5" stroke="#FFD0FF" stroke-width="0.8"/><line x1="467.11" y1="483.15" x2="434.78" y2="567.5" stroke="#FFD0FF" stroke-width="0.8"/><line x1="486.29" y1="487.64" x2="437.4" y2="567.5" stroke="#FFD0FF" stroke-width="0.8"/><line x1="496.66" y1="493.52" x2="438.82" y2="567.5" stroke="#FFD0FF" stroke-width="0.8"/><rect x="495.56" y="498.78" width="2.2" height="2.2" fill="#FFFFFF"/><rect x="485.19" y="504.66" width="2.2" height="2.2" fill="#FFFFFF"/><rect x="466.01" y="509.15" width="2.2" height="2.2" fill="#FFFFFF"/><rect x="440.96" y="511.59" width="2.2" height="2.2" fill="#FFFFFF"/><rect x="413.84" y="511.59" width="2.2" height="2.2" fill="#FFFFFF"/><rect x="388.79" y="509.15" width="2.2" height="2.2" fill="#FFFFFF"/><rect x="369.61" y="504.66" width="2.2" height="2.2" fill="#FFFFFF"/><rect x="359.24" y="498.78" width="2.2" height="2.2" fill="#FFFFFF"/><rect x="359.24" y="492.42" width="2.2" height="2.2" fill="#FFFFFF"/><rect x="369.61" y="486.54" width="2.2" height="2.2" fill="#FFFFFF"/><rect x="388.79" y="482.05" width="2.2" height="2.2" fill="#FFFFFF"/><rect x="413.84" y="479.61" width="2.2" height="2.2" fill="#FFFFFF"/><rect x="440.96" y="479.61" width="2.2" height="2.2" fill="#FFFFFF"/><rect x="466.01" y="482.05" width="2.2" height="2.2" fill="#FFFFFF"/><rect x="485.19" y="486.54" width="2.2" height="2.2" fill="#FFFFFF"/><rect x="495.56" y="492.42" width="2.2" height="2.2" fill="#FFFFFF"/><path d="M419.5 567 L423 594 L424 616 L424 641 L424 655 L436 655 L436 641 L436.5 616 L437.5 594 L439.5 567 Z" fill="#C818C8"/><line x1="420.9" y1="567" x2="424.01" y2="594" stroke="#F6D0F6" stroke-width="0.8"/><line x1="423.9" y1="567" x2="426.19" y2="594" stroke="#F6D0F6" stroke-width="0.8"/><line x1="426.9" y1="567" x2="428.37" y2="594" stroke="#F6D0F6" stroke-width="0.8"/><line x1="429.9" y1="567" x2="430.54" y2="594" stroke="#F6D0F6" stroke-width="0.8"/><line x1="432.9" y1="567" x2="432.71" y2="594" stroke="#F6D0F6" stroke-width="0.8"/><line x1="435.9" y1="567" x2="434.89" y2="594" stroke="#F6D0F6" stroke-width="0.8"/><line x1="438.3" y1="567" x2="436.63" y2="594" stroke="#F6D0F6" stroke-width="0.8"/><line x1="423.5" y1="567" x2="428.8" y2="594" stroke="#E8A8E8" stroke-width="0.5"/><line x1="431.5" y1="567" x2="434.6" y2="594" stroke="#E8A8E8" stroke-width="0.5"/><line x1="424.01" y1="594" x2="424.88" y2="616" stroke="#F6D0F6" stroke-width="0.8"/><line x1="426.19" y1="594" x2="426.75" y2="616" stroke="#F6D0F6" stroke-width="0.8"/><line x1="428.37" y1="594" x2="428.62" y2="616" stroke="#F6D0F6" stroke-width="0.8"/><line x1="430.54" y1="594" x2="430.5" y2="616" stroke="#F6D0F6" stroke-width="0.8"/><line x1="432.71" y1="594" x2="432.38" y2="616" stroke="#F6D0F6" stroke-width="0.8"/><line x1="434.89" y1="594" x2="434.25" y2="616" stroke="#F6D0F6" stroke-width="0.8"/><line x1="436.63" y1="594" x2="435.75" y2="616" stroke="#F6D0F6" stroke-width="0.8"/><line x1="425.9" y1="594" x2="429" y2="616" stroke="#E8A8E8" stroke-width="0.5"/><line x1="431.7" y1="594" x2="434" y2="616" stroke="#E8A8E8" stroke-width="0.5"/><line x1="424.88" y1="616" x2="424.84" y2="641" stroke="#F6D0F6" stroke-width="0.8"/><line x1="426.75" y1="616" x2="426.64" y2="641" stroke="#F6D0F6" stroke-width="0.8"/><line x1="428.62" y1="616" x2="428.44" y2="641" stroke="#F6D0F6" stroke-width="0.8"/><line x1="430.5" y1="616" x2="430.24" y2="641" stroke="#F6D0F6" stroke-width="0.8"/><line x1="432.38" y1="616" x2="432.04" y2="641" stroke="#F6D0F6" stroke-width="0.8"/><line x1="434.25" y1="616" x2="433.84" y2="641" stroke="#F6D0F6" stroke-width="0.8"/><line x1="435.75" y1="616" x2="435.28" y2="641" stroke="#F6D0F6" stroke-width="0.8"/><line x1="426.5" y1="616" x2="428.8" y2="641" stroke="#E8A8E8" stroke-width="0.5"/><line x1="431.5" y1="616" x2="433.6" y2="641" stroke="#E8A8E8" stroke-width="0.5"/><line x1="424.84" y1="641" x2="424.84" y2="655" stroke="#F6D0F6" stroke-width="0.8"/><line x1="426.64" y1="641" x2="426.64" y2="655" stroke="#F6D0F6" stroke-width="0.8"/><line x1="428.44" y1="641" x2="428.44" y2="655" stroke="#F6D0F6" stroke-width="0.8"/><line x1="430.24" y1="641" x2="430.24" y2="655" stroke="#F6D0F6" stroke-width="0.8"/><line x1="432.04" y1="641" x2="432.04" y2="655" stroke="#F6D0F6" stroke-width="0.8"/><line x1="433.84" y1="641" x2="433.84" y2="655" stroke="#F6D0F6" stroke-width="0.8"/><line x1="435.28" y1="641" x2="435.28" y2="655" stroke="#F6D0F6" stroke-width="0.8"/><line x1="426.4" y1="641" x2="428.8" y2="655" stroke="#E8A8E8" stroke-width="0.5"/><line x1="431.2" y1="641" x2="433.6" y2="655" stroke="#E8A8E8" stroke-width="0.5"/><path d="M419.5 566 A 10.0 2 0 0 0 439.5 566" fill="none" stroke="#FFFFFF" stroke-width="1.4"/><path d="M423 593 A 7.25 2 0 0 0 437.5 593" fill="none" stroke="#FFFFFF" stroke-width="1.4"/><path d="M424 615 A 6.25 2 0 0 0 436.5 615" fill="none" stroke="#FFFFFF" stroke-width="1.4"/><path d="M424 640 A 6.0 2 0 0 0 436 640" fill="none" stroke="#FFFFFF" stroke-width="1.4"/><defs><radialGradient id="gsp" cx="0.4" cy="0.4" r="0.6"><stop offset="0" stop-color="#F00000"/><stop offset="0.7" stop-color="#C80000"/><stop offset="1" stop-color="#880000"/></radialGradient></defs><circle cx="433.5" cy="392.5" r="16.3" fill="url(#gsp)" stroke="#FFFFFF" stroke-width="1"/><line x1="426.97" y1="379.95" x2="432.33" y2="383.26" stroke="#FFC8C8" stroke-width="0.6"/><line x1="442.74" y1="379.95" x2="441.6" y2="383.26" stroke="#FFC8C8" stroke-width="0.6"/><line x1="441.6" y1="383.26" x2="447.78" y2="386.79" stroke="#FFC8C8" stroke-width="0.6"/><line x1="429.03" y1="401.41" x2="429.76" y2="407.12" stroke="#FFC8C8" stroke-width="0.6"/><line x1="432.33" y1="383.26" x2="441.6" y2="383.26" stroke="#FFC8C8" stroke-width="0.6"/><line x1="426.97" y1="379.95" x2="435.09" y2="377.75" stroke="#FFC8C8" stroke-width="0.6"/><line x1="418.45" y1="389.67" x2="420.81" y2="383.46" stroke="#FFC8C8" stroke-width="0.6"/><line x1="441.6" y1="383.26" x2="435.09" y2="377.75" stroke="#FFC8C8" stroke-width="0.6"/><line x1="423.51" y1="386.79" x2="420.81" y2="383.46" stroke="#FFC8C8" stroke-width="0.6"/><line x1="438.04" y1="389.33" x2="432.33" y2="383.26" stroke="#FFC8C8" stroke-width="0.6"/><line x1="436.37" y1="404.83" x2="437.86" y2="397.88" stroke="#FFC8C8" stroke-width="0.6"/><line x1="436.37" y1="404.83" x2="439.03" y2="407.12" stroke="#FFC8C8" stroke-width="0.6"/><line x1="435.09" y1="377.75" x2="437.24" y2="377.88" stroke="#FFC8C8" stroke-width="0.6"/><line x1="424.26" y1="405.05" x2="421.92" y2="401.54" stroke="#FFC8C8" stroke-width="0.6"/><line x1="423.51" y1="386.79" x2="430.02" y2="392.3" stroke="#FFC8C8" stroke-width="0.6"/><line x1="445.02" y1="392.3" x2="447.78" y2="386.79" stroke="#FFC8C8" stroke-width="0.6"/><line x1="438.04" y1="389.33" x2="437.86" y2="397.88" stroke="#FFC8C8" stroke-width="0.6"/><line x1="430.02" y1="392.3" x2="432.33" y2="383.26" stroke="#FFC8C8" stroke-width="0.6"/><line x1="445.02" y1="392.3" x2="437.86" y2="397.88" stroke="#FFC8C8" stroke-width="0.6"/><line x1="418.5" y1="392.5" x2="421.92" y2="401.54" stroke="#FFC8C8" stroke-width="0.6"/><line x1="442.74" y1="379.95" x2="447.78" y2="386.79" stroke="#FFC8C8" stroke-width="0.6"/><line x1="429.03" y1="401.41" x2="437.86" y2="397.88" stroke="#FFC8C8" stroke-width="0.6"/><line x1="437.86" y1="397.88" x2="444.03" y2="401.41" stroke="#FFC8C8" stroke-width="0.6"/><line x1="420.81" y1="383.46" x2="418.5" y2="392.5" stroke="#FFC8C8" stroke-width="0.6"/><line x1="442.74" y1="379.95" x2="435.09" y2="377.75" stroke="#FFC8C8" stroke-width="0.6"/><line x1="426.97" y1="379.95" x2="427.97" y2="377.88" stroke="#FFC8C8" stroke-width="0.6"/><line x1="421.92" y1="401.54" x2="429.76" y2="407.12" stroke="#FFC8C8" stroke-width="0.6"/><line x1="423.03" y1="395.33" x2="421.92" y2="401.54" stroke="#FFC8C8" stroke-width="0.6"/><line x1="446.19" y1="401.54" x2="439.03" y2="407.12" stroke="#FFC8C8" stroke-width="0.6"/><line x1="419.22" y1="398.21" x2="421.92" y2="401.54" stroke="#FFC8C8" stroke-width="0.6"/><line x1="432.33" y1="383.26" x2="435.09" y2="377.75" stroke="#FFC8C8" stroke-width="0.6"/><line x1="438.04" y1="389.33" x2="430.02" y2="392.3" stroke="#FFC8C8" stroke-width="0.6"/><line x1="436.37" y1="404.83" x2="429.03" y2="401.41" stroke="#FFC8C8" stroke-width="0.6"/><line x1="436.37" y1="404.83" x2="444.03" y2="401.41" stroke="#FFC8C8" stroke-width="0.6"/><line x1="418.45" y1="389.67" x2="418.5" y2="392.5" stroke="#FFC8C8" stroke-width="0.6"/><line x1="448.55" y1="395.33" x2="447.78" y2="386.79" stroke="#FFC8C8" stroke-width="0.6"/><line x1="426.97" y1="379.95" x2="420.81" y2="383.46" stroke="#FFC8C8" stroke-width="0.6"/><line x1="448.55" y1="395.33" x2="446.19" y2="401.54" stroke="#FFC8C8" stroke-width="0.6"/><line x1="448.55" y1="395.33" x2="448.5" y2="392.5" stroke="#FFC8C8" stroke-width="0.6"/><line x1="424.26" y1="405.05" x2="429.76" y2="407.12" stroke="#FFC8C8" stroke-width="0.6"/><line x1="423.51" y1="386.79" x2="418.5" y2="392.5" stroke="#FFC8C8" stroke-width="0.6"/><line x1="436.37" y1="404.83" x2="429.76" y2="407.12" stroke="#FFC8C8" stroke-width="0.6"/><line x1="423.03" y1="395.33" x2="430.02" y2="392.3" stroke="#FFC8C8" stroke-width="0.6"/><line x1="430.02" y1="392.3" x2="437.86" y2="397.88" stroke="#FFC8C8" stroke-width="0.6"/><line x1="441.6" y1="383.26" x2="445.02" y2="392.3" stroke="#FFC8C8" stroke-width="0.6"/><line x1="423.51" y1="386.79" x2="432.33" y2="383.26" stroke="#FFC8C8" stroke-width="0.6"/><line x1="418.5" y1="392.5" x2="419.22" y2="398.21" stroke="#FFC8C8" stroke-width="0.6"/><line x1="423.03" y1="395.33" x2="429.03" y2="401.41" stroke="#FFC8C8" stroke-width="0.6"/><line x1="429.03" y1="401.41" x2="421.92" y2="401.54" stroke="#FFC8C8" stroke-width="0.6"/><line x1="427.97" y1="377.88" x2="420.81" y2="383.46" stroke="#FFC8C8" stroke-width="0.6"/><line x1="429.76" y1="407.12" x2="431.91" y2="407.25" stroke="#FFC8C8" stroke-width="0.6"/><line x1="438.04" y1="389.33" x2="445.02" y2="392.3" stroke="#FFC8C8" stroke-width="0.6"/><line x1="446.19" y1="401.54" x2="444.03" y2="401.41" stroke="#FFC8C8" stroke-width="0.6"/><line x1="438.04" y1="389.33" x2="441.6" y2="383.26" stroke="#FFC8C8" stroke-width="0.6"/><line x1="448.55" y1="395.33" x2="445.02" y2="392.3" stroke="#FFC8C8" stroke-width="0.6"/><line x1="435.09" y1="377.75" x2="427.97" y2="377.88" stroke="#FFC8C8" stroke-width="0.6"/><line x1="444.03" y1="401.41" x2="439.03" y2="407.12" stroke="#FFC8C8" stroke-width="0.6"/><line x1="439.03" y1="407.12" x2="429.76" y2="407.12" stroke="#FFC8C8" stroke-width="0.6"/><line x1="445.02" y1="392.3" x2="444.03" y2="401.41" stroke="#FFC8C8" stroke-width="0.6"/><line x1="426.97" y1="379.95" x2="423.51" y2="386.79" stroke="#FFC8C8" stroke-width="0.6"/><line x1="423.03" y1="395.33" x2="423.51" y2="386.79" stroke="#FFC8C8" stroke-width="0.6"/><line x1="447.78" y1="386.79" x2="448.5" y2="392.5" stroke="#FFC8C8" stroke-width="0.6"/><line x1="423.03" y1="395.33" x2="418.5" y2="392.5" stroke="#FFC8C8" stroke-width="0.6"/><line x1="448.55" y1="395.33" x2="444.03" y2="401.41" stroke="#FFC8C8" stroke-width="0.6"/><line x1="430.02" y1="392.3" x2="429.03" y2="401.41" stroke="#FFC8C8" stroke-width="0.6"/><rect x="426.02" y="379" width="1.9" height="1.9" fill="#FFFFFF"/><rect x="441.79" y="379" width="1.9" height="1.9" fill="#FFFFFF"/><rect x="435.42" y="403.88" width="1.9" height="1.9" fill="#FFFFFF"/><rect x="437.09" y="388.38" width="1.9" height="1.9" fill="#FFFFFF"/><rect x="447.6" y="394.38" width="1.9" height="1.9" fill="#FFFFFF"/><rect x="422.08" y="394.38" width="1.9" height="1.9" fill="#FFFFFF"/><rect x="422.56" y="385.84" width="1.9" height="1.9" fill="#FFFFFF"/><rect x="429.07" y="391.35" width="1.9" height="1.9" fill="#FFFFFF"/><rect x="431.38" y="382.31" width="1.9" height="1.9" fill="#FFFFFF"/><rect x="440.65" y="382.31" width="1.9" height="1.9" fill="#FFFFFF"/><rect x="434.14" y="376.8" width="1.9" height="1.9" fill="#FFFFFF"/><rect x="427.02" y="376.93" width="1.9" height="1.9" fill="#FFFFFF"/><rect x="419.86" y="382.51" width="1.9" height="1.9" fill="#FFFFFF"/><rect x="417.55" y="391.55" width="1.9" height="1.9" fill="#FFFFFF"/><rect x="444.07" y="391.35" width="1.9" height="1.9" fill="#FFFFFF"/><rect x="446.83" y="385.84" width="1.9" height="1.9" fill="#FFFFFF"/><rect x="428.08" y="400.46" width="1.9" height="1.9" fill="#FFFFFF"/><rect x="436.91" y="396.93" width="1.9" height="1.9" fill="#FFFFFF"/><rect x="420.97" y="400.59" width="1.9" height="1.9" fill="#FFFFFF"/><rect x="443.08" y="400.46" width="1.9" height="1.9" fill="#FFFFFF"/><rect x="438.08" y="406.17" width="1.9" height="1.9" fill="#FFFFFF"/><rect x="428.81" y="406.17" width="1.9" height="1.9" fill="#FFFFFF"/><path d="M288.5 345.5H300.5V349.5H292.5V352.5H300.5V364.5H288.5Z M292.5 357.5H296.5V360.5H292.5Z" fill="#FFFF30" fill-rule="evenodd" stroke="#000" stroke-width="1"/></svg><!--/VP-->
<!--PANEL--><div class="t" style="left:-2.8px;top:-1.0px;">Tools</div>
<div class="t" style="left:24.2px;top:-1.0px;">Window</div>
<div class="t" style="left:61.2px;top:-1.0px;">Help</div>
<!-- right panel -->
<div class="a" style="left:657px;top:27px;width:1px;height:628px;background:#9C9B94"></div>
<div class="a" style="left:691px;top:13px;width:32px;height:15px;border:1px solid #919B9C;border-bottom:none;border-radius:3px 3px 0 0;background:linear-gradient(#FFFFFF,#F3F2EC)"></div>
<div class="t" style="left:694.3px;top:15.6px;">Groups</div>
<div class="a" style="left:724px;top:13px;width:40px;height:15px;border:1px solid #919B9C;border-bottom:none;border-radius:3px 3px 0 0;background:linear-gradient(#FFFFFF,#F3F2EC)"></div>
<div class="t" style="left:728.1px;top:15.6px;">Materials</div>
<div class="a" style="left:764px;top:13px;width:30px;height:15px;border:1px solid #919B9C;border-bottom:none;border-radius:3px 3px 0 0;background:linear-gradient(#FFFFFF,#F3F2EC)"></div>
<div class="t" style="left:768.5px;top:15.6px;">Joints</div>
<div class="a" style="left:657px;top:27px;width:143px;height:1px;background:#919B9C"></div>
<div class="a" style="left:657px;top:12px;width:34px;height:17px;border:1px solid #919B9C;border-bottom:none;border-radius:3px 3px 0 0;background:#FCFCFE"></div>
<div class="a" style="left:658px;top:12px;width:32px;height:2px;background:#F2B545;border-radius:2px 2px 0 0"></div>
<div class="t" style="left:663.2px;top:14.0px;">Model</div>
<div class="a" style="left:658px;top:28px;width:142px;height:627px;background:linear-gradient(90deg,#F8F7F0 0,#F8F7F0 2px,#ECE9D8 3px)"></div>
<div class="a" style="left:658px;top:28px;width:142px;height:3px;background:linear-gradient(#FCFCFA,#ECE9D8)"></div>
<div class="a" style="left:661px;top:35px;width:137px;height:181px;border:1px solid #D0D0BF;border-radius:4px"></div>
<div class="t" style="left:666px;top:29.7px;color:#1D3D7C;padding-left:1px;padding-right:2px;background:#ECE9D8;">Tools</div>
<div class="btn pr" style="left:668px;top:45px;width:59px"><span>Select</span></div>
<div class="btn " style="left:731px;top:45px;width:59px"><span>Move</span></div>
<div class="btn " style="left:668px;top:60px;width:59px"><span>Rotate</span></div>
<div class="btn " style="left:731px;top:60px;width:59px"><span>Scale</span></div>
<div class="btn " style="left:668px;top:79px;width:59px"><span>Vertex</span></div>
<div class="btn " style="left:731px;top:79px;width:59px"><span>Face</span></div>
<div class="btn " style="left:668px;top:94px;width:59px"><span>Sphere</span></div>
<div class="btn " style="left:731px;top:94px;width:59px"><span>GeoSphere</span></div>
<div class="btn " style="left:668px;top:108.5px;width:59px"><span>Box</span></div>
<div class="btn " style="left:731px;top:108.5px;width:59px"><span>Cylinder</span></div>
<div class="btn " style="left:668px;top:123px;width:59px"><span>Plane</span></div>
<div class="btn " style="left:668px;top:142px;width:59px"><span>Extrude</span></div>
<div class="btn " style="left:731px;top:142px;width:59px"><span>Joint</span></div>
<div class="btn pl" style="left:668px;top:164px;width:59px"><span>Comment</span></div>
<div class="cb" style="left:667px;top:181px"><svg width="8" height="8" style="position:absolute;left:0;top:0"><path d="M1.6 3.6 L3.4 5.5 L6.6 1.9" fill="none" stroke="#2A8A2A" stroke-width="1.5"/></svg></div>
<div class="t" style="left:679.9px;top:181.6px;">Redraw All Viewports</div>
<div class="cb" style="left:667px;top:196px"><svg width="8" height="8" style="position:absolute;left:0;top:0"><path d="M1.6 3.6 L3.4 5.5 L6.6 1.9" fill="none" stroke="#2A8A2A" stroke-width="1.5"/></svg></div>
<div class="t" style="left:679.5px;top:196.6px;">Auto Tool</div>
<div class="a" style="left:661px;top:224px;width:137px;height:62px;border:1px solid #D0D0BF;border-radius:4px"></div>
<div class="t" style="left:666px;top:219.8px;color:#1D3D7C;padding-left:1px;padding-right:2px;background:#ECE9D8;">Select Options</div>
<div class="btn pl sm" style="left:668px;top:231px;width:27px"><span>Vertex</span></div>
<div class="btn sm" style="left:699px;top:231px;width:27px"><span>Face</span></div>
<div class="btn sm" style="left:731px;top:231px;width:27px"><span>Group</span></div>
<div class="btn sm" style="left:762px;top:231px;width:27px"><span>Joint</span></div>
<div class="cb" style="left:667px;top:251px"></div>
<div class="t" style="left:679.9px;top:251.6px;">Ignore Backfaces</div>
<div class="cb" style="left:667px;top:266px;border-color:#CAC8BB;background:#FFFFFF"></div>
<div class="t" style="left:680px;top:266.5px;color:#ACA899;">By Vertex</div><!--/PANEL-->
</body></html>
